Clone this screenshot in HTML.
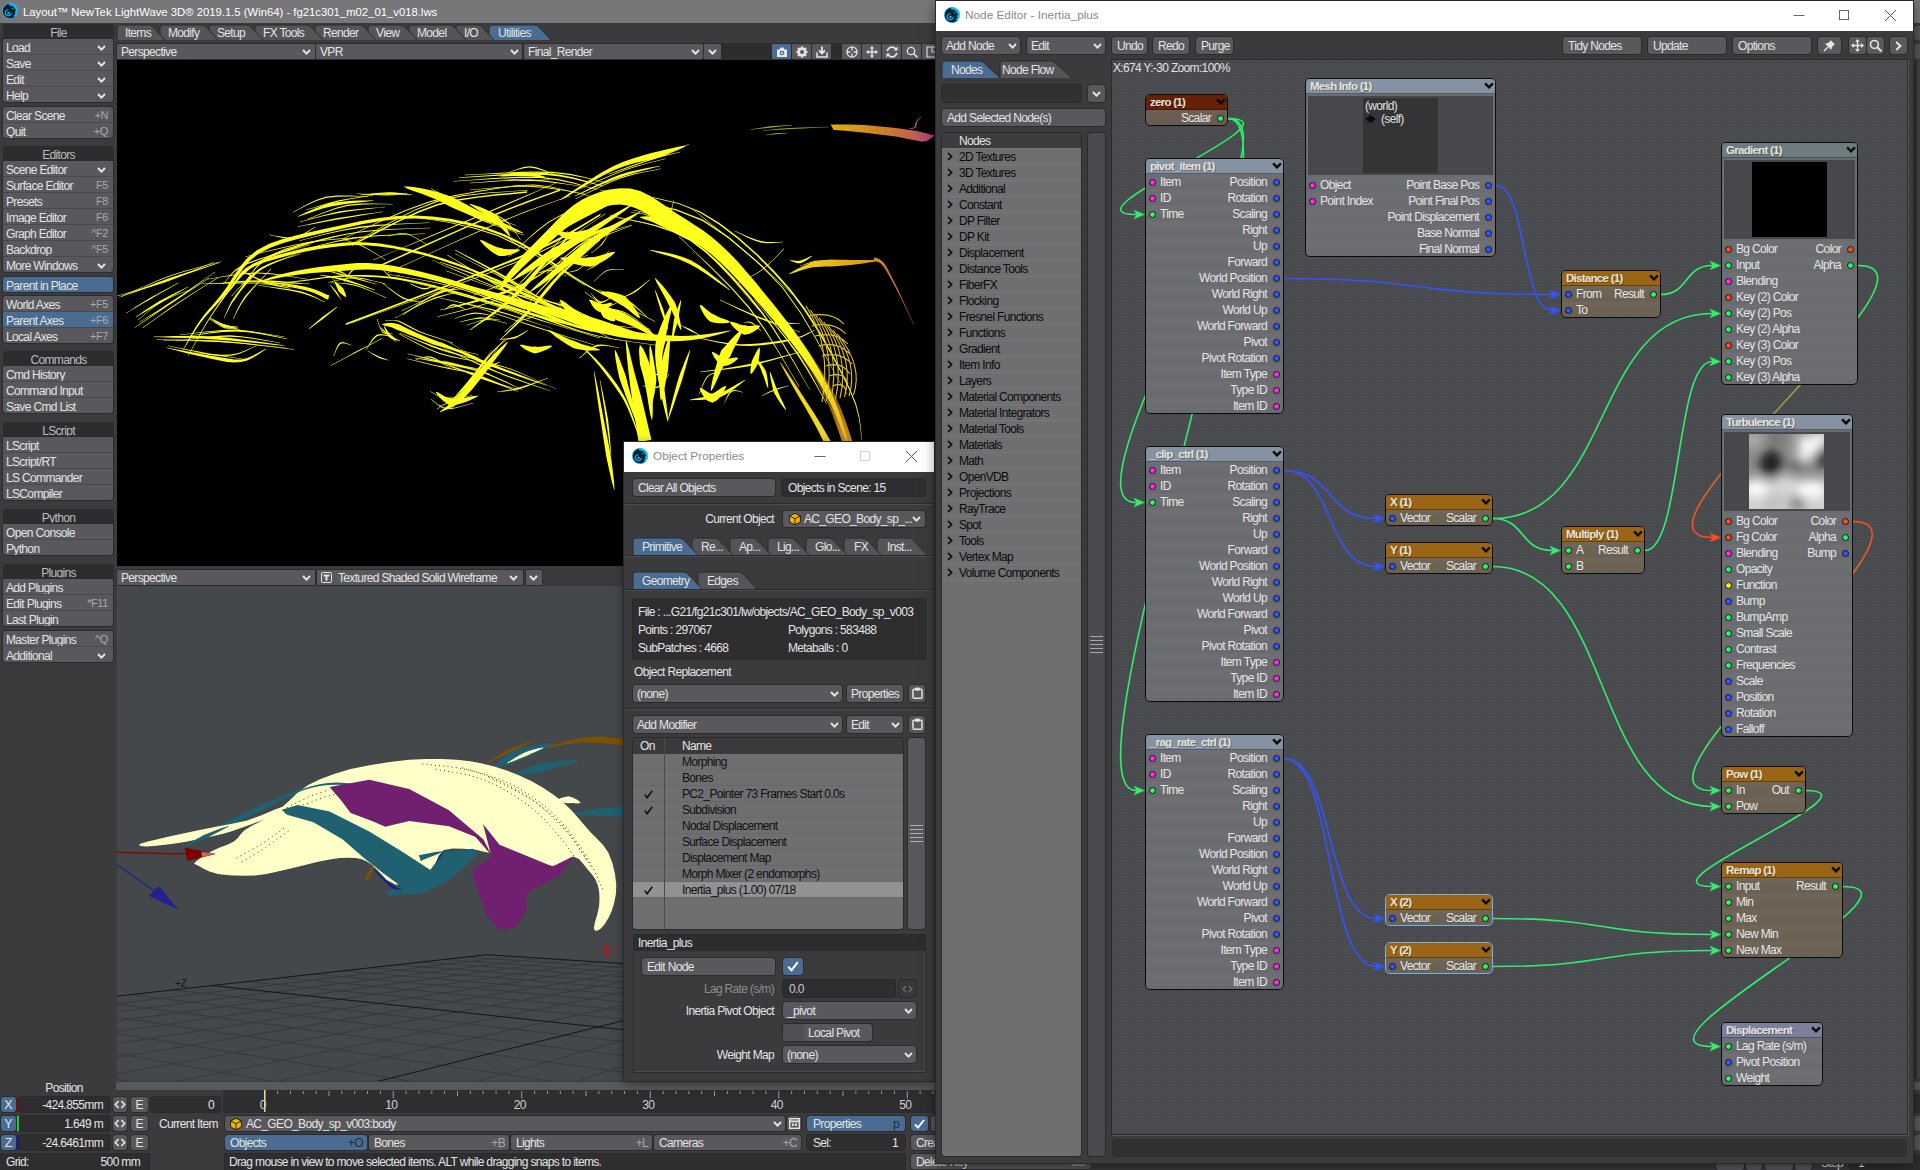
<!DOCTYPE html><html><head><meta charset="utf-8"><title>LightWave</title><style>

*{box-sizing:border-box}
html,body{margin:0;padding:0}
body{width:1920px;height:1170px;position:relative;overflow:hidden;background:#3b3b3d;font-family:"Liberation Sans",sans-serif;font-size:12px;letter-spacing:-0.66px;color:#e4e4e4;line-height:16px;white-space:nowrap;-webkit-font-smoothing:antialiased}
.a{position:absolute}
.b{position:absolute;background:#59595d;border-radius:3px;box-shadow:0 0 0 1px #2c2c2e;padding-left:4px;overflow:hidden}
.bl{background:#4a6c92}
.fl{border-radius:1px}
.hd{position:absolute;background:#2d2d2f;border-radius:3px 3px 0 0;text-align:center;color:#bcbcbc}
.row{position:absolute;left:0;right:0;height:16px;border-top:1px solid #4a4a4e;padding-left:3px;line-height:19px}
.sc{position:absolute;right:5px;top:-1px;color:#a8a8ac;font-size:11px;letter-spacing:-0.4px}
.fld{position:absolute;background:#2e2e30;border-radius:3px;box-shadow:0 0 0 1px #2a2a2c;overflow:hidden}
.chev{position:absolute;width:9px;height:6px}


.nd{position:absolute;border:1px solid #0c0c0c;border-radius:5px;overflow:hidden;color:#e6e6e6}
.nh{position:absolute;left:0;top:0;right:0;height:15px;border-bottom:1px solid rgba(0,0,0,.35);padding-left:4px;font-weight:bold;font-size:11.5px;letter-spacing:-0.72px;line-height:15px;color:#e8e4dc;text-shadow:1px 1px 0 rgba(0,0,0,.28)}
.nr{position:absolute;left:0;right:0;height:16px;background:linear-gradient(rgba(255,255,255,.022),rgba(0,0,0,.012));border-top:1px solid rgba(255,255,255,.04)}
.pt{position:absolute;width:7px;height:7px;border-radius:50%;border:1px solid #141414}
.lr{position:absolute;left:0;right:0;height:16px;border-top:1px solid #78787a;color:#0a0a0a}

</style></head><body>
<svg class="a" style="left:117px;top:60px" width="820" height="506" viewBox="117 60 820 506"><rect x="117" y="60" width="820" height="506" fill="#000"/><defs><linearGradient id="gm" gradientUnits="userSpaceOnUse" x1="830" y1="0" x2="935" y2="0"><stop offset="0" stop-color="#e0b010"/><stop offset="0.45" stop-color="#d08420"/><stop offset="0.8" stop-color="#c06050"/><stop offset="1" stop-color="#a83c90"/></linearGradient><linearGradient id="gn" gradientUnits="userSpaceOnUse" x1="790" y1="260" x2="915" y2="325"><stop offset="0" stop-color="#f0e018"/><stop offset="0.55" stop-color="#d89018"/><stop offset="0.8" stop-color="#c85838"/><stop offset="1" stop-color="#c03070"/></linearGradient><linearGradient id="gk" gradientUnits="userSpaceOnUse" x1="700" y1="240" x2="850" y2="440"><stop offset="0" stop-color="#ffff1e" stop-opacity="0"/><stop offset="0.55" stop-color="#f0c020" stop-opacity="0"/><stop offset="1" stop-color="#e0a020" stop-opacity=".9"/></linearGradient></defs><g fill="#ffff1e"><path d="M118.8 297.8L125.8 295.3L135.8 291.9L147.4 287.8L159.3 283.6L170.3 279.9L181.0 276.1L192.3 272.2L203.2 268.4L212.5 265.2L219.1 262.9L218.9 262.5L212.3 264.6L202.9 267.5L191.9 270.9L180.5 274.6L169.7 278.1L158.8 282.1L147.0 286.5L135.5 290.9L125.6 294.7L118.6 297.4Z"/><path d="M136.1 317.2L139.4 315.3L144.0 312.6L149.3 309.4L155.0 306.0L160.5 302.9L166.3 299.5L172.8 295.8L179.2 292.2L184.7 289.1L188.6 286.9L188.4 286.5L184.4 288.5L178.7 291.2L172.1 294.5L165.4 297.9L159.5 301.1L154.0 304.5L148.5 308.1L143.3 311.6L139.0 314.7L135.9 316.8Z"/><path d="M140.1 322.2L144.8 319.3L151.4 315.4L159.2 310.7L167.4 305.6L175.4 300.6L183.6 294.8L192.8 288.3L201.8 281.8L209.6 276.1L215.1 272.2L214.9 271.8L209.3 275.7L201.4 281.2L192.3 287.5L183.0 293.9L174.6 299.4L166.8 304.6L158.7 309.9L151.1 314.8L144.5 318.9L139.9 321.8Z"/><path d="M153.6 337.0L161.8 337.3L173.4 337.7L186.9 338.0L201.2 338.6L214.9 339.5L229.4 340.5L245.4 341.9L261.2 343.5L274.8 344.9L284.4 345.7L284.4 345.3L274.9 343.9L261.3 342.0L245.6 339.9L229.6 338.0L215.1 336.5L201.3 336.1L186.9 336.0L173.4 336.1L161.8 336.4L153.6 336.6Z"/><path d="M166.6 347.9L171.9 349.3L179.2 351.3L187.8 353.4L196.7 355.5L204.7 357.3L212.2 358.9L219.7 360.6L227.1 361.9L234.3 362.5L241.0 362.1L247.3 360.4L253.3 357.5L258.6 354.3L263.0 351.2L266.1 349.2L265.9 348.8L262.5 350.5L257.9 353.1L252.4 355.9L246.6 358.2L240.6 359.5L234.4 359.5L227.6 358.6L220.3 357.3L212.8 356.0L205.3 354.7L197.1 353.3L188.2 351.6L179.5 349.9L172.0 348.5L166.8 347.5Z"/><path d="M176.0 341.2L183.4 340.4L193.9 339.1L206.1 337.8L218.6 336.9L230.0 336.7L241.0 337.3L252.6 338.7L263.7 340.5L273.2 342.1L280.0 343.2L280.0 342.8L273.3 341.6L263.9 339.8L252.8 337.8L241.1 336.2L230.0 335.3L218.6 335.7L206.0 336.9L193.9 338.4L183.4 339.9L176.0 340.8Z"/><path d="M209.9 318.2L211.8 319.6L214.7 321.6L218.0 323.7L221.4 325.8L224.6 327.3L227.8 327.8L230.9 327.9L233.8 327.7L236.3 327.4L238.0 327.2L238.0 326.8L236.3 326.5L233.8 326.3L231.0 326.0L228.1 325.5L225.4 324.7L222.4 323.7L218.9 322.1L215.4 320.3L212.3 318.8L210.1 317.8Z"/><path d="M182.2 352.1L184.6 348.0L188.1 342.2L192.1 335.5L196.4 328.7L200.7 322.5L204.9 317.3L209.1 312.5L213.6 307.7L218.6 302.3L224.2 295.9L230.0 287.9L235.8 278.8L242.3 269.4L249.8 260.7L259.0 253.4L270.3 247.8L283.3 243.0L297.6 238.9L312.8 235.3L328.4 231.7L344.7 228.0L361.9 224.3L379.6 221.2L397.4 219.0L415.0 218.5L432.3 219.4L449.6 221.4L466.9 224.7L484.2 229.3L501.6 235.4L519.3 243.8L537.5 254.4L555.6 266.1L573.0 277.4L589.2 287.3L604.8 295.8L620.2 304.0L634.4 311.2L646.3 317.3L654.9 321.7L655.1 321.3L646.6 316.8L634.7 310.6L620.6 303.1L605.3 294.8L589.8 286.1L573.8 276.2L556.5 264.6L538.5 252.8L520.3 242.0L502.4 233.4L484.9 227.1L467.4 222.3L450.0 218.8L432.5 216.6L415.0 215.5L397.2 216.0L379.2 218.0L361.3 221.1L343.9 224.7L327.6 228.3L311.9 231.7L296.6 235.2L282.1 239.2L268.7 244.1L257.0 250.2L247.3 258.0L239.5 267.3L233.1 277.0L227.4 286.2L221.8 294.1L216.5 300.5L211.8 306.0L207.4 311.0L203.3 316.0L199.3 321.5L195.1 327.9L191.0 334.9L187.3 341.8L184.1 347.7L181.8 351.9Z"/><path d="M188.2 356.1L191.8 349.8L196.7 340.8L202.6 330.5L209.0 319.9L215.4 310.3L221.7 301.3L228.2 292.3L235.1 283.6L242.4 275.6L250.5 268.6L259.3 262.9L268.8 258.2L278.9 254.1L289.4 250.4L300.2 246.8L311.4 243.2L323.0 240.0L334.9 237.1L347.3 234.6L360.1 232.5L374.5 230.9L390.7 229.8L406.6 229.1L420.3 228.6L430.0 228.2L430.0 227.8L420.3 228.1L406.6 228.6L390.6 229.1L374.4 230.1L359.9 231.5L347.1 233.5L334.7 235.9L322.6 238.7L311.0 241.8L299.8 245.2L288.8 248.7L278.2 252.4L268.1 256.5L258.4 261.4L249.5 267.4L241.4 274.5L234.0 282.7L227.2 291.6L220.8 300.7L214.6 309.7L208.3 319.5L202.0 330.1L196.2 340.6L191.3 349.6L187.8 355.9Z"/><path d="M219.2 304.1L220.9 301.9L223.2 298.9L226.0 295.3L229.2 291.5L232.7 287.5L235.9 283.4L238.9 278.9L242.5 274.5L247.4 270.2L254.5 266.2L264.7 262.3L277.5 258.4L291.6 254.7L305.9 251.6L319.3 249.1L331.4 247.2L343.0 245.9L354.6 245.1L366.7 245.3L379.8 246.4L394.2 248.5L409.5 251.7L425.4 255.6L441.8 260.4L458.3 265.9L475.6 272.5L493.7 280.2L511.9 288.5L529.5 296.8L545.7 304.6L561.2 312.3L576.5 320.4L590.6 328.0L602.4 334.5L610.9 339.2L611.1 338.8L602.6 334.1L590.9 327.4L576.9 319.6L561.7 311.3L546.3 303.4L530.1 295.5L512.6 287.0L494.4 278.5L476.3 270.7L459.1 263.9L442.5 258.3L426.1 253.3L410.1 249.2L394.7 245.9L380.2 243.6L366.8 242.4L354.5 242.1L342.7 242.7L331.0 244.0L318.7 245.7L305.2 248.1L290.8 251.5L276.6 255.3L263.7 259.5L253.3 263.6L245.9 268.1L240.7 272.8L237.2 277.7L234.3 282.3L231.3 286.5L228.1 290.5L225.1 294.6L222.5 298.4L220.4 301.6L218.8 303.9Z"/><path d="M258.1 282.2L262.4 281.4L268.5 280.1L275.5 278.6L283.0 277.0L290.3 275.8L297.3 274.8L304.4 273.9L311.8 273.1L319.7 272.5L328.3 271.9L337.5 271.3L347.2 270.5L357.4 269.7L368.1 269.5L379.7 270.1L392.2 271.7L405.7 274.0L419.9 277.0L434.5 280.5L449.3 284.4L464.7 288.9L480.9 294.2L497.2 299.7L513.1 305.2L527.9 310.3L541.1 315.0L553.4 319.6L565.1 323.9L576.9 327.8L589.2 331.1L603.2 333.7L618.4 335.7L633.2 337.3L646.0 338.4L655.0 339.2L655.0 338.8L646.1 337.6L633.4 336.0L618.6 334.1L603.5 331.8L589.8 328.9L577.7 325.3L566.1 321.2L554.5 316.5L542.4 311.7L529.1 306.7L514.5 301.4L498.7 295.7L482.4 289.9L466.2 284.4L450.7 279.6L435.8 275.4L421.2 271.7L406.9 268.4L393.2 265.8L380.3 263.9L368.3 263.1L357.1 263.1L346.6 263.9L336.9 265.0L327.7 266.1L319.1 267.1L311.2 268.2L303.8 269.4L296.7 270.7L289.7 272.2L282.4 274.0L274.9 276.1L268.0 278.3L262.1 280.3L257.9 281.8Z"/><path d="M262.0 285.2L267.1 284.7L274.2 284.0L282.5 283.2L291.4 282.3L300.1 281.4L308.5 280.4L317.1 279.2L326.0 278.1L335.3 277.2L345.0 276.7L355.1 276.6L365.5 276.8L376.4 277.3L387.8 278.3L399.9 279.9L412.9 282.3L426.7 285.3L441.1 288.8L455.6 292.7L469.8 296.7L484.0 301.1L498.3 306.0L512.5 311.0L526.5 315.9L539.9 320.4L553.5 324.6L567.5 328.8L580.7 332.6L591.9 335.9L599.9 338.2L600.1 337.8L592.1 335.4L580.9 332.1L567.7 328.2L553.7 323.9L540.1 319.6L526.8 315.0L512.9 310.0L498.7 304.8L484.4 299.8L470.2 295.3L456.0 291.2L441.5 287.2L427.1 283.6L413.2 280.5L400.1 278.1L388.0 276.5L376.5 275.6L365.6 275.1L355.1 275.1L345.0 275.3L335.2 275.8L325.9 276.9L316.9 278.1L308.3 279.4L299.9 280.6L291.3 281.6L282.4 282.6L274.1 283.5L267.0 284.2L262.0 284.8Z"/><path d="M224.2 318.1L225.6 315.2L227.7 311.3L230.1 306.6L233.1 301.5L236.7 296.5L240.8 291.1L245.6 285.2L250.8 279.2L256.4 273.5L262.4 268.7L269.7 264.7L278.3 261.3L287.1 258.3L294.7 255.9L300.1 254.2L299.9 253.8L294.6 255.4L286.8 257.5L278.0 260.2L269.2 263.4L261.6 267.3L255.2 272.1L249.3 277.8L244.0 283.9L239.4 290.0L235.3 295.5L231.9 300.8L229.1 306.0L226.9 310.9L225.2 315.0L223.8 317.9Z"/><path d="M298.1 216.7L302.5 215.3L308.6 213.2L315.8 210.7L323.5 208.3L331.1 206.5L339.4 204.9L349.1 203.6L358.7 202.5L367.1 201.5L373.0 200.7L373.0 200.3L367.1 200.4L358.6 200.6L348.8 201.1L339.0 201.9L330.3 203.1L322.6 205.4L314.9 208.4L307.9 211.5L302.1 214.3L297.9 216.3Z"/><path d="M300.1 222.2L305.4 220.8L313.0 218.8L321.8 216.6L331.2 214.4L340.1 212.7L349.5 211.2L359.9 209.9L370.0 208.8L378.8 207.8L385.0 207.2L385.0 206.8L378.8 207.4L370.0 208.0L359.7 208.9L349.3 210.0L339.9 211.3L330.9 213.3L321.6 215.7L312.8 218.1L305.3 220.3L299.9 221.8Z"/><path d="M360.0 195.2L364.3 194.9L370.3 194.5L377.3 194.1L384.2 193.8L390.0 193.7L394.9 193.8L399.6 194.1L403.9 194.5L407.4 194.9L410.0 195.2L410.0 194.8L407.5 194.4L404.0 193.8L399.7 193.1L395.0 192.6L390.0 192.3L384.1 192.6L377.2 193.1L370.3 193.8L364.2 194.4L360.0 194.8Z"/><path d="M403.9 186.8L408.1 188.9L414.1 191.2L421.1 193.6L428.7 196.4L436.1 199.6L443.7 203.3L451.9 207.4L460.7 211.2L469.7 215.0L478.7 218.5L488.2 222.0L498.4 225.6L508.2 229.0L516.7 231.7L522.9 233.2L523.1 232.8L517.5 229.7L509.5 225.7L500.1 221.3L490.3 216.8L481.3 212.5L472.9 208.1L464.4 203.6L455.8 199.0L447.2 195.3L438.9 192.4L430.7 190.2L422.5 188.5L415.0 187.2L408.7 186.5L404.1 186.4Z"/><path d="M469.9 204.2L473.1 206.8L477.9 210.0L483.4 213.5L488.7 217.2L492.9 220.6L496.8 223.6L500.6 227.3L504.1 231.0L507.2 234.1L509.8 236.1L510.2 235.9L509.0 232.8L507.0 228.9L504.3 224.3L501.0 219.6L497.1 215.4L491.8 212.3L485.7 209.4L479.5 206.8L474.1 204.9L470.1 203.8Z"/><path d="M458.7 177.9L471.1 177.3L488.8 176.3L509.1 175.3L529.1 174.7L545.9 175.1L560.0 176.5L573.4 179.0L585.4 181.9L595.3 184.5L602.5 186.2L602.7 185.8L595.5 183.8L585.7 180.8L573.7 177.5L560.3 174.7L546.1 172.9L529.1 172.9L509.1 173.8L488.8 175.2L471.0 176.6L458.7 177.5Z"/><path d="M470.0 183.2L478.3 182.7L489.9 181.9L503.5 181.1L517.4 180.6L530.0 180.7L542.1 181.4L554.9 182.9L567.1 184.6L577.6 186.1L585.0 187.2L585.0 186.8L577.6 185.6L567.3 183.9L555.1 181.9L542.3 180.3L530.0 179.3L517.3 179.4L503.5 180.2L489.9 181.2L478.2 182.2L470.0 182.8Z"/><path d="M500.0 176.2L503.1 176.4L507.3 176.3L512.2 176.1L517.3 176.1L521.9 176.3L526.7 176.3L532.0 176.6L537.2 177.0L541.7 177.2L545.0 177.2L545.0 176.8L542.0 175.8L537.6 174.6L532.5 173.4L527.1 172.4L522.1 171.7L517.1 172.2L511.9 172.9L507.0 173.9L502.9 174.9L500.0 175.8Z"/><path d="M352.3 245.7L363.9 239.8L380.2 231.2L399.2 221.5L419.1 212.4L437.7 205.5L456.7 201.0L477.4 197.8L497.5 195.6L514.8 194.0L527.1 192.7L526.9 191.3L514.7 192.6L497.4 194.1L477.2 196.4L456.4 199.6L437.3 204.1L418.5 211.0L398.6 220.2L379.5 229.8L363.2 238.4L351.7 244.3Z"/><path d="M378.0 267.5L394.5 260.1L418.1 249.4L445.1 237.3L471.5 225.6L493.3 216.2L510.8 209.0L526.8 202.9L540.6 197.8L551.9 193.8L560.3 190.7L559.7 189.3L551.4 192.4L540.1 196.4L526.2 201.5L510.3 207.7L492.7 214.8L470.9 224.2L444.5 235.9L417.5 248.1L393.8 258.7L377.4 266.1Z"/><path d="M345.9 325.1L372.3 315.0L410.6 300.5L453.8 284.0L495.0 267.9L527.3 254.7L550.0 244.2L567.9 234.9L581.6 226.9L592.2 220.4L600.4 215.6L599.6 214.4L591.4 219.2L580.9 225.6L567.2 233.6L549.4 242.9L526.7 253.3L494.5 266.5L453.3 282.6L410.0 299.1L371.7 313.6L345.3 323.7Z"/><path d="M309.2 328.9L323.6 318.6L337.2 307.2L336.8 306.8L322.4 317.1L308.8 328.5Z"/><path d="M210.0 284.2L216.8 283.8L226.4 283.2L237.6 282.5L249.2 282.0L260.0 281.8L270.8 282.0L282.4 282.5L293.6 283.2L303.2 283.8L310.0 284.2L310.0 283.8L303.2 283.2L293.6 282.3L282.4 281.3L270.8 280.6L260.0 280.2L249.2 280.6L237.6 281.3L226.4 282.3L216.8 283.2L210.0 283.8Z"/><path d="M262.0 281.2L268.1 282.3L276.9 283.8L287.0 285.5L296.8 287.4L304.7 289.3L310.8 291.4L316.3 293.7L320.9 296.1L324.7 298.2L327.5 299.8L329.5 295.6L326.5 294.4L322.6 292.7L317.6 290.6L311.8 288.5L305.3 286.7L297.2 285.2L287.3 283.8L277.1 282.5L268.2 281.5L262.0 280.8Z"/><path d="M334.8 282.2L335.1 283.6L335.9 285.5L336.9 287.6L337.9 289.7L338.8 291.6L340.3 292.9L341.8 294.3L343.2 295.6L344.6 296.6L345.8 297.1L346.2 296.9L346.1 295.6L345.6 293.9L344.8 292.1L344.0 290.2L343.2 288.4L341.6 287.0L339.9 285.4L338.2 283.8L336.5 282.6L335.2 281.8Z"/><path d="M320.0 275.2L323.3 275.9L327.9 277.0L333.3 278.1L339.1 279.5L344.7 281.0L350.9 282.7L357.8 284.8L364.7 287.0L370.7 288.9L374.9 290.2L375.1 289.8L371.0 288.2L365.1 285.9L358.3 283.4L351.4 281.0L345.3 279.0L339.5 277.7L333.6 276.7L328.1 275.8L323.4 275.3L320.0 274.8Z"/><path d="M382.0 324.6L383.6 325.3L385.8 325.9L388.4 326.5L391.3 327.3L394.3 328.4L397.4 329.9L401.1 331.3L405.2 333.1L409.9 335.0L415.2 337.1L421.3 339.3L428.2 341.8L435.4 344.4L442.7 347.0L449.5 349.3L456.3 351.6L463.4 353.8L470.1 355.9L475.8 357.6L479.9 358.8L480.1 358.4L476.1 356.8L470.6 354.6L464.0 352.0L457.1 349.3L450.5 346.7L443.8 344.0L436.7 341.1L429.5 338.2L422.8 335.4L416.8 332.9L411.8 330.6L407.3 328.4L403.3 326.4L399.5 324.6L395.7 323.6L392.1 323.1L388.8 323.0L385.9 323.3L383.7 323.7L382.0 324.2Z"/><path d="M383.8 326.1L384.3 327.7L385.1 329.9L386.1 332.4L387.4 334.9L389.0 337.1L391.2 338.5L393.7 339.5L396.2 340.3L398.4 340.8L399.9 341.2L400.1 340.8L398.8 340.0L396.8 338.9L394.6 337.7L392.6 336.3L391.0 334.9L389.5 333.4L387.9 331.4L386.5 329.2L385.2 327.2L384.2 325.9Z"/><path d="M399.9 333.2L405.3 335.5L412.7 338.8L421.5 342.6L430.8 346.4L439.7 349.8L449.2 352.7L459.6 355.6L469.9 358.3L478.7 360.5L484.9 362.2L485.1 361.8L478.9 360.0L470.1 357.5L460.0 354.5L449.6 351.3L440.3 348.2L431.3 345.1L421.9 341.5L413.0 338.0L405.5 335.0L400.1 332.8Z"/><path d="M415.0 358.2L419.6 359.1L426.2 360.3L433.9 361.7L442.0 363.2L449.8 364.9L458.1 366.7L467.4 368.8L476.5 371.0L484.4 372.9L489.9 374.2L490.1 373.8L484.6 372.3L476.8 370.0L467.7 367.6L458.5 365.1L450.2 363.1L442.3 361.7L434.1 360.4L426.3 359.3L419.7 358.4L415.0 357.8Z"/><path d="M395.1 318.2L400.0 315.6L407.0 311.9L415.0 307.8L423.1 303.8L430.3 300.6L436.7 298.2L443.2 296.2L449.2 294.5L454.4 293.2L458.1 292.2L457.9 291.8L454.2 292.7L449.1 293.8L442.9 295.2L436.3 297.1L429.7 299.4L422.6 302.7L414.6 306.9L406.6 311.3L399.8 315.2L394.9 317.8Z"/><path d="M460.1 322.2L462.8 321.6L466.6 320.7L471.1 319.8L475.8 319.1L480.0 318.7L484.3 318.6L488.9 318.9L493.4 319.4L497.2 319.9L500.0 320.2L500.0 319.8L497.3 319.4L493.5 318.7L489.0 318.0L484.3 317.5L480.0 317.3L475.6 317.9L470.9 318.9L466.5 320.1L462.7 321.1L459.9 321.8Z"/><path d="M500.2 290.1L502.2 288.5L504.4 286.2L507.0 283.2L510.4 279.5L515.0 274.9L521.2 268.8L528.8 261.5L537.2 253.6L545.7 245.8L553.6 238.8L560.9 232.4L567.8 226.2L574.5 220.6L581.2 215.9L588.1 212.2L595.9 209.2L604.1 206.7L612.3 205.1L620.3 204.6L627.6 205.4L634.5 207.7L642.1 211.1L650.3 215.9L658.9 221.3L667.8 226.7L676.8 231.8L685.6 236.9L694.3 242.2L703.0 248.0L711.6 254.6L720.2 262.3L728.9 270.8L737.7 280.0L746.5 289.7L755.4 299.6L764.5 309.9L773.8 320.8L782.9 331.9L791.7 342.9L799.6 353.4L806.6 363.4L813.1 373.1L819.0 382.6L824.5 392.0L829.7 401.6L834.5 412.0L839.2 423.3L843.3 434.2L846.9 443.5L849.8 450.1L850.2 449.9L848.5 443.0L845.9 433.3L842.5 422.1L838.6 410.4L834.3 399.4L829.7 389.3L824.7 379.4L819.2 369.3L813.1 359.1L806.4 348.6L798.8 337.6L790.4 326.1L781.6 314.5L772.6 303.2L763.8 292.4L755.3 282.1L746.7 271.9L738.1 262.1L729.3 252.9L720.4 244.4L711.4 236.8L702.4 230.1L693.5 224.2L684.7 218.6L676.2 213.3L667.8 207.6L659.3 201.7L650.3 196.0L640.8 191.2L630.4 188.6L620.0 188.2L609.8 189.5L599.9 192.1L590.6 195.6L581.9 199.8L573.8 204.9L566.4 210.9L559.7 217.5L553.1 224.3L546.4 231.2L538.9 238.8L530.9 247.3L523.0 255.8L515.9 263.8L510.2 270.5L506.1 276.0L503.3 280.6L501.5 284.4L500.4 287.4L499.8 289.9Z"/><path d="M560.1 200.2L567.8 195.9L578.6 189.6L591.0 182.3L603.6 175.3L614.8 169.8L625.0 166.0L635.1 163.1L644.9 160.7L653.9 158.7L661.7 156.2L668.4 153.7L674.2 151.5L679.0 149.5L682.8 147.8L685.6 146.2L685.4 145.8L682.3 146.1L678.1 146.8L673.0 147.9L667.1 149.3L660.3 151.0L652.4 152.8L643.5 155.3L633.7 158.2L623.4 161.7L613.2 166.2L602.0 172.3L589.6 179.9L577.5 187.8L567.1 194.8L559.9 199.8Z"/><path d="M575.1 196.2L581.4 193.5L590.3 189.6L600.6 185.1L611.0 180.7L620.4 177.3L629.3 174.3L638.5 171.7L647.3 169.5L654.7 167.6L660.1 166.2L659.9 165.8L654.5 166.8L647.0 168.1L638.1 169.9L628.6 172.1L619.6 174.7L610.2 178.6L599.8 183.4L589.7 188.3L581.0 192.7L574.9 195.8Z"/><path d="M600.0 190.2L613.7 192.3L633.2 194.8L655.8 198.5L678.9 204.1L699.7 212.5L718.7 224.2L737.7 238.7L756.1 255.1L773.4 272.7L789.3 290.6L804.0 309.9L817.8 331.2L830.3 352.9L841.0 373.1L849.5 390.2L855.2 404.2L858.4 416.1L860.1 426.0L860.9 434.0L861.8 440.0L862.2 440.0L861.4 434.0L860.7 426.0L859.2 415.9L856.1 403.8L850.5 389.8L842.1 372.5L831.5 352.2L819.2 330.4L805.4 308.9L790.7 289.4L774.7 271.5L757.2 253.9L738.6 237.5L719.5 223.1L700.3 211.5L679.2 203.2L656.0 197.7L633.3 194.2L613.8 191.8L600.0 189.8Z"/><path d="M609.9 215.2L621.0 217.9L636.6 221.4L654.7 226.0L673.1 232.3L689.6 240.6L704.4 251.6L719.1 264.9L733.3 279.7L746.8 295.2L759.4 310.4L771.6 327.0L783.4 345.4L794.2 363.5L803.3 379.1L809.8 390.1L810.2 389.9L803.7 378.8L794.9 363.1L784.3 344.9L772.6 326.3L760.6 309.6L748.1 294.1L734.6 278.5L720.3 263.6L705.5 250.3L690.4 239.4L673.6 231.2L655.0 225.1L636.8 220.7L621.1 217.4L610.1 214.8Z"/><path d="M520.2 262.2L526.0 258.0L533.8 251.7L542.9 244.3L552.5 237.0L561.8 230.8L571.5 224.7L582.7 218.7L593.8 213.0L603.5 208.1L610.1 204.2L609.9 203.8L602.6 206.1L592.4 209.8L580.7 214.4L568.8 219.6L558.2 225.2L548.9 232.4L539.8 240.7L531.4 249.1L524.5 256.4L519.8 261.8Z"/><path d="M540.2 270.2L545.8 266.2L553.5 260.4L562.6 253.7L572.0 247.1L581.0 241.8L590.1 236.9L600.3 232.4L610.4 228.3L619.0 224.9L625.1 222.2L624.9 221.8L618.6 223.6L609.6 226.3L599.3 229.8L588.7 233.8L579.0 238.2L570.1 244.3L560.9 251.5L552.2 258.8L544.9 265.2L539.8 269.8Z"/><path d="M555.9 232.2L557.7 233.9L560.5 235.8L563.9 237.7L567.9 239.2L572.2 240.0L576.6 238.7L580.9 236.7L584.8 234.4L588.0 232.2L590.1 230.2L589.9 229.8L587.0 229.8L583.2 230.5L579.0 231.4L574.9 232.0L571.8 232.0L568.9 232.3L565.4 232.2L561.8 231.8L558.6 231.5L556.1 231.8Z"/><path d="M640.0 217.2L642.4 218.6L645.8 219.8L649.8 221.1L654.1 222.8L658.6 225.1L664.4 227.6L671.5 231.1L678.7 235.0L685.2 238.3L689.9 240.2L690.1 239.8L686.3 236.4L680.6 232.0L673.9 227.1L667.3 222.5L661.4 218.9L655.9 217.3L650.9 216.5L646.4 216.3L642.7 216.4L640.0 216.8Z"/><path d="M439.9 278.7L448.0 281.6L459.6 285.4L473.0 289.7L486.8 294.0L499.4 298.1L510.9 301.8L522.5 305.6L533.8 309.3L544.7 312.9L554.9 316.4L564.3 319.8L573.1 323.3L581.6 326.6L590.1 329.7L598.7 332.5L607.5 334.6L616.2 336.4L624.8 338.0L633.6 339.2L642.6 340.1L652.0 340.8L661.7 341.1L671.4 341.2L681.0 340.9L690.2 340.2L699.4 338.9L708.9 336.9L717.8 334.7L725.2 332.6L730.6 331.0L730.4 330.6L724.9 331.2L717.3 332.4L708.3 333.9L698.9 335.1L689.8 335.8L680.9 335.9L671.5 335.6L662.0 335.1L652.5 334.2L643.4 333.1L634.7 331.7L626.3 330.0L618.0 328.1L609.7 325.9L601.3 323.5L592.8 321.2L584.5 318.5L575.9 315.7L566.8 312.6L557.1 309.6L546.6 306.6L535.5 303.5L524.1 300.3L512.4 297.1L500.6 293.9L487.8 290.5L473.8 286.7L460.2 283.2L448.4 280.2L440.1 278.3Z"/><path d="M439.9 290.2L448.1 292.3L459.6 295.3L472.9 298.8L486.8 302.5L499.7 306.0L511.7 309.4L523.6 313.1L535.6 316.6L547.7 319.9L559.8 323.0L572.8 325.9L586.7 328.8L600.2 331.5L611.8 333.6L619.9 335.2L620.1 334.8L611.9 333.0L600.4 330.4L587.0 327.4L573.2 324.2L560.2 321.0L548.3 317.7L536.4 314.2L524.4 310.6L512.3 307.2L500.3 304.0L487.3 300.8L473.3 297.4L459.8 294.3L448.2 291.7L440.1 289.8Z"/><path d="M439.9 262.2L448.0 265.2L459.5 269.5L472.9 274.5L486.7 279.8L499.6 284.9L511.9 290.1L524.5 295.6L536.9 301.0L548.8 306.2L559.6 310.9L569.5 315.5L579.0 320.0L587.6 324.2L594.7 327.7L599.9 330.2L600.1 329.8L595.0 327.1L588.1 323.3L579.7 318.8L570.3 313.9L560.4 309.1L549.8 304.1L538.0 298.7L525.5 293.2L512.8 288.0L500.4 283.1L487.3 278.2L473.4 273.2L459.9 268.5L448.3 264.6L440.1 261.8Z"/><path d="M454.9 250.2L462.2 254.3L472.5 260.0L484.6 266.6L497.3 273.8L509.5 280.9L522.2 288.5L536.1 297.1L549.8 305.6L561.6 313.0L569.9 318.2L570.1 317.8L561.9 312.4L550.4 304.7L536.9 295.8L523.1 286.9L510.5 279.1L498.3 272.2L485.4 265.3L473.1 259.0L462.6 253.6L455.1 249.8Z"/><path d="M440.1 310.2L445.5 309.0L453.2 307.4L462.3 305.5L471.6 303.3L480.3 301.0L488.3 298.7L496.4 296.4L504.4 293.7L512.4 290.6L520.4 286.9L529.1 282.2L538.3 276.6L547.2 270.8L554.7 265.7L560.1 262.2L559.9 261.8L554.4 265.1L546.6 269.9L537.6 275.4L528.2 280.7L519.6 285.1L511.6 288.4L503.6 291.3L495.6 293.9L487.7 296.5L479.7 299.0L471.1 301.6L461.9 304.1L453.0 306.4L445.4 308.4L439.9 309.8Z"/><path d="M470.1 330.2L475.8 326.5L483.8 321.2L493.1 314.9L502.5 308.0L511.0 301.1L518.6 294.0L526.0 286.4L533.1 278.4L539.7 270.5L546.1 263.0L552.8 255.6L559.6 248.0L566.0 240.8L571.4 234.6L575.2 230.2L574.8 229.8L570.6 233.9L564.8 239.7L558.0 246.5L550.8 253.8L543.9 261.0L537.1 268.2L530.1 275.9L523.2 283.8L516.2 291.6L509.0 298.9L500.9 306.0L491.8 313.2L482.9 319.9L475.2 325.6L469.9 329.8Z"/><path d="M500.2 340.2L504.4 336.3L510.3 330.9L517.2 324.4L524.3 317.5L530.9 310.8L536.9 304.2L542.7 297.3L548.5 290.2L554.4 283.0L560.9 275.9L568.7 268.2L577.8 260.0L586.8 252.0L594.7 245.1L600.2 240.2L599.8 239.8L594.1 244.5L586.0 251.0L576.6 258.7L567.3 266.7L559.1 274.1L552.3 281.2L546.1 288.3L540.3 295.4L534.8 302.4L529.1 309.2L522.8 316.1L516.0 323.2L509.4 329.9L503.8 335.7L499.8 339.8Z"/><path d="M559.8 300.2L560.9 303.2L563.1 307.0L565.9 311.2L569.0 315.3L572.2 318.8L576.3 320.6L580.4 321.7L584.2 322.4L587.4 322.6L589.9 322.2L590.1 321.8L588.5 319.7L586.0 317.8L583.1 315.7L580.2 313.5L577.8 311.2L574.5 309.3L570.6 306.5L566.7 303.6L563.2 301.1L560.2 299.8Z"/><path d="M589.8 300.2L590.4 302.2L591.7 304.8L593.5 307.5L596.0 310.1L599.5 312.0L603.3 311.1L606.4 309.3L609.0 307.1L611.0 305.0L612.1 303.2L611.9 302.8L609.7 302.7L606.9 303.4L604.1 304.1L601.6 304.4L600.5 304.0L599.4 304.1L597.2 303.2L594.7 301.7L592.3 300.4L590.2 299.8Z"/><path d="M439.9 342.2L444.0 344.4L449.8 347.5L456.6 351.1L463.7 354.6L470.3 357.8L476.2 360.5L481.9 363.0L487.7 365.3L494.0 367.6L501.2 370.1L510.1 373.3L520.5 376.9L531.0 380.4L540.2 383.5L546.6 385.6L546.8 385.2L540.5 382.7L531.4 379.2L521.1 375.3L510.8 371.3L502.0 367.9L495.0 365.0L488.8 362.5L483.0 360.2L477.3 358.0L471.3 355.6L464.6 352.7L457.4 349.5L450.4 346.4L444.4 343.7L440.1 341.8Z"/><path d="M439.9 363.0L445.5 365.1L453.5 368.0L462.7 371.3L472.1 374.8L480.6 378.0L488.9 381.0L497.6 384.2L505.8 387.3L512.9 389.9L517.9 391.8L518.1 391.4L513.2 389.3L506.3 386.3L498.1 382.8L489.6 379.3L481.4 376.0L472.7 373.0L463.2 369.9L453.8 366.9L445.8 364.4L440.1 362.6Z"/><path d="M440.1 412.2L443.0 411.1L446.9 409.5L451.6 407.2L456.8 403.9L462.3 399.5L468.4 393.4L475.1 385.7L481.8 377.3L487.9 369.2L492.9 362.4L497.1 357.0L500.8 352.3L503.9 348.2L506.3 344.8L507.9 342.2L507.5 341.8L505.0 343.7L501.9 346.4L498.1 349.9L493.9 354.2L489.1 359.2L483.4 365.6L476.8 373.3L470.1 381.7L464.0 389.6L458.7 395.9L454.1 400.5L449.6 404.3L445.6 407.2L442.2 409.7L439.9 411.8Z"/><path d="M435.8 392.2L437.3 394.4L439.6 397.4L442.8 400.6L446.8 403.5L451.7 405.4L457.4 404.6L463.5 402.8L469.5 400.4L474.6 398.1L478.1 396.2L477.9 395.8L474.0 396.0L468.5 397.0L462.4 398.2L456.6 398.9L452.3 398.6L449.0 398.2L445.4 396.7L441.9 394.7L438.7 392.8L436.2 391.8Z"/><path d="M588.9 300.2L591.2 302.7L594.8 305.7L599.2 309.0L603.9 312.3L608.3 315.3L612.6 317.9L616.8 320.3L621.2 322.1L625.7 323.6L630.2 325.3L635.3 327.5L640.9 330.2L646.4 332.9L651.2 335.1L654.9 336.2L655.1 335.8L652.5 333.0L648.5 329.6L643.6 325.8L638.5 322.0L633.8 318.7L629.3 315.9L625.0 313.5L620.5 311.6L616.1 310.2L611.7 308.7L606.9 306.7L601.8 304.5L596.8 302.3L592.5 300.6L589.1 299.8Z"/><path d="M599.9 292.2L602.6 294.4L606.7 296.5L611.4 298.8L615.8 301.3L619.4 304.0L623.5 306.3L628.0 309.6L632.4 313.3L636.5 316.4L639.8 318.2L640.2 317.8L638.8 314.4L636.1 309.9L632.7 305.0L628.8 300.2L624.6 296.0L619.2 293.9L613.5 292.6L608.1 291.8L603.5 291.5L600.1 291.8Z"/><path d="M448.2 405.2L451.2 401.9L455.6 397.4L460.6 392.0L465.9 386.2L470.7 380.6L475.4 374.3L480.4 367.3L485.2 360.4L489.3 354.3L492.2 350.1L491.8 349.9L488.8 354.0L484.4 359.8L479.3 366.5L474.1 373.4L469.3 379.4L464.6 385.2L459.6 391.1L454.8 396.7L450.8 401.5L447.8 404.8Z"/><path d="M460.2 392.2L463.0 389.4L467.1 385.4L471.7 380.9L476.5 376.5L480.8 373.1L484.9 370.2L489.4 367.7L493.7 365.5L497.5 363.6L500.1 362.2L499.9 361.8L497.1 362.8L493.2 364.1L488.5 365.9L483.7 368.2L479.2 370.9L474.9 374.8L470.4 379.6L466.0 384.5L462.4 388.8L459.8 391.8Z"/><path d="M497.0 392.2L500.1 391.8L504.4 391.4L509.4 390.8L514.9 389.9L520.2 388.8L525.9 386.9L532.4 384.5L538.7 382.0L544.2 379.7L548.1 378.2L547.9 377.8L544.0 379.2L538.4 381.2L532.0 383.4L525.5 385.6L519.8 387.2L514.6 388.6L509.2 389.7L504.2 390.6L500.0 391.3L497.0 391.8Z"/><path d="M625.8 340.0L625.9 344.2L626.3 350.1L626.9 356.9L627.6 363.9L628.3 370.5L629.0 376.4L629.7 382.2L630.5 388.0L631.4 394.2L632.3 400.9L633.5 409.1L635.0 418.6L636.5 428.1L637.7 436.4L638.5 442.3L651.5 439.7L650.0 434.1L648.1 425.9L645.9 416.5L643.7 407.2L641.7 399.1L640.0 392.4L638.3 386.4L636.7 380.8L635.2 375.2L633.7 369.5L632.1 363.1L630.5 356.3L628.9 349.6L627.4 344.0L626.2 340.0Z"/><path d="M669.3 336.6L667.4 341.0L665.5 347.3L663.5 354.8L661.6 362.4L660.0 369.5L659.7 376.4L659.7 383.6L659.7 390.4L660.1 396.3L660.8 400.5L661.2 400.5L662.7 396.5L664.0 390.8L665.3 384.1L666.6 377.2L668.0 370.5L668.5 363.5L669.1 355.7L669.7 348.1L670.0 341.4L669.7 336.6Z"/><path d="M649.8 345.0L649.4 350.0L649.5 356.9L649.7 364.9L649.9 372.9L649.6 380.0L649.9 386.6L649.7 393.5L649.5 400.2L649.4 405.9L649.8 410.0L650.2 410.0L651.6 406.1L653.0 400.6L654.4 394.1L655.6 387.0L656.4 380.0L655.6 372.6L654.4 364.5L653.0 356.5L651.6 349.7L650.2 345.0Z"/><path d="M593.8 371.0L594.8 379.1L596.3 390.5L598.2 403.7L600.3 417.5L602.2 430.3L604.2 443.2L606.4 457.2L609.3 470.6L611.9 482.0L614.2 490.0L614.6 490.0L614.0 481.6L612.7 470.0L610.9 456.4L608.3 442.5L605.8 429.7L603.3 416.9L600.7 403.3L598.2 390.1L595.9 378.9L594.2 371.0Z"/><path d="M599.8 380.0L600.7 385.6L601.9 393.5L603.3 402.6L604.8 411.8L605.9 420.2L607.1 428.0L608.3 436.1L609.3 443.8L610.2 450.4L610.8 455.0L611.2 455.0L610.9 450.3L610.4 443.7L609.8 436.0L609.0 427.8L608.1 419.8L606.6 411.5L604.8 402.3L603.0 393.3L601.3 385.5L600.2 380.0Z"/><path d="M680.8 299.9L679.7 302.6L678.3 306.3L676.8 310.7L675.3 315.3L674.0 319.6L673.4 324.0L672.7 328.7L672.2 333.2L671.9 337.2L671.8 340.0L672.2 340.0L673.2 337.4L674.3 333.6L675.5 329.2L676.8 324.7L678.0 320.4L678.7 316.1L679.5 311.4L680.3 306.8L680.9 302.9L681.2 300.1Z"/><path d="M654.8 290.1L655.6 292.9L656.7 296.8L658.0 301.4L659.5 306.1L660.7 310.4L662.3 314.7L663.9 319.2L665.4 323.6L666.8 327.4L667.8 330.1L668.2 329.9L667.6 327.2L666.8 323.2L665.7 318.7L664.5 314.0L663.3 309.6L661.6 305.3L659.8 300.7L658.0 296.3L656.4 292.6L655.2 289.9Z"/><path d="M579.8 345.2L582.4 347.8L585.9 351.3L590.1 355.6L594.6 360.4L599.1 365.8L603.8 371.8L608.9 378.6L614.2 385.8L619.4 393.2L623.9 400.6L627.9 408.7L631.6 417.9L635.0 426.8L637.7 434.6L639.8 440.1L640.2 439.9L638.5 434.4L636.2 426.4L633.2 417.3L629.8 407.9L626.1 399.4L621.7 391.7L616.7 384.0L611.3 376.7L605.9 370.1L600.9 364.2L596.1 359.0L591.3 354.4L586.8 350.4L582.9 347.2L580.2 344.8Z"/><path d="M689.8 349.9L688.1 353.7L685.8 359.0L683.3 365.4L680.6 372.3L678.1 379.4L675.9 387.5L673.4 396.8L671.0 406.1L669.0 414.2L667.8 419.9L668.2 420.1L670.3 414.6L673.1 406.7L676.1 397.6L679.2 388.5L681.9 380.6L683.9 373.4L686.0 366.3L687.8 359.7L689.3 354.1L690.2 350.1Z"/><path d="M729.9 322.2L731.2 324.6L733.6 327.3L736.7 330.2L740.2 332.8L744.4 334.7L748.8 333.9L752.7 332.2L756.0 330.2L758.5 328.2L760.1 326.2L759.9 325.8L757.4 325.3L754.2 325.6L750.8 325.9L747.7 325.9L745.6 325.3L743.3 325.3L739.9 324.4L736.3 323.1L732.9 322.0L730.1 321.8Z"/><path d="M711.8 352.2L712.7 354.5L714.3 357.5L716.6 360.7L719.4 363.7L723.1 365.9L727.3 365.5L731.0 363.9L734.1 362.0L736.6 360.0L738.1 358.2L737.9 357.8L735.6 357.6L732.5 358.0L729.3 358.5L726.5 358.6L724.9 358.1L723.1 357.8L720.4 356.4L717.4 354.5L714.5 352.7L712.2 351.8Z"/><path d="M699.8 388.2L700.5 390.7L702.0 394.0L704.3 397.6L707.4 400.8L712.4 402.7L717.0 400.3L720.3 396.7L723.1 392.7L725.2 389.0L726.2 386.2L725.8 385.8L722.9 386.9L719.5 389.3L715.9 391.8L712.8 393.4L711.6 393.3L711.2 393.7L708.7 392.7L705.7 390.7L702.7 388.7L700.2 387.8Z"/><path d="M689.9 336.2L696.7 337.7L706.3 340.0L717.5 342.5L729.1 344.6L740.0 345.8L750.4 345.9L761.3 345.3L771.9 344.1L781.8 342.5L790.2 340.8L797.2 338.8L803.2 336.4L808.2 333.9L812.1 331.7L815.1 330.2L814.9 329.8L811.9 331.2L807.8 333.1L802.8 335.4L796.8 337.5L789.8 339.2L781.4 340.6L771.7 342.0L761.1 343.2L750.4 344.1L740.0 344.2L729.3 343.3L717.7 341.4L706.5 339.2L696.9 337.2L690.1 335.8Z"/><path d="M700.0 372.2L706.8 371.4L716.5 370.5L727.7 369.2L739.3 367.7L750.2 365.9L761.0 363.4L772.6 360.2L783.7 357.0L793.3 354.2L800.1 352.2L799.9 351.8L793.1 353.6L783.5 356.1L772.2 359.0L760.6 361.8L749.8 364.1L739.1 366.1L727.5 367.9L716.3 369.5L706.8 370.8L700.0 371.8Z"/><path d="M769.8 372.1L770.1 374.9L770.7 378.9L771.7 383.6L772.8 388.4L774.1 392.8L776.4 396.8L779.0 400.9L781.6 404.7L784.0 407.9L785.8 410.1L786.2 409.9L785.1 407.2L783.4 403.6L781.4 399.5L779.4 395.2L777.9 391.2L776.1 387.3L774.4 382.8L772.8 378.4L771.4 374.6L770.2 371.9Z"/><path d="M755.8 358.1L756.6 360.2L757.9 363.1L759.5 366.3L761.0 369.6L762.1 372.8L763.5 375.8L764.7 379.4L765.8 382.9L766.9 385.9L767.8 388.1L768.2 387.9L768.2 385.7L767.9 382.4L767.5 378.7L766.8 374.8L765.9 371.2L764.1 368.1L761.9 364.9L759.7 361.9L757.7 359.5L756.2 357.9Z"/><path d="M719.9 300.2L725.3 302.8L732.9 306.5L741.8 310.7L751.1 315.0L759.7 318.8L768.4 321.9L777.7 325.1L786.7 328.0L794.5 330.4L799.9 332.2L800.1 331.8L794.6 329.9L787.0 327.2L778.1 324.0L768.9 320.6L760.3 317.2L751.6 313.7L742.3 309.7L733.3 305.7L725.6 302.3L720.1 299.8Z"/><path d="M789.9 260.2L791.2 260.8L793.0 261.7L795.2 262.6L797.6 263.2L800.2 263.3L802.9 262.3L805.7 260.7L808.3 259.0L810.6 257.3L812.1 256.2L811.9 255.8L810.1 256.6L807.6 257.7L804.8 259.1L802.0 260.1L799.8 260.7L797.8 260.9L795.6 260.8L793.4 260.4L791.5 260.0L790.1 259.8Z"/><path d="M515.1 278.2L519.8 276.2L526.1 272.8L533.2 268.8L540.4 264.7L546.9 261.2L552.1 258.8L556.6 257.0L561.1 254.7L566.6 251.1L573.9 246.2L584.7 238.8L598.3 229.5L612.4 219.6L624.8 210.7L633.1 204.2L632.9 203.8L623.5 208.7L610.3 216.3L595.5 225.1L581.3 233.4L570.1 239.8L562.4 243.8L556.7 246.3L552.2 248.6L548.0 251.4L543.1 254.8L537.0 259.3L530.3 264.4L523.9 269.6L518.4 274.2L514.9 277.8Z"/><path d="M530.2 292.2L534.5 289.6L540.4 285.8L547.2 281.0L554.5 275.7L561.9 270.4L569.6 264.7L577.7 258.4L585.9 251.6L593.9 244.8L601.7 238.5L610.0 232.5L619.0 226.5L627.7 220.9L635.0 216.0L640.1 212.2L639.9 211.8L634.1 214.3L626.1 218.1L616.8 222.8L607.2 228.1L598.3 233.5L589.7 239.3L581.1 245.6L572.8 252.4L565.2 259.3L558.1 265.6L551.3 271.7L544.5 277.7L538.4 283.3L533.3 288.1L529.8 291.8Z"/><path d="M597.8 304.2L598.0 306.5L599.0 309.1L600.5 312.0L602.0 314.9L603.5 317.5L605.9 318.8L608.4 320.0L610.7 320.8L612.9 321.3L614.8 321.2L615.2 320.8L615.0 318.9L614.1 316.9L612.9 314.7L611.7 312.6L610.5 310.5L608.2 309.2L605.6 307.4L603.0 305.7L600.4 304.4L598.2 303.8Z"/><path d="M539.9 300.2L543.1 302.3L547.7 305.0L553.2 308.1L559.2 311.1L565.3 313.9L571.5 316.3L578.0 318.5L584.9 320.4L592.1 322.1L599.4 324.0L607.8 326.1L617.1 328.6L626.3 331.0L634.3 333.0L639.9 334.2L640.1 333.8L634.7 331.7L626.9 328.9L617.9 325.9L608.8 322.8L600.6 320.0L593.3 317.7L586.3 315.5L579.4 313.6L572.9 311.9L566.7 310.1L560.6 307.9L554.4 305.5L548.6 303.1L543.7 301.1L540.1 299.8Z"/><path d="M671.8 303.9L669.3 307.8L666.3 313.5L663.2 320.3L660.3 327.4L658.0 334.0L656.1 339.7L655.4 345.1L655.1 350.8L655.2 357.3L655.9 365.2L657.5 375.9L660.0 388.9L662.8 402.3L665.6 414.0L667.8 422.0L668.2 422.0L667.6 413.6L666.1 401.7L664.3 388.2L662.8 375.2L662.1 364.8L662.3 357.3L662.9 351.4L664.0 346.5L665.4 341.6L666.0 336.0L667.1 329.4L668.7 322.1L670.4 314.9L671.8 308.7L672.2 304.1Z"/><path d="M654.8 278.1L656.5 282.2L659.5 287.5L663.0 293.7L666.4 299.9L669.0 305.5L671.8 310.7L674.4 316.4L676.7 322.0L678.9 326.8L680.8 330.1L681.2 329.9L681.0 326.1L680.1 321.0L678.8 314.9L677.1 308.6L675.0 302.5L671.3 296.9L666.9 291.0L662.4 285.5L658.3 280.9L655.2 277.9Z"/><path d="M741.8 329.9L738.7 331.9L735.1 335.3L731.1 339.5L727.3 343.7L724.0 347.4L721.4 350.3L720.1 353.4L719.0 356.4L717.9 359.7L716.7 363.7L715.2 368.9L713.7 375.0L712.2 381.3L711.1 386.9L710.8 390.9L711.2 391.1L713.3 387.7L715.8 382.5L718.4 376.7L721.0 371.0L723.3 366.3L725.3 363.1L727.0 360.5L728.7 358.3L730.6 356.0L732.0 352.6L734.0 348.3L736.6 343.3L739.2 338.3L741.3 333.7L742.2 330.1Z"/><path d="M759.3 347.6L757.8 349.4L756.3 352.0L754.7 355.1L753.2 358.2L751.8 360.9L751.3 363.8L750.9 366.8L750.5 369.6L750.3 372.0L750.6 373.9L751.0 374.1L752.4 372.8L753.8 370.8L755.3 368.3L756.8 365.7L758.2 363.1L758.7 359.9L759.2 356.5L759.7 353.0L759.9 350.0L759.7 347.8Z"/><path d="M639.8 345.1L639.0 350.2L639.4 357.1L640.1 365.0L642.4 373.0L644.3 380.6L645.9 388.7L647.5 397.8L648.9 406.8L650.3 414.6L651.8 420.0L652.2 420.0L652.7 414.4L652.8 406.5L652.7 397.3L652.3 387.9L651.7 379.4L650.7 371.3L649.3 362.9L646.3 355.4L643.3 349.1L640.2 344.9Z"/><path d="M614.8 350.1L615.0 354.9L616.0 361.6L617.5 369.4L619.3 377.8L622.2 385.9L625.5 394.9L629.4 405.1L633.4 415.3L637.0 424.0L639.8 430.1L640.2 429.9L638.8 423.4L636.3 414.3L633.3 403.8L630.3 393.3L627.8 384.1L625.8 375.8L622.8 367.8L620.0 360.4L617.5 354.3L615.2 349.9Z"/><path d="M699.8 305.2L700.5 307.7L702.0 311.0L704.1 314.7L706.7 318.4L710.0 321.5L714.4 322.7L719.1 323.2L723.5 323.2L727.3 322.9L730.0 322.2L730.0 321.8L727.6 320.3L724.1 319.0L720.2 317.7L716.6 316.1L714.0 314.5L711.3 313.2L708.3 310.9L705.3 308.4L702.6 306.1L700.2 304.8Z"/><path d="M774.9 318.2L776.6 320.3L779.3 322.9L782.5 325.9L785.6 329.0L788.0 331.8L790.6 334.4L793.3 337.5L795.7 340.7L798.0 343.4L799.8 345.1L800.2 344.9L799.5 342.5L798.2 339.2L796.4 335.5L794.3 331.7L792.0 328.2L788.6 325.5L784.8 322.9L781.0 320.6L777.6 318.9L775.1 317.8Z"/><path d="M560.0 258.2L563.9 260.3L569.6 262.4L576.4 264.5L583.6 266.1L590.5 266.7L596.9 264.6L602.8 261.6L608.1 258.2L612.4 255.0L615.1 252.2L614.9 251.8L611.0 252.2L605.9 253.7L600.3 255.5L594.6 256.9L589.5 257.3L584.1 258.0L577.4 257.9L570.5 257.5L564.5 257.3L560.0 257.8Z"/><path d="M479.9 240.2L482.0 242.9L485.3 246.4L489.5 250.0L494.2 253.4L499.0 255.9L504.3 255.9L509.3 254.9L513.8 253.4L517.5 251.8L520.0 250.2L520.0 249.8L517.0 249.2L513.0 249.2L508.6 249.3L504.4 249.0L501.0 248.1L497.2 247.2L492.5 245.2L487.8 242.9L483.5 240.8L480.1 239.8Z"/><path d="M547.9 330.2L551.1 333.1L556.0 336.9L561.9 341.1L568.0 345.0L573.8 348.2L579.8 349.5L585.9 350.3L591.6 350.6L596.5 350.6L600.0 350.2L600.0 349.8L596.8 348.4L592.2 347.1L586.8 345.6L581.3 343.9L576.2 341.8L570.6 339.8L564.2 336.9L557.9 333.9L552.3 331.3L548.1 329.8Z"/><path d="M519.9 345.2L521.6 346.8L524.1 348.7L527.3 350.6L531.0 352.3L534.9 353.4L539.0 352.6L543.1 351.1L546.8 349.4L550.0 347.7L552.1 346.2L551.9 345.8L549.3 345.6L545.8 346.0L541.9 346.6L538.1 346.9L535.1 346.6L532.3 346.7L528.9 346.2L525.5 345.4L522.4 344.8L520.1 344.8Z"/><path d="M690.0 400.2L694.2 400.1L700.2 399.9L707.1 399.4L714.2 398.4L720.7 396.9L726.5 393.9L732.3 390.2L737.6 386.3L742.0 382.7L745.1 380.2L744.9 379.8L741.3 381.7L736.4 384.5L730.8 387.8L724.9 390.9L719.3 393.1L713.5 395.0L706.7 396.6L700.0 397.8L694.1 398.8L690.0 399.8Z"/><path d="M649.9 250.2L655.3 252.0L662.9 254.2L671.7 256.8L680.8 260.0L689.1 263.8L697.7 268.5L707.1 274.5L716.2 280.9L724.2 286.5L729.9 290.2L730.1 289.8L725.0 285.4L717.5 279.2L708.7 272.2L699.6 265.6L690.9 260.2L682.0 256.8L672.5 254.1L663.4 252.1L655.6 250.7L650.1 249.8Z"/><path d="M121.1 296.8L130.4 292.7L143.7 287.0L158.6 280.8L172.4 275.6L185.9 271.3L200.1 267.3L212.6 264.1L221.3 261.9L221.2 261.4L212.5 263.6L199.9 266.8L185.7 270.5L172.1 274.7L158.3 280.1L143.4 286.4L130.2 292.3L120.9 296.3Z"/><path d="M113.4 297.4L122.7 294.7L136.0 291.0L150.9 286.8L164.8 282.4L178.4 277.2L192.5 271.4L205.0 266.1L213.7 262.5L213.5 262.0L204.8 265.6L192.2 270.7L178.0 276.3L164.4 281.2L150.6 285.8L135.8 290.3L122.5 294.2L113.3 296.9Z"/><path d="M126.2 313.4L130.4 310.8L136.5 307.2L143.5 303.1L150.4 299.2L157.8 294.8L166.0 290.2L173.5 285.9L178.7 283.1L178.5 282.6L173.2 285.5L165.6 289.4L157.3 293.9L149.8 298.0L142.9 302.2L136.1 306.5L130.2 310.4L126.0 313.0Z"/><path d="M138.2 320.1L142.4 316.6L148.5 311.6L155.4 306.3L162.3 301.8L169.7 298.1L177.9 294.6L185.4 291.8L190.6 289.8L190.5 289.4L185.2 291.3L177.7 294.1L169.4 297.4L161.8 301.0L155.0 305.7L148.1 311.2L142.1 316.2L137.9 319.7Z"/><path d="M134.5 328.1L140.7 323.9L149.6 317.9L159.7 311.2L169.7 304.6L180.2 297.5L191.8 289.8L202.2 282.9L209.5 278.1L209.3 277.7L201.9 282.4L191.4 289.3L179.7 296.8L169.1 303.7L159.2 310.5L149.2 317.4L140.4 323.5L134.3 327.7Z"/><path d="M143.1 327.9L149.3 323.5L158.1 317.3L168.3 310.3L178.2 303.6L188.8 296.6L200.3 289.1L210.8 282.5L218.1 277.9L217.8 277.5L210.5 282.1L200.0 288.6L188.3 295.9L177.7 302.7L167.8 309.6L157.8 316.8L149.0 323.1L142.8 327.5Z"/><path d="M156.9 339.8L167.7 339.9L183.2 340.3L200.9 340.9L218.2 341.9L236.6 343.3L256.8 345.2L275.0 347.1L287.6 348.5L287.7 348.0L275.0 346.6L256.8 344.4L236.7 342.2L218.3 340.6L200.9 339.9L183.2 339.5L167.7 339.4L156.9 339.3Z"/><path d="M163.2 341.1L174.1 341.1L189.6 341.1L207.3 341.4L224.6 342.3L243.0 343.8L263.1 346.0L281.3 348.2L294.0 349.8L294.1 349.3L281.4 347.7L263.2 345.4L243.1 343.0L224.7 341.2L207.3 340.6L189.6 340.5L174.1 340.6L163.2 340.6Z"/><path d="M195.3 352.9L201.9 353.6L211.6 354.9L222.0 355.9L231.2 355.8L238.9 353.9L246.1 350.9L252.1 347.9L256.4 345.9L256.2 345.4L251.9 347.4L245.8 350.2L238.6 352.9L231.0 354.6L222.1 354.8L211.7 354.1L202.0 353.1L195.3 352.4Z"/><path d="M168.2 346.0L175.1 347.4L185.1 349.7L196.1 352.1L206.4 354.2L216.4 355.7L226.8 357.1L235.9 358.2L242.3 359.1L242.4 358.6L236.0 357.7L226.9 356.3L216.6 354.7L206.6 353.0L196.3 351.1L185.2 349.0L175.2 346.9L168.3 345.5Z"/><path d="M183.3 337.2L193.1 335.8L207.2 333.8L222.8 332.0L237.2 331.5L251.1 332.6L265.5 334.9L278.3 337.4L287.2 339.2L287.3 338.7L278.4 336.8L265.7 333.9L251.3 331.3L237.3 329.9L222.7 330.7L207.1 332.8L193.0 335.2L183.2 336.7Z"/><path d="M180.0 335.1L189.8 334.0L203.9 332.6L219.6 331.3L234.0 331.0L247.9 331.9L262.3 333.7L275.1 335.7L284.0 337.1L284.0 336.6L275.2 335.2L262.4 332.9L248.0 330.8L234.0 329.6L219.5 330.2L203.8 331.8L189.8 333.5L180.0 334.6Z"/><path d="M209.4 319.2L212.1 321.0L216.0 323.6L220.3 326.3L224.3 328.2L228.2 328.8L232.0 328.7L235.2 328.4L237.5 328.3L237.5 327.8L235.2 327.9L231.9 328.0L228.3 327.8L224.7 327.1L220.8 325.4L216.4 323.0L212.4 320.5L209.7 318.8Z"/><path d="M214.6 322.3L217.4 323.1L221.3 324.4L225.6 325.9L229.5 327.2L233.2 328.3L237.0 329.5L240.3 330.5L242.6 331.3L242.8 330.8L240.5 330.0L237.3 328.7L233.6 327.2L229.9 325.9L225.9 324.8L221.5 323.6L217.5 322.6L214.8 321.8Z"/><path d="M233.6 301.2L239.1 292.6L246.9 280.3L256.8 267.4L268.8 257.2L285.3 249.8L305.7 243.9L325.1 239.4L338.5 236.3L338.4 235.8L325.0 238.9L305.5 243.1L284.9 248.8L268.1 256.0L256.0 266.7L246.2 279.9L238.7 292.4L233.2 300.9Z"/><path d="M410.7 216.0L426.3 218.9L448.7 222.8L473.8 228.4L497.5 236.0L521.4 247.4L546.7 262.0L569.4 276.0L585.1 285.7L585.4 285.3L569.6 275.6L547.1 261.4L521.8 246.6L497.9 234.9L474.0 227.5L448.8 222.1L426.4 218.4L410.8 215.5Z"/><path d="M295.1 252.1L305.7 249.3L320.8 245.4L338.1 241.4L355.2 238.4L373.5 236.5L393.8 235.3L412.3 234.6L425.1 234.1L425.1 233.6L412.3 234.1L393.8 234.6L373.5 235.6L355.0 237.3L337.9 240.5L320.6 244.8L305.6 248.8L295.0 251.6Z"/><path d="M299.5 240.9L310.1 238.3L325.2 234.6L342.5 230.8L359.6 227.9L378.0 225.9L398.3 224.5L416.7 223.5L429.5 222.9L429.5 222.4L416.7 223.0L398.2 223.7L377.9 224.8L359.4 226.5L342.3 229.7L325.0 233.8L310.0 237.8L299.4 240.4Z"/><path d="M223.4 284.4L226.3 280.8L230.3 275.8L236.4 270.2L245.3 264.9L260.0 259.4L279.1 253.6L297.5 248.4L310.2 244.9L310.1 244.4L297.4 247.9L278.9 252.8L259.6 258.4L244.8 263.7L235.7 269.3L229.7 275.2L225.9 280.5L223.0 284.1Z"/><path d="M245.6 257.0L257.4 254.1L274.3 249.9L293.2 245.7L310.7 242.4L327.6 240.2L345.2 238.7L360.7 237.8L371.6 237.1L371.6 236.6L360.7 237.3L345.1 238.1L327.5 239.4L310.5 241.4L293.0 244.9L274.2 249.3L257.2 253.6L245.4 256.5Z"/><path d="M286.6 275.2L293.1 274.0L302.3 272.3L313.2 270.7L324.6 269.5L336.2 268.6L348.5 267.8L361.9 267.7L376.4 268.7L392.4 270.7L409.7 273.8L427.9 277.8L446.4 282.5L467.3 289.0L490.0 296.9L510.6 304.4L524.9 309.7L525.1 309.2L510.8 304.0L490.2 296.3L467.5 288.2L446.6 281.6L428.1 276.7L410.0 272.6L392.7 269.4L376.6 267.2L361.9 266.3L348.5 266.6L336.1 267.5L324.5 268.6L313.1 269.9L302.2 271.8L293.0 273.5L286.5 274.7Z"/><path d="M386.6 274.2L399.0 276.3L416.7 279.3L436.9 283.3L456.6 288.1L476.0 294.3L496.3 301.7L516.4 309.3L534.9 316.1L551.3 321.9L566.3 327.2L580.9 332.0L596.1 336.1L613.7 339.5L632.7 342.3L649.8 344.6L661.7 346.2L661.7 345.7L649.8 344.1L632.8 341.8L613.8 338.8L596.3 335.2L581.2 331.0L566.7 326.1L551.8 320.6L535.4 314.7L516.8 308.1L496.7 300.6L476.3 293.3L456.8 287.3L437.0 282.6L416.8 278.8L399.1 275.8L386.7 273.7Z"/><path d="M391.6 277.3L404.1 280.4L422.2 284.9L442.4 290.1L461.5 295.4L480.6 301.3L500.9 307.9L519.0 314.0L531.5 318.3L531.7 317.9L519.1 313.6L501.1 307.3L480.9 300.5L461.8 294.4L442.6 289.2L422.3 284.2L404.3 279.9L391.7 276.8Z"/><path d="M464.2 303.3L477.0 307.6L495.4 313.9L515.7 320.8L534.1 327.0L551.2 332.3L568.5 337.5L583.6 342.1L594.2 345.3L594.3 344.8L583.8 341.6L568.7 337.0L551.5 331.6L534.4 326.1L515.9 320.1L495.6 313.3L477.1 307.1L464.3 302.8Z"/><path d="M233.5 318.9L235.3 315.2L238.0 309.9L241.5 303.8L245.9 297.5L251.8 290.2L259.3 281.9L266.5 274.2L271.4 269.0L271.1 268.6L266.1 273.8L258.7 281.3L250.9 289.4L244.7 296.6L240.5 303.2L237.2 309.5L234.8 314.9L233.0 318.7Z"/><path d="M231.7 296.4L236.1 291.6L242.4 284.9L249.9 277.7L257.8 271.5L267.3 266.2L278.3 261.4L288.5 257.2L295.6 254.4L295.4 254.0L288.3 256.8L278.0 260.7L266.9 265.4L257.2 270.5L249.3 276.9L241.9 284.4L235.7 291.3L231.3 296.0Z"/><path d="M306.3 210.1L312.0 208.4L320.1 206.2L329.5 203.7L339.1 201.5L350.0 199.3L362.2 197.2L373.5 195.3L381.3 194.1L381.2 193.6L373.4 194.8L362.1 196.4L349.8 198.4L338.8 200.3L329.2 202.7L319.9 205.4L311.9 207.9L306.2 209.6Z"/><path d="M293.2 212.5L298.9 209.5L307.0 205.3L316.4 201.1L326.0 198.1L336.7 196.7L349.0 196.4L360.3 196.5L368.1 196.5L368.1 196.0L360.3 195.9L349.0 195.5L336.7 195.5L325.7 196.7L316.0 200.0L306.6 204.5L298.6 209.0L293.0 212.1Z"/><path d="M307.7 219.4L314.8 216.6L324.9 212.7L336.5 208.8L347.7 206.0L359.6 204.7L372.6 204.3L384.4 204.3L392.6 204.4L392.6 203.9L384.4 203.8L372.6 203.5L359.5 203.6L347.5 204.7L336.1 207.7L324.6 211.9L314.6 216.1L307.5 218.9Z"/><path d="M297.8 227.0L304.8 225.6L315.0 223.7L326.5 221.5L337.8 219.6L349.8 217.4L362.8 215.3L374.5 213.3L382.7 212.0L382.7 211.5L374.5 212.7L362.6 214.3L349.6 216.2L337.6 218.1L326.3 220.3L314.8 222.8L304.7 225.0L297.7 226.5Z"/><path d="M357.2 193.9L362.8 194.2L370.9 194.7L379.7 195.2L387.2 195.5L393.4 195.2L399.1 194.7L403.9 194.2L407.2 193.9L407.2 193.4L403.8 193.7L399.0 193.9L393.3 194.2L387.2 194.3L379.7 194.2L371.0 193.9L362.8 193.7L357.2 193.4Z"/><path d="M362.3 194.7L367.9 194.6L376.0 194.4L384.8 194.3L392.3 194.3L398.4 194.3L404.1 194.4L408.9 194.6L412.3 194.7L412.3 194.2L408.9 194.0L404.2 193.5L398.5 193.1L392.3 192.8L384.8 193.1L376.0 193.5L367.9 194.0L362.3 194.2Z"/><path d="M438.7 198.5L446.4 202.5L457.3 208.4L469.5 214.8L481.2 220.4L493.0 224.9L505.4 229.2L516.5 232.9L524.3 235.5L524.4 235.0L516.7 232.4L505.6 228.7L493.2 224.2L481.5 219.5L469.9 214.1L457.6 207.9L446.6 202.1L439.0 198.0Z"/><path d="M430.6 188.7L438.2 192.7L449.1 198.6L461.3 204.9L472.9 210.4L484.7 215.0L497.2 219.4L508.4 223.1L516.1 225.7L516.3 225.3L508.6 222.5L497.5 218.5L485.1 213.9L473.5 209.1L461.8 203.8L449.5 197.8L438.5 192.2L430.8 188.3Z"/><path d="M480.3 208.0L485.1 210.1L491.9 213.2L499.1 216.9L505.1 220.9L509.9 225.6L514.2 231.1L517.8 236.3L520.2 239.9L520.6 239.6L518.2 236.0L514.7 230.7L510.5 225.1L505.7 220.1L499.5 216.2L492.1 212.7L485.3 209.6L480.5 207.5Z"/><path d="M469.4 204.5L474.1 206.6L480.9 209.8L488.1 213.5L494.0 217.5L498.9 222.2L503.2 227.6L506.8 232.8L509.3 236.4L509.7 236.1L507.3 232.4L504.0 227.1L499.8 221.3L495.0 216.3L488.7 212.4L481.3 208.9L474.4 206.1L469.6 204.0Z"/><path d="M464.7 175.2L481.2 174.4L504.9 173.4L530.3 172.7L552.0 173.1L569.6 175.0L585.7 178.1L599.1 181.2L608.6 183.5L608.7 183.0L599.3 180.7L585.9 177.2L569.8 173.8L552.1 171.7L530.3 171.6L504.8 172.5L481.1 173.9L464.7 174.7Z"/><path d="M453.3 181.5L469.7 180.5L493.5 179.0L518.9 177.9L540.6 178.1L558.2 180.2L574.3 183.7L587.7 187.3L597.2 189.8L597.3 189.3L587.8 186.8L574.5 182.8L558.4 179.0L540.7 176.7L518.9 176.7L493.4 178.1L469.7 179.9L453.3 181.0Z"/><path d="M470.0 190.3L480.9 189.3L496.6 187.9L514.0 186.8L530.0 186.7L545.4 187.9L561.2 190.2L575.2 192.6L585.0 194.3L585.1 193.8L575.3 192.1L561.3 189.6L545.4 187.1L530.0 185.7L513.9 186.0L496.5 187.3L480.9 188.8L470.0 189.8Z"/><path d="M473.9 192.0L484.8 190.4L500.5 188.0L517.9 186.0L533.9 185.5L549.2 187.1L565.1 190.3L579.1 193.7L588.8 196.0L588.9 195.6L579.2 193.2L565.2 189.7L549.3 186.3L533.9 184.5L517.8 185.2L500.4 187.4L484.7 189.9L473.9 191.5Z"/><path d="M504.5 178.9L508.4 179.3L514.0 180.0L520.4 180.7L526.5 181.1L532.7 181.0L539.4 180.6L545.4 180.1L549.5 179.9L549.5 179.4L545.3 179.6L539.4 179.8L532.7 179.9L526.5 179.9L520.5 179.7L514.1 179.2L508.5 178.8L504.5 178.4Z"/><path d="M507.9 173.0L511.9 171.7L517.6 169.8L523.9 168.2L529.9 167.6L536.0 168.4L542.6 170.4L548.6 172.5L552.8 174.0L553.0 173.5L548.8 172.0L542.9 169.6L536.2 167.3L529.9 166.2L523.7 167.0L517.3 169.0L511.7 171.2L507.8 172.5Z"/><path d="M344.5 238.2L359.8 231.2L381.7 221.2L406.4 210.7L430.0 202.2L454.2 196.2L480.0 191.4L503.2 187.8L519.4 185.3L519.3 184.8L503.2 187.3L479.9 190.8L454.0 195.3L429.7 201.2L406.1 209.8L381.4 220.6L359.5 230.8L344.3 237.8Z"/><path d="M353.0 243.4L368.2 235.0L390.2 223.0L414.9 210.6L438.5 201.4L462.6 196.2L488.5 193.2L511.7 191.6L527.9 190.4L527.8 189.9L511.7 191.1L488.4 192.5L462.5 195.2L438.2 200.3L414.5 209.8L389.8 222.3L368.0 234.6L352.7 242.9Z"/><path d="M373.3 260.2L395.2 251.1L426.8 238.2L460.6 224.2L488.8 212.6L510.5 203.2L529.4 195.0L544.7 188.1L555.6 183.4L555.4 183.0L544.5 187.7L529.1 194.2L510.0 202.3L488.3 211.4L460.2 223.3L426.5 237.4L395.0 250.7L373.1 259.8Z"/><path d="M387.9 273.0L409.7 263.0L441.3 248.6L475.1 233.5L503.2 221.3L524.9 212.5L543.9 205.5L559.2 200.0L570.1 196.2L570.0 195.7L559.1 199.6L543.7 204.9L524.6 211.8L502.9 220.4L474.8 232.8L441.1 248.1L409.5 262.6L387.6 272.6Z"/><path d="M351.3 323.3L386.4 310.6L437.4 292.3L490.7 272.7L532.8 256.1L560.4 242.7L580.6 230.7L595.1 220.8L605.7 213.9L605.4 213.4L594.9 220.4L580.2 230.2L560.0 242.0L532.4 255.2L490.4 271.9L437.2 291.7L386.2 310.1L351.1 322.8Z"/><path d="M346.7 323.4L381.8 310.4L432.9 291.7L486.2 271.8L528.3 255.1L555.8 241.9L576.1 230.2L590.6 220.6L601.2 213.9L600.9 213.5L590.3 220.2L575.7 229.5L555.4 241.0L527.8 253.9L485.9 270.9L432.6 291.0L381.7 309.9L346.5 322.9Z"/><path d="M202.4 283.9L211.3 283.7L224.2 283.5L238.7 283.4L252.4 283.4L266.0 283.4L280.5 283.5L293.4 283.7L302.4 283.9L302.4 283.4L293.4 283.2L280.5 282.9L266.0 282.6L252.4 282.4L238.7 282.6L224.2 282.9L211.3 283.2L202.4 283.4Z"/><path d="M207.2 279.4L216.1 278.0L229.0 276.1L243.5 274.3L257.1 273.6L270.7 274.3L285.2 276.1L298.1 278.0L307.1 279.4L307.2 279.0L298.2 277.5L285.3 275.3L270.8 273.3L257.1 272.4L243.4 273.3L228.9 275.3L216.1 277.5L207.1 279.0Z"/><path d="M262.7 282.8L270.9 284.0L282.7 285.9L295.2 288.0L305.6 290.2L313.3 292.5L320.0 295.2L325.3 297.7L329.1 299.5L329.3 299.0L325.6 297.2L320.3 294.5L313.7 291.6L305.9 289.0L295.4 287.0L282.8 285.1L270.9 283.5L262.8 282.3Z"/><path d="M258.2 285.5L266.4 286.8L278.2 288.7L290.7 290.8L301.1 293.1L308.8 295.4L315.5 298.0L320.9 300.4L324.6 302.2L324.9 301.7L321.1 299.9L315.9 297.2L309.3 294.2L301.4 291.6L291.0 289.6L278.3 287.7L266.5 286.2L258.3 285.0Z"/><path d="M331.9 278.2L333.0 279.6L334.5 281.6L336.2 283.8L337.6 286.0L339.1 287.9L340.7 290.0L342.0 291.9L342.9 293.2L343.3 292.9L342.4 291.6L341.2 289.6L339.9 287.4L338.5 285.3L336.9 283.3L335.0 281.2L333.4 279.3L332.3 277.9Z"/><path d="M329.8 284.8L330.9 286.2L332.3 288.2L333.9 290.5L335.4 292.6L336.9 294.5L338.5 296.6L339.9 298.5L340.8 299.8L341.2 299.5L340.3 298.2L339.2 296.1L337.9 293.8L336.6 291.7L334.9 289.7L333.0 287.6L331.3 285.8L330.2 284.5Z"/><path d="M321.7 269.5L326.1 270.7L332.3 272.6L339.4 274.7L346.6 276.8L354.4 278.8L363.2 281.0L371.2 283.1L376.7 284.5L376.8 284.1L371.3 282.5L363.4 280.1L354.8 277.6L347.0 275.3L339.7 273.5L332.5 271.7L326.2 270.2L321.8 269.1Z"/><path d="M331.0 282.9L335.4 283.2L341.6 283.6L348.8 284.4L355.9 285.9L363.7 288.5L372.5 292.0L380.4 295.5L385.9 297.9L386.1 297.4L380.6 295.0L372.7 291.4L364.0 287.7L356.1 284.9L348.9 283.6L341.7 283.0L335.4 282.7L331.0 282.4Z"/><path d="M420.8 338.7L427.0 340.6L435.9 343.4L445.7 346.6L454.6 349.8L463.1 353.0L471.8 356.6L479.4 359.9L484.7 362.3L484.9 361.8L479.6 359.5L472.1 356.0L463.5 352.2L455.0 348.7L446.0 345.7L436.1 342.7L427.1 340.1L420.9 338.2Z"/><path d="M385.2 321.1L387.3 320.9L390.4 320.6L394.0 320.6L398.0 321.5L402.3 323.4L407.0 326.1L412.6 329.0L419.0 331.9L427.4 334.9L437.4 338.2L446.7 341.2L453.1 343.3L453.2 342.8L446.8 340.7L437.6 337.6L427.7 334.2L419.3 331.0L413.1 328.0L407.7 325.0L402.8 322.4L398.3 320.6L394.1 319.9L390.3 320.0L387.3 320.4L385.1 320.6Z"/><path d="M380.2 327.3L381.1 328.3L382.4 329.9L384.0 331.8L385.8 333.8L388.4 335.9L391.4 338.4L394.3 340.7L396.2 342.3L396.5 341.9L394.7 340.2L392.1 337.7L389.3 335.0L386.9 332.7L384.9 330.9L383.1 329.3L381.6 327.9L380.6 326.9Z"/><path d="M376.7 319.0L377.7 321.7L379.0 325.6L380.6 329.6L382.6 332.7L385.3 334.0L388.3 334.2L391.1 334.1L392.9 334.2L392.9 333.7L391.1 333.6L388.3 333.6L385.5 333.1L383.3 331.9L381.4 329.2L379.6 325.4L378.2 321.5L377.2 318.8Z"/><path d="M393.4 325.7L400.4 329.1L410.5 334.3L421.9 339.8L433.2 344.4L445.3 347.7L458.4 350.6L470.2 353.0L478.4 354.7L478.5 354.2L470.3 352.4L458.6 349.7L445.6 346.5L433.7 343.0L422.4 338.6L410.9 333.5L400.7 328.6L393.6 325.2Z"/><path d="M398.7 333.9L405.8 337.7L415.9 343.2L427.4 349.0L438.7 353.8L450.7 357.0L463.8 359.5L475.6 361.5L483.8 362.9L483.9 362.4L475.7 361.0L463.9 358.8L450.9 356.1L439.0 352.7L427.8 348.2L416.2 342.6L406.0 337.2L399.0 333.5Z"/><path d="M407.7 354.0L413.8 355.5L422.6 357.9L432.7 360.5L442.6 362.9L453.2 364.9L464.8 366.9L475.4 368.7L482.7 370.0L482.8 369.5L475.5 368.1L465.0 366.0L453.4 363.6L442.9 361.3L433.0 359.2L422.9 357.0L414.0 354.9L407.8 353.5Z"/><path d="M407.2 358.9L413.4 360.4L422.2 362.7L432.2 365.3L442.1 367.6L452.7 369.7L464.4 371.7L474.9 373.6L482.2 374.9L482.3 374.4L475.0 373.1L464.5 371.1L452.9 368.8L442.4 366.6L432.4 364.4L422.3 362.1L413.5 360.0L407.3 358.4Z"/><path d="M403.4 314.9L409.9 310.5L419.3 304.3L429.5 298.0L438.6 293.4L446.6 290.9L454.5 289.7L461.4 289.2L466.3 288.9L466.3 288.4L461.4 288.7L454.4 288.9L446.3 289.8L438.0 292.1L428.9 297.0L418.8 303.6L409.6 310.1L403.2 314.5Z"/><path d="M402.0 311.0L408.4 307.9L417.7 303.5L427.9 298.8L437.0 294.9L445.1 291.7L453.1 288.9L460.1 286.6L464.9 285.0L464.8 284.5L459.9 286.1L452.9 288.3L444.9 291.0L436.7 294.0L427.6 298.1L417.5 302.9L408.2 307.5L401.7 310.5Z"/><path d="M454.9 318.8L458.5 317.6L463.7 316.0L469.5 314.4L474.9 313.7L480.3 313.9L486.0 314.8L491.2 316.0L494.8 316.8L494.9 316.3L491.3 315.5L486.2 314.1L480.4 312.9L474.8 312.5L469.3 313.5L463.5 315.2L458.4 317.1L454.8 318.3Z"/><path d="M466.9 325.6L470.5 324.3L475.6 322.4L481.4 320.8L486.8 319.9L492.2 320.2L498.0 321.3L503.1 322.7L506.7 323.6L506.9 323.1L503.3 322.2L498.1 320.8L492.3 319.5L486.8 319.0L481.2 320.0L475.5 321.9L470.3 323.8L466.7 325.1Z"/><path d="M754.2 299.6L762.3 309.6L773.9 323.9L786.4 339.8L797.1 354.5L806.2 368.4L814.6 382.7L821.6 395.3L826.5 404.1L827.0 403.8L822.2 395.0L815.4 382.2L807.3 367.7L798.4 353.6L787.4 339.1L774.6 323.3L762.7 309.2L754.6 299.3Z"/><path d="M756.4 291.9L764.5 301.4L776.2 315.0L788.8 330.2L799.5 344.5L808.0 357.7L815.4 370.9L822.3 383.9L828.5 396.5L834.3 409.6L839.5 423.1L843.8 435.0L846.8 443.3L847.2 443.1L844.2 434.8L840.1 422.9L835.1 409.3L829.5 396.0L823.4 383.3L816.7 370.2L809.1 357.0L800.4 343.9L789.5 329.6L776.7 314.5L764.9 301.0L756.8 291.6Z"/><path d="M563.4 198.7L573.3 192.5L587.5 183.6L603.2 174.3L617.5 166.9L630.2 162.0L642.8 158.3L654.4 155.2L664.4 152.5L672.7 149.8L679.6 147.6L685.0 146.0L688.9 144.8L688.7 144.3L684.9 145.5L679.4 147.2L672.5 149.2L664.2 151.7L654.2 154.4L642.5 157.3L629.9 161.1L617.1 166.2L602.9 173.8L587.2 183.2L573.0 192.1L563.2 198.3Z"/><path d="M608.5 174.5L617.5 171.4L630.5 166.9L644.3 162.3L655.6 158.7L663.8 156.3L670.7 154.6L676.1 153.3L679.9 152.5L679.8 152.0L676.0 152.8L670.5 153.7L663.5 155.1L655.2 157.3L643.9 161.2L630.2 166.1L617.3 170.8L608.3 174.0Z"/><path d="M580.7 188.9L588.9 185.3L600.7 180.2L613.7 174.7L625.7 170.1L637.0 166.5L648.4 163.3L658.5 160.7L665.6 158.9L665.5 158.5L658.4 160.2L648.3 162.7L636.7 165.8L625.4 169.3L613.5 174.0L600.4 179.6L588.7 184.9L580.5 188.5Z"/><path d="M575.9 199.0L584.1 195.0L596.0 189.2L609.0 183.1L621.0 178.3L632.2 174.9L643.7 172.3L653.8 170.4L660.9 169.0L660.8 168.5L653.7 169.9L643.6 171.7L632.0 174.1L620.6 177.3L608.7 182.3L595.7 188.6L583.9 194.5L575.7 198.6Z"/><path d="M692.1 209.1L709.0 222.7L733.3 242.1L759.5 264.7L781.9 287.6L800.4 313.3L817.6 342.2L832.0 368.6L842.1 387.1L842.5 386.8L832.4 368.4L818.2 341.8L801.2 312.8L782.7 286.9L760.1 264.0L733.7 241.6L709.3 222.3L692.4 208.7Z"/><path d="M602.8 194.8L621.0 198.4L647.2 203.3L676.0 210.5L702.5 221.1L727.8 237.8L753.8 259.4L776.7 280.3L792.7 294.8L793.0 294.4L777.1 279.9L754.5 258.7L728.6 236.7L703.2 219.7L676.4 209.3L647.4 202.4L621.1 197.8L602.9 194.3Z"/><path d="M679.0 236.9L692.1 249.5L710.8 267.7L731.1 288.3L748.7 308.3L763.9 329.2L778.3 352.0L790.5 372.5L799.0 386.9L799.4 386.6L790.9 372.3L778.9 351.6L764.7 328.6L749.7 307.5L731.9 287.6L711.4 267.1L692.4 249.2L679.4 236.6Z"/><path d="M610.1 216.5L624.7 219.4L645.7 223.3L668.8 229.6L689.8 239.3L709.6 255.5L729.9 276.7L747.6 297.2L759.9 311.4L760.3 311.1L748.0 296.9L730.4 276.2L710.3 254.8L690.4 238.4L669.1 228.7L645.8 222.7L624.8 218.9L610.2 216.0Z"/><path d="M509.3 256.8L516.2 250.3L526.2 241.0L537.8 230.9L549.4 222.3L562.3 215.1L576.7 208.4L590.0 202.8L599.2 198.9L599.0 198.4L589.8 202.3L576.5 207.8L561.9 214.3L548.8 221.4L537.2 230.2L525.8 240.5L515.9 250.0L508.9 256.5Z"/><path d="M519.6 258.1L526.6 251.9L536.6 243.2L548.2 233.6L559.9 225.2L572.7 217.8L587.2 210.6L600.4 204.4L609.6 200.1L609.4 199.7L600.1 203.9L586.8 209.8L572.1 216.7L559.0 224.0L547.4 232.6L536.0 242.4L526.2 251.5L519.3 257.7Z"/><path d="M546.6 273.8L553.7 268.3L563.9 260.4L575.4 252.0L586.7 244.8L598.6 238.9L611.6 233.5L623.4 229.0L631.6 225.8L631.4 225.4L623.2 228.5L611.4 232.8L598.2 238.1L586.2 243.9L574.9 251.3L563.5 259.9L553.4 267.9L546.3 273.4Z"/><path d="M547.2 273.3L554.2 267.0L564.5 257.9L576.1 248.4L587.3 240.8L599.2 235.4L612.1 231.0L623.9 227.6L632.1 225.3L631.9 224.8L623.7 227.1L611.9 230.2L598.7 234.3L586.7 239.6L575.4 247.5L563.9 257.3L553.9 266.6L546.8 272.9Z"/><path d="M561.0 230.7L563.8 232.3L567.8 235.0L572.4 237.4L577.1 238.4L582.1 236.8L587.3 233.9L591.9 230.7L595.2 228.6L594.9 228.2L591.7 230.3L586.9 233.2L581.7 235.9L577.0 237.1L572.7 236.4L568.1 234.3L564.0 231.9L561.2 230.2Z"/><path d="M561.4 237.0L564.2 238.3L568.3 240.2L572.9 242.0L577.5 242.7L582.4 241.5L587.6 239.1L592.3 236.6L595.6 235.0L595.4 234.5L592.1 236.2L587.4 238.6L582.2 240.7L577.5 241.8L573.1 241.3L568.5 239.7L564.4 237.8L561.6 236.5Z"/><path d="M630.5 212.7L633.9 213.0L638.6 213.5L644.3 214.5L650.4 216.7L657.9 220.8L666.6 226.3L674.8 231.8L680.4 235.6L680.7 235.2L675.1 231.4L667.0 225.9L658.3 220.1L650.8 215.9L644.5 213.8L638.7 212.9L633.9 212.5L630.6 212.2Z"/><path d="M632.8 210.4L636.2 211.0L640.9 212.0L646.5 213.6L652.6 215.9L660.1 219.8L668.9 224.9L677.1 229.9L682.7 233.4L683.0 232.9L677.4 229.4L669.3 224.3L660.6 218.9L653.1 214.8L646.8 212.6L641.1 211.3L636.3 210.5L632.9 209.9Z"/><path d="M446.1 271.0L456.9 274.9L472.6 280.6L489.9 286.8L506.0 292.1L520.6 295.9L535.0 299.1L549.0 302.3L562.0 305.9L573.8 310.4L584.7 315.5L595.3 320.3L606.0 324.1L617.9 326.4L630.4 327.7L641.4 328.5L649.1 329.1L649.2 328.6L641.5 328.0L630.4 327.2L618.0 325.7L606.3 323.3L595.7 319.5L585.2 314.5L574.2 309.3L562.3 304.6L549.2 301.1L535.3 298.1L520.8 295.1L506.3 291.3L490.1 286.2L472.7 280.1L457.1 274.5L446.2 270.5Z"/><path d="M563.1 316.8L571.1 319.6L582.4 323.8L595.1 328.3L607.0 332.0L618.9 334.7L631.4 337.1L642.5 339.0L650.2 340.4L650.3 339.9L642.6 338.4L631.5 336.2L619.2 333.6L607.4 330.7L595.4 327.2L582.7 323.0L571.2 319.1L563.3 316.3Z"/><path d="M508.2 302.1L519.0 304.8L534.5 308.7L551.8 313.2L568.2 317.4L584.6 321.4L602.0 325.6L617.4 329.4L628.2 332.1L628.3 331.6L617.6 328.9L602.1 325.0L584.8 320.6L568.4 316.5L552.0 312.4L534.6 308.2L519.1 304.3L508.3 301.6Z"/><path d="M432.6 296.8L443.4 299.1L458.8 302.5L476.1 306.4L492.5 310.5L508.9 315.1L526.3 320.5L541.8 325.3L552.6 328.8L552.7 328.4L542.0 324.9L526.5 319.7L509.2 314.1L492.8 309.3L476.4 305.4L459.0 301.7L443.5 298.6L432.7 296.4Z"/><path d="M443.1 259.3L453.8 263.4L469.3 269.5L486.6 276.3L502.9 282.8L519.4 289.4L536.8 296.4L552.3 302.8L563.1 307.3L563.2 306.8L552.5 302.3L537.0 295.7L519.7 288.4L503.4 281.7L486.9 275.3L469.5 268.7L454.0 262.9L443.2 258.8Z"/><path d="M431.8 260.1L442.6 264.9L458.1 271.7L475.4 279.2L491.8 286.1L507.2 292.0L523.0 297.5L538.1 302.8L551.7 308.3L564.1 314.6L575.5 321.4L585.1 327.6L591.8 331.9L592.1 331.5L585.3 327.2L575.8 320.9L564.5 314.0L552.1 307.5L538.5 301.8L523.4 296.3L507.6 290.9L492.1 285.3L475.7 278.5L458.3 271.1L442.8 264.4L432.0 259.7Z"/><path d="M455.1 254.0L464.9 258.8L478.8 265.7L494.6 273.9L509.9 282.5L526.0 292.5L543.5 304.0L559.2 314.6L570.1 322.0L570.3 321.6L559.4 314.2L543.8 303.4L526.5 291.8L510.5 281.6L495.0 273.2L479.1 265.2L465.1 258.4L455.3 253.6Z"/><path d="M447.2 255.2L457.0 261.2L470.9 269.9L486.7 279.7L502.0 289.1L518.1 298.3L535.6 308.2L551.3 317.0L562.2 323.2L562.5 322.7L551.6 316.5L536.0 307.4L518.7 297.3L502.7 287.8L487.3 278.7L471.3 269.1L457.3 260.7L447.5 254.7Z"/><path d="M437.4 317.0L444.6 315.2L454.9 312.7L466.5 309.8L477.5 306.8L488.4 303.2L499.9 299.2L510.2 295.5L517.4 293.0L517.3 292.5L510.1 295.0L499.7 298.6L488.2 302.5L477.2 305.9L466.3 309.0L454.8 312.1L444.5 314.7L437.3 316.5Z"/><path d="M473.6 295.5L480.8 292.8L491.2 289.0L502.8 284.6L513.8 279.9L524.7 274.2L536.2 267.6L546.5 261.6L553.6 257.5L553.4 257.0L546.2 261.1L535.8 266.9L524.2 273.2L513.2 278.7L502.4 283.6L490.9 288.3L480.6 292.3L473.4 295.0Z"/><path d="M503.0 301.1L509.4 294.6L518.7 285.2L529.0 274.8L538.3 265.1L546.7 255.7L555.3 245.8L562.7 237.1L568.0 231.1L567.6 230.8L562.3 236.8L554.7 245.3L546.0 255.0L537.3 264.3L528.2 274.1L518.2 284.7L509.0 294.2L502.6 300.8Z"/><path d="M504.9 305.0L511.3 298.2L520.7 288.6L530.9 277.9L540.2 268.1L548.7 258.7L557.2 249.2L564.7 240.8L569.9 235.0L569.6 234.7L564.3 240.5L556.7 248.7L547.9 258.1L539.3 267.3L530.2 277.2L520.1 288.1L511.0 297.9L504.6 304.7Z"/><path d="M526.2 306.0L531.4 300.3L538.9 292.4L547.6 283.3L556.6 274.2L566.7 264.2L578.2 253.1L588.8 242.9L596.2 236.0L595.9 235.6L588.4 242.5L577.6 252.4L565.9 263.3L555.5 273.1L546.7 282.4L538.2 291.8L531.0 300.0L525.9 305.6Z"/><path d="M504.9 332.2L510.3 327.4L518.1 320.7L526.9 312.7L535.2 304.5L543.3 294.9L551.9 284.0L559.5 274.0L564.9 267.2L564.5 266.9L559.1 273.7L551.2 283.5L542.5 294.2L534.2 303.6L526.1 311.9L517.5 320.0L509.9 327.0L504.5 331.8Z"/><path d="M559.0 306.6L561.6 309.2L565.4 312.9L569.6 317.0L573.7 320.4L577.9 323.0L582.3 325.4L586.3 327.3L589.0 328.7L589.2 328.2L586.6 326.7L582.8 324.5L578.6 321.9L574.6 319.1L570.5 316.0L566.0 312.2L562.0 308.7L559.3 306.3Z"/><path d="M558.8 302.0L561.5 304.6L565.3 308.5L569.5 312.6L573.6 316.1L577.8 318.7L582.2 320.9L586.1 322.7L588.8 324.0L589.0 323.6L586.3 322.3L582.5 320.3L578.3 317.9L574.3 315.2L570.1 312.0L565.7 308.0L561.8 304.3L559.1 301.6Z"/><path d="M590.6 293.2L592.3 295.3L594.7 298.4L597.6 301.4L600.7 303.2L604.2 302.3L607.7 300.2L610.8 297.8L613.0 296.3L612.7 295.9L610.4 297.3L607.2 299.4L603.7 301.1L600.9 301.6L598.3 300.4L595.4 297.8L592.8 294.9L591.0 292.9Z"/><path d="M595.0 300.0L596.8 301.5L599.2 303.7L602.0 305.8L605.1 307.1L608.5 306.7L612.0 305.4L615.1 304.0L617.3 303.1L617.1 302.6L614.9 303.5L611.7 304.6L608.2 305.5L605.3 305.6L602.6 304.8L599.7 303.0L597.1 301.0L595.4 299.7Z"/><path d="M449.2 342.4L454.8 345.8L462.7 350.8L471.6 356.2L480.0 360.5L487.4 363.2L494.6 365.0L502.1 366.8L510.8 369.5L522.2 374.1L535.3 379.8L547.5 385.3L556.0 389.1L556.2 388.7L547.7 384.9L535.5 379.4L522.4 373.5L511.1 368.8L502.4 366.0L494.8 364.1L487.7 362.4L480.3 359.9L471.9 355.6L463.0 350.4L455.0 345.4L449.5 342.0Z"/><path d="M444.0 348.7L449.5 351.2L457.4 354.9L466.3 359.1L474.7 362.9L482.0 366.3L489.1 369.5L496.8 372.6L505.5 376.0L516.9 380.0L530.1 384.4L542.3 388.5L550.7 391.3L550.9 390.9L542.5 388.0L530.3 383.8L517.2 379.1L505.9 374.9L497.3 371.4L489.7 368.1L482.6 365.1L475.1 361.9L466.7 358.2L457.7 354.3L449.8 350.7L444.2 348.2Z"/><path d="M440.8 361.2L448.3 364.5L459.0 369.3L470.8 374.5L481.7 379.0L492.2 382.4L502.9 385.5L512.3 388.1L518.9 390.0L519.0 389.5L512.5 387.6L503.1 384.8L492.5 381.5L482.1 377.9L471.2 373.6L459.3 368.7L448.5 364.0L441.0 360.7Z"/><path d="M443.8 361.0L451.2 363.1L461.9 366.2L473.8 369.8L484.6 373.6L495.0 377.7L505.7 382.4L515.2 386.7L521.8 389.7L522.0 389.3L515.4 386.2L506.1 381.6L495.5 376.7L485.1 372.3L474.1 368.8L462.2 365.4L451.4 362.6L443.9 360.5Z"/><path d="M437.2 409.2L440.6 407.3L445.5 404.6L451.4 400.8L457.8 395.4L465.1 387.3L473.4 377.1L481.5 366.6L488.3 358.0L493.8 351.6L498.5 346.4L502.3 342.5L504.9 339.6L504.6 339.3L501.9 342.1L498.1 346.1L493.4 351.2L487.8 357.5L480.8 366.1L472.6 376.4L464.5 386.7L457.3 394.9L451.1 400.3L445.3 404.2L440.4 406.8L436.9 408.8Z"/><path d="M438.8 406.5L442.2 405.2L447.2 403.6L453.2 400.7L459.6 395.6L467.0 387.1L475.3 375.9L483.4 364.5L490.2 355.5L495.6 349.4L500.2 345.1L503.9 341.9L506.6 339.7L506.3 339.3L503.6 341.6L499.7 344.5L494.9 348.8L489.3 354.7L482.3 363.7L474.1 375.0L465.9 386.3L458.8 394.8L452.6 399.9L446.9 402.9L442.1 404.7L438.6 406.1Z"/><path d="M430.7 399.3L433.4 401.4L437.1 404.5L441.6 407.6L446.8 409.2L453.3 408.7L461.0 406.8L468.0 404.8L472.9 403.4L472.8 402.9L467.9 404.3L460.8 406.3L453.2 407.9L446.9 408.3L442.0 406.8L437.4 404.1L433.7 401.0L431.0 399.0Z"/><path d="M430.0 391.6L432.6 393.1L436.4 395.2L440.9 397.4L446.1 398.7L452.6 398.5L460.2 397.5L467.2 396.4L472.2 395.7L472.1 395.2L467.2 395.9L460.1 396.9L452.5 397.6L446.2 397.6L441.2 396.6L436.6 394.7L432.9 392.6L430.2 391.2Z"/><path d="M584.5 292.0L588.2 294.9L593.6 299.0L599.6 303.5L605.5 307.1L610.9 309.3L616.4 310.7L621.9 312.0L627.5 314.2L633.7 318.0L640.4 322.9L646.3 327.7L650.5 331.0L650.8 330.6L646.6 327.3L640.7 322.5L634.1 317.5L627.8 313.4L622.2 311.1L616.6 309.6L611.2 308.4L605.8 306.4L600.0 303.0L593.9 298.6L588.5 294.5L584.8 291.6Z"/><path d="M612.4 315.8L616.4 317.5L621.9 320.0L628.2 323.0L634.2 326.1L640.5 329.6L647.2 333.5L653.2 337.1L657.4 339.7L657.7 339.3L653.5 336.7L647.6 332.8L641.1 328.6L634.9 324.9L628.7 322.0L622.3 319.3L616.6 317.0L612.6 315.3Z"/><path d="M607.0 291.5L611.0 293.2L616.8 295.9L623.1 298.9L628.7 302.2L633.9 306.0L639.2 310.4L643.8 314.5L646.9 317.4L647.3 317.1L644.2 314.1L639.8 309.7L634.7 305.0L629.5 300.9L623.6 297.8L617.2 295.0L611.3 292.7L607.2 291.0Z"/><path d="M598.1 290.0L602.1 291.5L607.9 293.6L614.2 296.3L619.9 299.4L625.1 303.3L630.3 308.2L634.8 312.8L638.0 316.0L638.3 315.6L635.2 312.4L630.7 307.7L625.6 302.7L620.4 298.6L614.6 295.6L608.1 293.0L602.3 291.0L598.2 289.6Z"/><path d="M453.9 403.1L457.9 399.2L463.6 393.7L470.0 387.2L476.1 380.3L482.1 372.1L488.4 362.7L494.0 354.0L498.0 348.0L497.6 347.8L493.6 353.7L487.9 362.4L481.5 371.7L475.4 379.7L469.5 386.7L463.2 393.3L457.5 398.8L453.6 402.7Z"/><path d="M450.5 409.5L454.5 405.9L460.2 400.9L466.7 394.8L472.8 388.1L478.7 379.7L485.0 369.9L490.6 360.7L494.6 354.4L494.2 354.2L490.2 360.5L484.5 369.5L478.0 379.2L471.9 387.4L466.0 394.2L459.8 400.4L454.1 405.5L450.2 409.1Z"/><path d="M269.1 235.0L273.7 236.0L280.3 237.5L287.7 238.7L294.4 238.7L300.5 236.5L306.5 233.0L311.7 229.5L315.3 227.2L315.0 226.7L311.3 229.0L306.0 232.2L300.0 235.4L294.1 237.2L287.7 237.5L280.5 236.6L273.8 235.4L269.2 234.5ZM579.3 358.4L582.4 355.9L586.9 352.2L592.0 348.6L597.0 346.4L602.5 345.8L608.9 346.3L614.8 347.2L618.8 347.9L618.9 347.4L614.9 346.7L609.0 345.4L602.5 344.5L596.6 344.8L591.3 347.5L586.3 351.4L582.0 355.4L578.9 358.1ZM587.3 270.4L589.4 269.2L592.5 267.7L595.9 265.7L599.1 263.5L601.9 260.5L604.7 257.0L607.1 253.7L608.9 251.5L608.5 251.2L606.7 253.3L604.0 256.4L601.0 259.7L598.1 262.4L595.2 264.7L592.0 266.9L589.1 268.7L587.1 270.0ZM516.1 321.6L518.6 321.1L522.0 320.4L525.9 319.6L529.6 318.6L533.0 317.0L536.5 315.0L539.7 313.2L541.9 312.0L541.6 311.6L539.4 312.8L536.3 314.6L532.7 316.4L529.3 317.8L525.8 319.0L521.9 319.9L518.5 320.6L516.0 321.1ZM381.3 282.7L385.4 285.8L391.2 290.5L397.6 295.3L403.4 298.9L408.9 300.6L414.3 301.4L419.0 301.7L422.2 302.0L422.3 301.5L419.0 301.2L414.4 300.6L409.2 299.6L404.0 297.7L398.2 294.4L391.7 289.8L385.7 285.4L381.7 282.3ZM342.3 239.4L345.9 240.6L351.1 242.2L357.0 244.3L362.7 246.7L368.7 249.8L375.2 253.7L381.1 257.3L385.2 259.9L385.4 259.4L381.4 256.9L375.5 253.2L369.1 249.2L363.1 246.0L357.3 243.6L351.3 241.7L346.1 240.1L342.4 238.9ZM500.3 339.6L503.0 339.5L506.8 339.4L511.1 339.1L515.1 338.4L518.8 336.6L522.5 334.4L525.6 332.2L527.9 330.7L527.6 330.3L525.3 331.6L521.9 333.5L518.2 335.4L514.6 336.7L510.9 337.7L506.7 338.4L503.0 338.8L500.3 339.1ZM409.4 283.6L412.1 284.9L415.9 286.8L420.1 288.6L424.1 289.6L427.7 289.0L431.1 287.6L433.9 286.1L435.9 285.1L435.7 284.6L433.7 285.5L430.7 286.8L427.4 287.8L424.2 288.1L420.5 287.4L416.3 285.9L412.4 284.3L409.7 283.2ZM503.7 234.4L506.5 236.8L510.6 240.3L515.1 243.9L519.1 246.6L522.8 247.8L526.5 248.1L529.6 248.1L531.7 248.2L531.7 247.7L529.6 247.6L526.5 247.5L523.0 247.0L519.5 245.7L515.5 243.3L511.0 239.8L506.9 236.4L504.0 234.0ZM330.7 365.9L335.3 363.4L341.9 360.0L349.4 356.1L356.4 352.5L363.4 348.7L370.8 344.7L377.3 341.2L382.0 338.7L381.7 338.3L377.1 340.7L370.5 344.2L363.0 348.0L356.0 351.6L349.0 355.4L341.7 359.4L335.1 363.0L330.5 365.4ZM328.4 282.7L333.3 281.6L340.2 280.1L348.0 278.7L355.6 278.3L363.6 279.2L372.5 281.1L380.6 283.1L386.1 284.6L386.3 284.1L380.7 282.6L372.7 280.4L363.8 278.3L355.6 277.2L347.9 277.8L340.0 279.4L333.1 281.1L328.3 282.3ZM238.3 269.2L243.2 271.9L250.1 275.8L257.9 279.9L265.1 283.2L272.1 285.2L279.3 286.7L285.6 287.8L290.0 288.6L290.1 288.1L285.8 287.1L279.5 285.6L272.5 283.8L265.7 281.5L258.5 278.6L250.6 274.8L243.5 271.3L238.6 268.8ZM738.1 283.2L742.5 281.0L748.9 277.9L755.9 274.2L762.4 270.1L768.5 264.8L774.8 258.6L780.3 252.9L784.2 248.9L783.8 248.6L779.9 252.5L774.4 258.3L768.1 264.3L761.9 269.5L755.6 273.7L748.6 277.5L742.3 280.6L737.9 282.7ZM594.1 281.8L596.4 279.5L599.7 276.2L603.5 273.0L607.3 270.8L611.4 269.9L616.2 269.7L620.5 270.0L623.6 270.1L623.6 269.6L620.6 269.5L616.2 269.2L611.4 269.2L607.0 270.1L603.1 272.5L599.3 275.9L596.0 279.2L593.7 281.4ZM378.8 265.5L381.2 268.1L384.6 271.9L388.3 275.7L391.5 278.2L394.3 278.5L396.8 277.5L398.7 276.2L400.1 275.4L399.9 275.0L398.5 275.8L396.5 277.0L394.3 277.7L391.9 277.3L388.8 275.1L385.1 271.5L381.6 267.8L379.2 265.2ZM415.8 360.1L418.5 359.2L422.3 358.1L426.6 357.4L431.0 357.7L435.9 359.7L441.7 363.1L447.0 366.6L450.7 369.0L450.9 368.6L447.3 366.2L442.1 362.5L436.4 358.8L431.3 356.5L426.6 356.3L422.1 357.4L418.3 358.8L415.7 359.6ZM330.9 269.7L332.5 270.1L334.6 270.6L337.0 271.3L339.3 272.2L341.8 273.1L344.6 274.4L347.2 275.5L348.9 276.4L349.2 276.0L347.5 275.0L345.1 273.5L342.4 271.9L339.9 270.7L337.3 270.1L334.8 269.7L332.6 269.5L331.0 269.2ZM660.2 216.1L661.9 216.3L664.3 216.6L667.0 216.5L669.4 215.2L671.0 212.0L672.3 207.6L673.3 203.4L674.0 200.4L673.6 200.3L672.8 203.2L671.6 207.5L670.2 211.7L668.6 214.5L666.8 215.7L664.3 215.9L661.9 215.8L660.2 215.6ZM642.5 386.0L645.4 386.6L649.6 387.7L654.2 388.3L658.4 387.7L661.9 384.8L665.1 380.7L667.7 376.5L669.6 373.8L669.2 373.5L667.2 376.2L664.4 380.2L661.1 384.0L657.9 386.4L654.2 387.1L649.7 386.8L645.5 386.1L642.6 385.5ZM366.4 350.0L368.3 347.0L371.0 342.8L374.2 338.7L377.4 336.1L381.0 335.3L385.5 335.7L389.7 336.5L392.7 337.0L392.8 336.6L389.9 335.9L385.6 334.7L381.0 334.0L376.7 334.7L373.3 337.8L370.2 342.3L367.8 346.7L366.0 349.7ZM743.8 323.2L745.0 322.9L746.8 322.6L748.9 322.6L750.8 323.1L753.3 324.6L756.3 326.9L759.0 329.2L760.9 330.9L761.2 330.5L759.4 328.8L756.8 326.3L754.0 323.7L751.4 322.0L748.9 321.5L746.7 321.8L744.9 322.4L743.6 322.7ZM762.1 396.0L764.4 394.9L767.8 393.3L771.6 391.7L775.3 390.3L778.9 388.9L782.8 387.7L786.3 386.7L788.8 386.0L788.7 385.5L786.2 386.2L782.6 386.9L778.6 387.9L774.8 389.1L771.2 390.7L767.5 392.6L764.2 394.4L761.9 395.6ZM735.0 231.4L739.6 233.6L746.2 236.9L753.6 240.2L760.4 242.5L766.9 243.2L773.3 243.0L779.0 242.5L782.9 242.3L782.9 241.8L779.0 241.9L773.3 242.1L766.9 241.9L760.7 241.0L754.1 239.0L746.6 236.0L739.9 233.0L735.2 230.9ZM561.2 273.1L564.2 272.8L568.5 272.5L573.3 271.8L577.7 270.5L581.6 267.8L585.5 264.2L588.9 260.8L591.2 258.5L590.9 258.1L588.5 260.5L585.1 263.8L581.2 267.2L577.3 269.7L573.1 271.1L568.5 271.9L564.2 272.3L561.2 272.6ZM333.9 356.1L335.0 353.5L336.6 349.6L338.6 345.9L340.6 343.7L342.9 343.2L346.1 343.7L349.1 344.7L351.2 345.4L351.4 344.9L349.3 344.2L346.3 342.9L343.0 342.1L339.9 342.5L337.6 345.3L335.9 349.3L334.5 353.3L333.4 355.9ZM724.5 403.1L725.7 400.7L727.6 397.2L729.8 393.8L732.0 391.7L734.5 391.0L737.6 391.3L740.7 391.9L742.8 392.4L742.9 391.9L740.8 391.4L737.8 390.5L734.4 389.9L731.3 390.5L728.9 393.1L726.9 396.8L725.3 400.4L724.1 402.9ZM619.7 299.2L622.6 298.0L626.7 296.3L631.3 294.2L635.5 291.9L639.5 288.9L643.6 285.4L647.1 282.2L649.7 280.0L649.3 279.6L646.8 281.7L643.0 284.7L638.8 288.0L634.7 290.7L630.7 293.2L626.3 295.5L622.3 297.5L619.5 298.8ZM644.7 369.3L647.1 370.6L650.6 372.6L654.5 374.5L658.0 375.4L661.1 374.6L663.9 372.9L666.3 371.1L668.0 370.0L667.7 369.5L666.0 370.7L663.6 372.4L660.8 373.8L658.0 374.3L654.8 373.6L650.9 372.0L647.4 370.1L644.9 368.8ZM540.1 273.1L542.2 272.5L545.2 271.6L548.5 271.0L551.8 271.1L555.5 272.0L559.7 273.6L563.5 275.3L566.1 276.6L566.3 276.1L563.7 274.9L559.9 273.0L555.8 271.2L552.0 270.0L548.5 270.2L545.0 271.0L542.1 272.0L540.0 272.6ZM531.6 275.6L536.7 273.8L544.0 271.3L552.1 268.5L559.8 265.9L567.5 263.0L575.5 259.9L582.7 257.2L587.8 255.4L587.6 254.9L582.6 256.8L575.3 259.4L567.2 262.2L559.5 264.9L551.8 267.7L543.7 270.7L536.5 273.3L531.5 275.1ZM680.9 325.7L682.6 326.6L685.0 327.9L687.7 329.5L690.3 331.0L693.1 332.3L696.0 333.8L698.7 335.1L700.5 336.1L700.8 335.7L699.0 334.6L696.5 332.9L693.7 331.2L691.1 329.5L688.3 328.3L685.4 327.1L682.8 326.0L681.1 325.2ZM699.3 394.3L700.7 390.9L702.7 385.9L705.1 380.9L707.7 377.1L710.5 374.8L713.9 373.4L717.0 372.4L719.3 371.8L719.1 371.3L716.9 372.0L713.7 372.8L710.1 374.1L706.9 376.5L704.4 380.5L702.1 385.7L700.2 390.7L698.8 394.1ZM769.0 310.3L772.1 312.8L776.6 316.5L781.6 320.3L786.1 323.1L790.3 324.0L794.3 324.0L797.7 323.6L800.1 323.5L800.0 323.0L797.7 323.1L794.3 323.3L790.4 323.0L786.6 321.9L782.2 319.5L777.1 315.9L772.4 312.4L769.3 309.9ZM367.8 351.2L369.7 352.3L372.5 354.2L375.5 356.1L378.3 357.7L381.2 358.7L384.1 359.4L386.6 360.0L388.3 360.4L388.5 359.9L386.7 359.4L384.3 358.6L381.6 357.6L378.9 356.4L376.1 355.1L372.9 353.4L370.0 351.9L368.1 350.7ZM344.1 282.5L345.7 280.0L348.0 276.6L350.7 273.0L353.3 270.4L356.1 268.5L359.2 267.1L362.2 266.1L364.3 265.4L364.1 264.9L362.0 265.6L359.0 266.3L355.6 267.5L352.4 269.3L349.8 272.3L347.3 276.1L345.2 279.7L343.7 282.2ZM591.5 253.2L593.5 251.6L596.4 249.4L599.7 246.8L602.7 243.9L605.3 240.0L607.8 235.5L610.1 231.4L611.7 228.5L611.3 228.3L609.7 231.1L607.3 235.2L604.6 239.6L601.9 243.2L599.2 246.2L596.1 249.0L593.2 251.2L591.2 252.8ZM388.0 236.6L391.1 235.8L395.6 234.6L400.7 233.8L405.8 234.1L411.5 236.1L417.9 239.4L423.8 242.9L427.9 245.2L428.1 244.8L424.0 242.4L418.2 239.0L411.8 235.5L406.0 233.3L400.6 233.1L395.4 234.0L391.0 235.3L387.8 236.1ZM444.6 310.3L446.2 309.1L448.5 307.4L451.2 305.9L453.7 305.4L456.7 305.9L460.3 307.4L463.8 309.0L466.1 310.2L466.3 309.7L464.0 308.5L460.8 306.6L457.1 304.8L453.7 303.9L450.7 304.8L448.0 306.7L445.8 308.6L444.3 309.9Z"/></g><path fill="url(#gm)" d="M830.6 124.5L848 124.6L865 125L896 128L917 131L934.8 135.4L927.5 140.8L922 141.7L896 136.5L865 132.8L845 130.8L833.7 130Z"/><path fill="#a8a810" d="M751.0 129.7L755.9 129.1L762.8 128.4L770.1 127.7L778.0 126.8L786.2 126.0L792.0 125.4L792.0 125.0L786.2 125.3L777.9 125.8L769.9 126.3L762.7 127.4L755.8 128.5L751.0 129.3ZM763.0 130.7L769.6 130.2L779.2 129.7L790.0 129.1L803.3 128.4L817.8 127.6L828.0 127.2L828.0 126.8L817.7 127.1L803.2 127.5L790.0 127.9L779.2 128.8L769.6 129.7L763.0 130.3ZM766.0 135.2L769.3 134.9L773.8 134.5L778.1 134.1L781.6 133.7L784.8 133.4L787.0 133.2L787.0 132.8L784.8 132.9L781.5 132.9L777.9 133.1L773.7 133.6L769.2 134.4L766.0 134.8Z"/><path fill="#b04090" d="M909.0 128.7L910.7 128.8L913.2 128.8L915.4 128.1L916.5 126.3L916.8 124.2L917.1 122.3L918.3 120.4L919.9 118.5L921.2 117.2L920.8 116.8L919.5 118.1L917.6 119.8L915.9 121.7L915.1 123.8L914.9 125.8L914.6 127.1L913.0 127.8L910.7 128.1L909.0 128.3Z"/><path fill="url(#gn)" d="M789.0 274.2L791.5 273.6L795.1 272.4L799.1 271.1L803.1 269.8L806.6 268.8L809.4 268.1L811.7 267.6L813.9 267.3L816.6 267.0L820.3 266.8L825.3 266.6L831.4 266.6L838.1 266.0L844.7 265.5L850.9 264.9L857.0 264.2L863.3 263.4L869.2 262.5L874.2 261.7L877.7 260.8L877.7 260.4L874.0 260.0L869.0 259.9L863.0 259.9L856.7 259.9L850.7 259.9L844.5 259.8L837.9 259.7L831.2 259.6L825.0 260.0L819.7 260.6L815.8 261.3L812.8 262.1L810.3 263.0L808.0 264.0L805.4 265.2L801.9 266.8L798.1 268.6L794.3 270.6L791.0 272.4L788.8 273.8Z"/><path fill="url(#gn)" d="M873.4 260.7L874.4 261.0L875.8 261.3L877.3 261.8L878.8 262.3L880.1 263.1L881.2 264.0L882.2 264.9L883.2 266.0L884.4 267.8L886.1 270.5L888.3 274.3L890.9 279.0L893.7 284.2L896.6 289.8L899.5 295.3L902.4 301.3L905.7 308.0L908.9 314.7L911.5 320.4L913.4 324.5L913.8 324.3L912.0 320.2L909.4 314.4L906.4 307.7L903.3 300.9L900.5 294.7L897.9 289.1L895.1 283.5L892.4 278.2L890.0 273.4L887.9 269.5L886.3 266.6L885.1 264.7L884.1 263.2L883.1 262.0L881.9 260.9L880.3 259.7L878.5 258.8L876.9 258.2L875.5 257.7L874.6 257.3Z"/><path fill="url(#gn)" d="M800.1 266.2L802.7 265.4L806.4 264.2L810.7 263.0L815.1 262.2L820.2 261.6L826.0 261.1L831.3 260.9L835.0 260.7L835.0 260.3L831.3 260.3L825.9 260.3L820.1 260.4L814.9 260.8L810.4 261.9L806.1 263.4L802.5 264.9L799.9 265.8Z"/><path fill="url(#gk)" d="M712.4 253.0L718.3 259.2L726.7 267.8L736.4 278.0L746.5 288.8L755.8 299.3L764.7 309.7L773.8 320.8L782.7 332.1L791.2 343.2L798.9 353.9L805.7 364.0L811.9 373.8L817.5 383.4L822.7 393.0L827.5 402.6L831.9 413.0L836.1 424.4L839.9 435.3L843.0 444.8L845.3 451.6L854.7 448.4L852.5 441.7L849.4 432.2L845.6 421.0L841.2 409.3L836.5 398.4L831.6 388.4L826.2 378.5L820.4 368.6L814.1 358.5L807.1 348.1L799.3 337.2L790.6 325.9L781.6 314.5L772.4 303.3L763.4 292.7L753.9 282.0L743.7 271.1L733.9 260.9L725.5 252.2L719.6 246.0Z"/><path fill="#f0d820" d="M779.8 362.1L781.3 364.9L783.2 368.8L785.7 373.4L788.6 378.6L791.8 384.4L795.5 390.9L799.9 398.4L804.5 406.3L809.0 414.0L812.8 420.8L816.2 427.0L819.3 433.1L822.0 438.6L824.3 443.3L825.9 446.7L832.1 443.3L830.1 440.1L827.5 435.7L824.4 430.3L820.9 424.3L817.2 418.2L813.0 411.6L808.1 404.1L803.2 396.4L798.4 389.1L794.2 382.8L790.7 377.4L787.4 372.4L784.4 368.0L782.0 364.5L780.2 361.9Z"/><path d="M806.0 306Q832.0 345 822.0 402M810.5 310Q836.5 348 826.5 401M815.0 314Q841.0 351 831.0 400M819.5 318Q845.5 354 835.5 399M824.0 322Q850.0 357 840.0 398M828.5 326Q854.5 360 844.5 397M833.0 330Q859.0 363 849.0 396M837.5 334Q863.5 366 853.5 395M808.0 316Q832 311 844 324M811.5 326Q834 321 846 334M815.0 336Q836 331 848 344M818.5 346Q838 341 850 354M822.0 356Q840 351 852 364M825.5 366Q842 361 850 374M829.0 376Q844 371 848 384M832.5 386Q846 381 846 394" fill="none" stroke="#e0c028" stroke-width="1.1"/></svg>
<svg class="a" style="left:117px;top:586px" width="820" height="495" viewBox="117 586 820 495"><rect x="117" y="586" width="820" height="495" fill="#45484b"/><path d="M1771.3 1789.3L-385.6 1052.6M1771.3 1789.3L1310.9 1008.4M1651.4 1585.9L-296.0 1042.6M1332.8 1639.5L1247.8 1004.3M1575.0 1456.3L-215.9 1033.6M1016.1 1531.3L1188.1 1000.4M1522.0 1366.5L-143.8 1025.5M776.8 1449.6L1131.6 996.7M1483.2 1300.6L-78.5 1018.1M589.4 1385.6L1078.0 993.2M1453.5 1250.2L-19.1 1011.5M438.8 1334.2L1027.1 989.9M1430.0 1210.4L35.1 1005.4M315.2 1291.9L978.7 986.8M1411.0 1178.1L84.8 999.8M211.8 1256.6L932.6 983.8M1395.2 1151.5L130.5 994.7M124.0 1226.7L888.7 980.9M1382.0 1129.1L172.7 989.9M48.7 1200.9L846.8 978.2M1361.1 1093.5L248.1 981.5M-74.2 1159.0L768.4 973.0M1352.6 1079.2L281.9 977.7M-124.9 1141.6L731.8 970.7M1345.2 1066.6L313.5 974.1M-170.0 1126.2L696.6 968.4M1338.6 1055.5L343.0 970.8M-210.4 1112.4L662.9 966.2M1332.8 1045.5L370.7 967.7M-246.8 1100.0L630.6 964.1M1327.5 1036.6L396.7 964.8M-279.8 1088.7L599.6 962.0M1322.7 1028.5L421.2 962.0M-309.8 1078.5L569.7 960.1M1318.4 1021.2L444.2 959.4M-337.3 1069.1L541.0 958.2M1314.5 1014.5L466.0 957.0M-362.4 1060.5L513.3 956.4" stroke="#36393c" stroke-width="1" fill="none"/><path d="M1370.8 1110.0L211.8 985.5M-16.8 1178.6L806.7 975.5M1310.9 1008.4L486.7 954.7M-385.6 1052.6L486.7 954.7" stroke="#141414" stroke-width="1" fill="none"/><text x="175" y="986.5" font-family="Liberation Sans, sans-serif" font-size="10" fill="#151515" letter-spacing="0">+Z</text><path fill="#7a5200" d="M486.3 764.0L490.8 761.9L497.1 758.6L504.2 755.0L510.8 752.0L517.1 748.9L523.9 746.0L529.9 743.4L534.1 741.5L533.9 741.0L529.5 742.3L523.2 744.1L516.1 746.5L509.4 749.1L502.9 752.7L496.2 756.9L490.2 760.8L486.1 763.6Z"/><path fill="#7a5200" d="M539.4 750.0L544.8 748.8L552.5 747.1L561.0 745.3L568.8 743.9L575.5 743.1L581.9 742.6L588.3 742.4L595.1 742.5L603.2 743.2L612.4 744.3L620.7 745.4L626.6 746.3L627.4 738.3L621.5 738.0L613.0 737.4L603.6 736.8L595.1 736.8L588.0 737.2L581.4 738.1L574.9 739.2L568.2 740.7L560.4 742.7L552.0 745.3L544.5 747.8L539.2 749.5Z"/><path fill="#7a5200" d="M367.5 880.6L368.4 878.7L369.8 876.1L371.2 873.5L372.7 870.8L374.3 868.2L375.4 866.3L372.8 864.8L371.7 866.6L370.1 869.3L368.5 872.0L367.1 874.7L365.7 877.4L364.8 879.2Z"/><path fill="#1f6171" d="M494.3 767.5L500.0 767.0L507.3 764.8L515.4 762.2L522.8 759.2L530.5 755.4L539.3 751.4L547.3 747.7L552.7 744.1L552.5 743.7L546.1 743.6L537.3 744.8L527.6 746.7L518.6 748.8L510.8 752.6L503.6 757.7L497.7 762.7L494.0 767.1Z"/><path fill="#ffffc8" d="M507.5 763.3L511.1 762.0L516.2 760.0L521.7 757.8L526.8 755.8L531.4 753.6L536.2 751.4L540.5 749.4L543.4 747.9L543.2 747.4L540.0 748.0L535.4 749.1L530.3 750.5L525.2 752.2L520.3 754.8L515.1 757.8L510.5 760.7L507.3 762.8Z"/><path fill="#1f6171" d="M515.5 774.7L521.7 775.0L530.3 774.1L539.7 772.5L548.1 769.9L556.3 767.5L565.0 765.0L572.6 762.8L577.9 760.6L577.8 760.1L572.1 760.0L564.1 760.5L555.1 761.4L546.5 762.6L537.6 764.1L528.5 767.3L520.6 770.8L515.3 774.2Z"/><path fill="#1f6171" d="M568.5 814.8L573.3 815.2L580.1 815.4L587.7 815.4L595.2 815.6L603.3 815.9L612.1 816.3L620.1 816.7L625.7 817.1L625.5 806.1L620.0 806.8L611.9 807.5L603.0 808.3L594.9 809.3L587.4 810.4L579.7 811.7L573.1 813.1L568.5 814.3Z"/><path fill="#1f6171" d="M183.5 847.2L190.9 844.2L201.3 839.5L213.0 834.1L224.3 828.9L234.9 823.9L245.6 818.6L256.2 813.1L266.8 807.8L277.6 802.6L288.6 797.5L299.2 792.8L308.7 789.2L317.4 786.8L325.6 785.3L332.6 784.3L337.5 783.5L337.4 783.0L332.5 783.1L325.4 783.4L316.9 784.3L307.8 786.3L297.9 789.5L287.0 793.7L275.7 798.4L264.7 803.3L253.9 808.2L243.0 813.4L232.4 819.0L222.2 824.7L211.3 830.6L200.0 836.9L190.1 842.6L183.3 846.7Z"/><path fill="#ffffc8" d="M195.4 862.1L199.5 858.8L205.8 854.6L212.6 850.7L219.8 847.6L227.4 844.7L233.9 841.6L237.8 838.0L240.6 834.2L244.5 830.2L251.0 826.2L258.7 822.2L265.7 818.3L271.1 815.1L275.8 812.0L281.7 807.6L289.2 800.8L297.8 792.5L308.2 785.1L320.6 779.0L334.8 773.7L350.7 769.1L369.4 765.2L389.9 762.0L409.2 759.8L426.3 758.9L442.2 759.0L457.0 759.8L470.2 761.3L482.2 763.4L494.2 766.5L506.7 770.5L519.3 775.4L531.3 781.1L542.6 787.4L553.2 794.4L563.2 802.3L572.8 811.8L581.7 822.1L589.8 831.6L597.0 838.8L603.3 845.2L608.4 852.8L612.3 862.8L615.0 874.1L616.3 884.7L615.9 894.3L614.1 903.3L611.6 911.2L608.3 918.3L604.4 924.4L600.9 928.5L597.8 930.6L595.1 930.8L593.8 928.5L594.9 922.6L597.3 914.2L599.1 905.9L599.5 898.5L599.1 891.3L597.7 884.7L595.0 878.8L591.2 873.6L587.1 868.7L583.2 863.7L579.0 859.0L573.8 856.8L568.9 859.1L563.1 863.9L552.6 866.1L532.7 863.0L508.1 857.3L488.8 852.8L480.5 850.9L477.4 850.0L472.9 849.6L463.6 848.8L452.7 848.4L443.7 850.1L438.9 855.5L435.8 863.1L430.4 870.1L420.1 876.6L407.4 882.6L395.9 884.7L386.8 880.1L379.0 871.7L372.0 864.8L366.5 861.3L361.8 859.2L356.0 858.1L348.5 857.7L339.7 858.1L329.5 859.4L317.0 862.0L303.0 865.5L289.6 868.7L277.8 871.4L266.6 873.9L255.1 875.4L242.3 875.8L229.1 875.3L217.9 874.1L209.4 871.6L202.7 868.3L198.0 865.6L195.1 864.3L194.1 863.7Z"/><path fill="#ffffc8" d="M140.9 843.5L147.9 841.4L158.7 838.9L170.1 836.3L180.9 833.9L192.4 831.5L204.6 828.9L218.5 826.3L233.3 823.6L247.1 820.4L260.3 815.7L272.6 810.5L281.7 807.1L286.6 806.8L288.3 808.2L287.0 810.3L281.9 812.8L273.8 815.8L265.7 818.8L258.7 821.5L251.6 824.2L244.5 826.8L238.1 829.1L231.7 831.3L223.2 833.7L211.2 836.6L197.2 839.6L183.4 842.2L169.6 844.2L156.2 845.7L146.2 846.4L140.8 846.1L138.9 845.1Z"/><path fill="#ffffc8" d="M552.6 802.6L557.2 803.0L563.3 802.8L568.5 803.2L572.6 803.0L577.0 803.4L580.4 803.1L580.6 802.6L578.0 800.3L573.9 797.9L568.6 796.2L562.5 797.6L556.5 799.8L552.5 802.1Z"/><path fill="#1f6171" d="M265.9 807.9L272.6 804.3L282.4 799.4L293.2 794.2L303.2 790.2L311.7 787.7L319.8 785.9L328.2 784.9L337.4 784.8L347.9 785.3L359.2 786.6L370.9 788.9L382.4 792.3L394.7 798.2L407.8 805.8L419.5 813.3L427.6 818.5L427.9 818.1L419.8 812.8L408.2 805.1L395.2 797.2L382.9 791.1L371.3 787.3L359.5 784.8L348.1 783.3L337.5 782.6L328.1 782.9L319.5 784.2L311.3 786.2L302.7 789.0L292.7 793.2L282.0 798.6L272.4 803.9L265.6 807.4Z"/><path fill="#1f6171" d="M183.5 847.7L189.2 845.6L197.3 842.1L205.5 838.7L213.9 834.3L222.6 829.8L228.7 826.5L228.5 826.0L221.9 828.1L212.7 831.6L203.8 835.1L195.9 839.5L188.4 843.9L183.3 847.3Z"/><path fill="#1f6171" d="M281.7 809.8L297.6 805.0L329.5 811.6L369.3 831.6L403.9 852.8L430.4 870.1L443.7 852.0L472.9 848.8L478.8 852.8L462.3 868.7L446.3 882.0L422.4 893.2L387.9 895.8L386.6 891.3L401.7 886.8L382.6 872.7L364.0 858.1L342.8 839.5L313.5 822.3L287.0 814.8Z"/><path fill="#1f6171" d="M420.7 861.0L424.1 859.5L429.0 857.6L433.5 855.8L437.4 854.3L440.8 852.8L443.2 851.7L443.1 851.2L440.5 851.4L436.7 851.8L432.6 852.5L427.8 853.4L422.6 854.6L418.9 855.2Z"/><path fill="#102090" d="M373.1 868.9L376.1 872.4L380.4 877.2L384.5 881.5L387.7 884.7L390.9 887.2L394.1 888.9L397.2 889.5L399.9 889.4L401.7 889.2L401.7 888.7L400.0 888.4L397.5 887.9L395.0 886.8L392.5 885.0L389.5 882.6L386.0 879.9L381.6 876.0L376.9 871.6L373.5 868.6Z"/><path fill="#102090" d="M435.9 863.6L437.1 861.8L438.8 859.4L440.4 857.2L441.5 855.3L442.6 853.6L443.4 852.4L443.0 852.1L442.0 853.1L440.5 854.6L439.0 856.3L437.8 858.8L436.5 861.4L435.5 863.3Z"/><path fill="#70206e" d="M329.5 786.9L369.3 779.8L409.2 789.1L449.0 810.3L483.5 839.5L492.0 856.0L475.6 836.9L449.0 826.2L409.2 820.9L385.3 826.8L372.0 820.9L350.7 813.0L340.6 799.7Z"/><path fill="#70206e" d="M483.0 824.1L499.5 844.8L552.6 866.6L573.8 856.0L559.2 875.4L527.4 892.6L526.0 911.2L515.4 927.7L499.5 929.8L487.5 916.5L481.4 900.6L474.2 882.0L472.4 870.1L491.5 856.8Z"/><path d="M422.4 763.8L428.2 764.5L436.2 765.3L445.7 766.2L455.9 767.6L466.1 769.4L475.6 771.8L484.6 774.9L493.8 778.5L503.0 782.6L512.0 787.1L520.6 791.9L528.7 797.0L536.3 802.6L543.5 808.6L550.4 815.0L556.9 821.6L563.0 828.0L568.5 834.2L573.7 840.5L578.6 847.2L583.0 853.8L586.8 859.9L590.0 865.0L592.4 868.7M435.7 769.1L440.9 770.1L448.1 771.3L456.6 772.7L465.8 774.5L475.0 776.9L483.5 779.8L491.7 783.3L500.0 787.4L508.3 792.0L516.4 797.0L524.1 802.3L531.3 807.6L538.1 813.4L544.4 819.7L550.4 826.2L556.0 832.7L561.2 839.0L565.9 844.8L570.1 850.5L573.9 856.2L577.3 861.8L580.2 866.8L582.6 871.0L584.5 874.1M462.3 767.8L467.5 769.4L474.9 771.4L483.5 774.0L492.8 776.9L501.9 780.1L510.1 783.7L517.6 787.7L525.0 792.1L532.3 796.9L539.4 801.9L546.2 807.3L552.6 813.0L558.7 819.0L564.5 825.6L570.0 832.4L575.2 839.3L580.0 846.2L584.5 852.8L588.5 859.6L592.3 866.8L595.8 873.9L598.7 880.4L601.2 886.0L603.1 890.0M488.8 777.1L493.6 779.5L500.3 782.8L508.1 786.7L516.4 791.0L524.4 795.4L531.3 799.7L537.4 803.8L543.0 807.9L548.4 812.2L553.6 816.7L558.5 821.3L563.2 826.2L567.9 831.9L572.7 838.4L577.2 845.2L581.2 851.5L584.6 856.9L587.1 860.8" fill="none" stroke="#3c3820" stroke-width="1" stroke-dasharray="1 3.2"/><path d="M236.5 858.1L260.4 844.8L287.0 826.2M241.8 862.1L265.7 847.5L289.6 830.2M287.0 807.6L308.2 797.0L329.5 789.6M302.9 805.0L324.2 797.0L345.4 791.7" fill="none" stroke="#3c3820" stroke-width="1" stroke-dasharray="1 3.6"/><path d="M117.0 852.3L188.7 854.1" stroke="#860000" stroke-width="1.3"/><path fill="#7e0000" d="M184.7 847.5L215.8 854.1L187.4 861.0Z"/><path fill="#c86a58" d="M201.5 851.7L215.8 854.1L202.0 857.1Z"/><path d="M117.0 864.8L156.8 892.6" stroke="#20208c" stroke-width="1.2"/><path fill="#22228e" d="M158.7 886.0L179.2 910.4L148.9 895.8Z"/><path d="M606.5 942V958M598.5 950H614.5" stroke="#e80000" stroke-width="1.2"/></svg>
<div class="a" style="left:0;top:0;width:1920px;height:23px;background:#777779"></div><svg class="a" style="left:2px;top:3px" width="16" height="16" viewBox="0 0 16 16"><circle cx="8" cy="8" r="8" fill="#0cbcf4"/><path d="M6.6 0.6 L7.4 2.6 C9.6 2.2 11.6 3.2 12.6 5 L14 7.6 L12.6 9.2 L13.6 10.4 L11.6 12.4 L13 13 C12 14.6 10 15.4 8 15.3 C4 15.1 0.8 12 0.8 8 C0.8 5 2.6 2.4 5 1.4 Z" fill="#08202e"/><path d="M9.3 9.8 A3 3 0 1 1 6.4 6.8" fill="none" stroke="#0cbcf4" stroke-width="1.15"/><circle cx="6.5" cy="10" r="1.25" fill="#0cbcf4"/><path d="M9.6 5.4 L12 6.1" stroke="#0cbcf4" stroke-width="0.8"/></svg><div class="a" style="left:23px;top:4px;font-size:11.3px;letter-spacing:0;color:#fff;line-height:17px">Layout™ NewTek LightWave 3D® 2019.1.5 (Win64) - fg21c301_m02_01_v018.lws</div>
<div class="hd" style="left:3px;top:24px;width:111px;height:17px;line-height:19px">File</div><div class="a" style="left:3px;top:39px;width:110px;height:63px;background:#59595d;border-radius:0 0 3px 3px;box-shadow:0 0 0 1px #2c2c2e;overflow:hidden"><div class="row" style="top:-1px;border-top-color:transparent;">Load<svg class="a" style="left:94px;top:6px" width="9" height="6" viewBox="0 0 9 6"><path d="M1 1 L4.5 4.6 L8 1" fill="none" stroke="#e4e4e4" stroke-width="2"/></svg></div><div class="row" style="top:15px;">Save<svg class="a" style="left:94px;top:6px" width="9" height="6" viewBox="0 0 9 6"><path d="M1 1 L4.5 4.6 L8 1" fill="none" stroke="#e4e4e4" stroke-width="2"/></svg></div><div class="row" style="top:31px;">Edit<svg class="a" style="left:94px;top:6px" width="9" height="6" viewBox="0 0 9 6"><path d="M1 1 L4.5 4.6 L8 1" fill="none" stroke="#e4e4e4" stroke-width="2"/></svg></div><div class="row" style="top:47px;">Help<svg class="a" style="left:94px;top:6px" width="9" height="6" viewBox="0 0 9 6"><path d="M1 1 L4.5 4.6 L8 1" fill="none" stroke="#e4e4e4" stroke-width="2"/></svg></div></div>
<div class="a" style="left:3px;top:107px;width:110px;height:31px;background:#59595d;border-radius:3px;box-shadow:0 0 0 1px #2c2c2e;overflow:hidden"><div class="row" style="top:-1px;border-top-color:transparent;">Clear Scene<span class="sc">+N</span></div><div class="row" style="top:15px;">Quit<span class="sc">+Q</span></div></div>
<div class="hd" style="left:3px;top:146px;width:111px;height:17px;line-height:19px">Editors</div><div class="a" style="left:3px;top:161px;width:110px;height:111px;background:#59595d;border-radius:0 0 3px 3px;box-shadow:0 0 0 1px #2c2c2e;overflow:hidden"><div class="row" style="top:-1px;border-top-color:transparent;">Scene Editor<svg class="a" style="left:94px;top:6px" width="9" height="6" viewBox="0 0 9 6"><path d="M1 1 L4.5 4.6 L8 1" fill="none" stroke="#e4e4e4" stroke-width="2"/></svg></div><div class="row" style="top:15px;">Surface Editor<span class="sc">F5</span></div><div class="row" style="top:31px;">Presets<span class="sc">F8</span></div><div class="row" style="top:47px;">Image Editor<span class="sc">F6</span></div><div class="row" style="top:63px;">Graph Editor<span class="sc">^F2</span></div><div class="row" style="top:79px;">Backdrop<span class="sc">^F5</span></div><div class="row" style="top:95px;">More Windows<svg class="a" style="left:94px;top:6px" width="9" height="6" viewBox="0 0 9 6"><path d="M1 1 L4.5 4.6 L8 1" fill="none" stroke="#e4e4e4" stroke-width="2"/></svg></div></div>
<div class="a" style="left:3px;top:277px;width:110px;height:15px;background:#59595d;border-radius:3px;box-shadow:0 0 0 1px #2c2c2e;overflow:hidden"><div class="row" style="top:-1px;background:#4a6c92;border-top-color:transparent;">Parent in Place</div></div>
<div class="a" style="left:3px;top:296px;width:110px;height:47px;background:#59595d;border-radius:3px;box-shadow:0 0 0 1px #2c2c2e;overflow:hidden"><div class="row" style="top:-1px;border-top-color:transparent;">World Axes<span class="sc">+F5</span></div><div class="row" style="top:15px;background:#4a6c92;">Parent Axes<span class="sc">+F6</span></div><div class="row" style="top:31px;">Local Axes<span class="sc">+F7</span></div></div>
<div class="hd" style="left:3px;top:351px;width:111px;height:17px;line-height:19px">Commands</div><div class="a" style="left:3px;top:366px;width:110px;height:47px;background:#59595d;border-radius:0 0 3px 3px;box-shadow:0 0 0 1px #2c2c2e;overflow:hidden"><div class="row" style="top:-1px;border-top-color:transparent;">Cmd History</div><div class="row" style="top:15px;">Command Input</div><div class="row" style="top:31px;">Save Cmd List</div></div>
<div class="hd" style="left:3px;top:422px;width:111px;height:17px;line-height:19px">LScript</div><div class="a" style="left:3px;top:437px;width:110px;height:63px;background:#59595d;border-radius:0 0 3px 3px;box-shadow:0 0 0 1px #2c2c2e;overflow:hidden"><div class="row" style="top:-1px;border-top-color:transparent;">LScript</div><div class="row" style="top:15px;">LScript/RT</div><div class="row" style="top:31px;">LS Commander</div><div class="row" style="top:47px;">LSCompiler</div></div>
<div class="hd" style="left:3px;top:509px;width:111px;height:17px;line-height:19px">Python</div><div class="a" style="left:3px;top:524px;width:110px;height:31px;background:#59595d;border-radius:0 0 3px 3px;box-shadow:0 0 0 1px #2c2c2e;overflow:hidden"><div class="row" style="top:-1px;border-top-color:transparent;">Open Console</div><div class="row" style="top:15px;">Python</div></div>
<div class="hd" style="left:3px;top:564px;width:111px;height:17px;line-height:19px">Plugins</div><div class="a" style="left:3px;top:579px;width:110px;height:47px;background:#59595d;border-radius:0 0 3px 3px;box-shadow:0 0 0 1px #2c2c2e;overflow:hidden"><div class="row" style="top:-1px;border-top-color:transparent;">Add Plugins</div><div class="row" style="top:15px;">Edit Plugins<span class="sc">*F11</span></div><div class="row" style="top:31px;">Last Plugin</div></div>
<div class="a" style="left:3px;top:631px;width:110px;height:31px;background:#59595d;border-radius:3px;box-shadow:0 0 0 1px #2c2c2e;overflow:hidden"><div class="row" style="top:-1px;border-top-color:transparent;">Master Plugins<span class="sc">^Q</span></div><div class="row" style="top:15px;">Additional<svg class="a" style="left:94px;top:6px" width="9" height="6" viewBox="0 0 9 6"><path d="M1 1 L4.5 4.6 L8 1" fill="none" stroke="#e4e4e4" stroke-width="2"/></svg></div></div>
<div class="a" style="left:489px;top:25px;width:62px;height:15px"><svg class="a" style="left:-1px;top:-1px" width="64" height="16" viewBox="-1 -1 64 16"><path d="M0 15 L0 3 Q0 0 3 0 L45 0 Q48 0 50 2 L62 15 Z" fill="#4a6c92"/><path d="M0 15 L0 3 Q0 0 3 0 L45 0 Q48 0 50 2 L62 15" fill="none" stroke="#2c2c2e" stroke-width="1"/></svg><span class="a" style="left:9px;top:1px;line-height:15px">Utilities</span></div>
<div class="a" style="left:456px;top:25px;width:38px;height:15px"><svg class="a" style="left:-1px;top:-1px" width="40" height="16" viewBox="-1 -1 40 16"><path d="M0 15 L0 3 Q0 0 3 0 L21 0 Q24 0 26 2 L38 15 Z" fill="#555559"/><path d="M0 15 L0 3 Q0 0 3 0 L21 0 Q24 0 26 2 L38 15" fill="none" stroke="#2c2c2e" stroke-width="1"/></svg><span class="a" style="left:8px;top:1px;line-height:15px">I/O</span></div>
<div class="a" style="left:409px;top:25px;width:57px;height:15px"><svg class="a" style="left:-1px;top:-1px" width="59" height="16" viewBox="-1 -1 59 16"><path d="M0 15 L0 3 Q0 0 3 0 L40 0 Q43 0 45 2 L57 15 Z" fill="#555559"/><path d="M0 15 L0 3 Q0 0 3 0 L40 0 Q43 0 45 2 L57 15" fill="none" stroke="#2c2c2e" stroke-width="1"/></svg><span class="a" style="left:8px;top:1px;line-height:15px">Model</span></div>
<div class="a" style="left:368px;top:25px;width:49px;height:15px"><svg class="a" style="left:-1px;top:-1px" width="51" height="16" viewBox="-1 -1 51 16"><path d="M0 15 L0 3 Q0 0 3 0 L32 0 Q35 0 37 2 L49 15 Z" fill="#555559"/><path d="M0 15 L0 3 Q0 0 3 0 L32 0 Q35 0 37 2 L49 15" fill="none" stroke="#2c2c2e" stroke-width="1"/></svg><span class="a" style="left:8px;top:1px;line-height:15px">View</span></div>
<div class="a" style="left:315px;top:25px;width:61px;height:15px"><svg class="a" style="left:-1px;top:-1px" width="63" height="16" viewBox="-1 -1 63 16"><path d="M0 15 L0 3 Q0 0 3 0 L44 0 Q47 0 49 2 L61 15 Z" fill="#555559"/><path d="M0 15 L0 3 Q0 0 3 0 L44 0 Q47 0 49 2 L61 15" fill="none" stroke="#2c2c2e" stroke-width="1"/></svg><span class="a" style="left:8px;top:1px;line-height:15px">Render</span></div>
<div class="a" style="left:255px;top:25px;width:68px;height:15px"><svg class="a" style="left:-1px;top:-1px" width="70" height="16" viewBox="-1 -1 70 16"><path d="M0 15 L0 3 Q0 0 3 0 L51 0 Q54 0 56 2 L68 15 Z" fill="#555559"/><path d="M0 15 L0 3 Q0 0 3 0 L51 0 Q54 0 56 2 L68 15" fill="none" stroke="#2c2c2e" stroke-width="1"/></svg><span class="a" style="left:8px;top:1px;line-height:15px">FX Tools</span></div>
<div class="a" style="left:209px;top:25px;width:54px;height:15px"><svg class="a" style="left:-1px;top:-1px" width="56" height="16" viewBox="-1 -1 56 16"><path d="M0 15 L0 3 Q0 0 3 0 L37 0 Q40 0 42 2 L54 15 Z" fill="#555559"/><path d="M0 15 L0 3 Q0 0 3 0 L37 0 Q40 0 42 2 L54 15" fill="none" stroke="#2c2c2e" stroke-width="1"/></svg><span class="a" style="left:8px;top:1px;line-height:15px">Setup</span></div>
<div class="a" style="left:160px;top:25px;width:58px;height:15px"><svg class="a" style="left:-1px;top:-1px" width="60" height="16" viewBox="-1 -1 60 16"><path d="M0 15 L0 3 Q0 0 3 0 L41 0 Q44 0 46 2 L58 15 Z" fill="#555559"/><path d="M0 15 L0 3 Q0 0 3 0 L41 0 Q44 0 46 2 L58 15" fill="none" stroke="#2c2c2e" stroke-width="1"/></svg><span class="a" style="left:8px;top:1px;line-height:15px">Modify</span></div>
<div class="a" style="left:117px;top:25px;width:48px;height:15px"><svg class="a" style="left:-1px;top:-1px" width="50" height="16" viewBox="-1 -1 50 16"><path d="M0 15 L0 3 Q0 0 3 0 L31 0 Q34 0 36 2 L48 15 Z" fill="#555559"/><path d="M0 15 L0 3 Q0 0 3 0 L31 0 Q34 0 36 2 L48 15" fill="none" stroke="#2c2c2e" stroke-width="1"/></svg><span class="a" style="left:8px;top:1px;line-height:15px">Items</span></div>
<div class="a" style="left:116px;top:43px;width:821px;height:17px;background:#2d2d2f"></div>
<div class="b fl" style="left:117px;top:44px;width:198px;height:15px;line-height:16px">Perspective<svg class="a" style="left:185px;top:5px" width="9" height="6" viewBox="0 0 9 6"><path d="M1 1 L4.5 4.6 L8 1" fill="none" stroke="#e4e4e4" stroke-width="2"/></svg></div>
<div class="b fl" style="left:316px;top:44px;width:206px;height:15px;line-height:16px">VPR<svg class="a" style="left:194px;top:5px" width="9" height="6" viewBox="0 0 9 6"><path d="M1 1 L4.5 4.6 L8 1" fill="none" stroke="#e4e4e4" stroke-width="2"/></svg></div>
<div class="b fl" style="left:524px;top:44px;width:179px;height:15px;line-height:16px">Final_Render<svg class="a" style="left:167px;top:5px" width="9" height="6" viewBox="0 0 9 6"><path d="M1 1 L4.5 4.6 L8 1" fill="none" stroke="#e4e4e4" stroke-width="2"/></svg></div>
<div class="b fl" style="left:704px;top:44px;width:17px;height:15px;line-height:16px"><svg class="a" style="left:4px;top:5px" width="9" height="6" viewBox="0 0 9 6"><path d="M1 1 L4.5 4.6 L8 1" fill="none" stroke="#e4e4e4" stroke-width="2"/></svg></div>
<div class="b bl" style="left:772px;top:44px;width:19px;height:15px;padding:0;border-radius:1px"><svg class="a" style="left:3.5px;top:1.5px" width="12" height="12" viewBox="0 0 12 12"><path d="M1 3.5 H3.5 L4.5 1.5 H7.5 L8.5 3.5 H11 V11 H1 Z" fill="#e4e4e4"/><circle cx="6" cy="7" r="2.3" fill="#4a6c92"/><circle cx="6" cy="7" r="1.1" fill="#e4e4e4"/></svg></div>
<div class="b fl" style="left:792px;top:44px;width:19px;height:15px;padding:0;border-radius:1px"><svg class="a" style="left:3.5px;top:1.5px" width="12" height="12" viewBox="0 0 12 12"><g stroke="#e4e4e4" stroke-width="2.7"><path d="M6 0.5V11.5M0.5 6H11.5M2.1 2.1L9.9 9.9M9.9 2.1L2.1 9.9"/></g><circle cx="6" cy="6" r="4.2" fill="#e4e4e4"/><circle cx="6" cy="6" r="2" fill="#59595d"/></svg></div>
<div class="b fl" style="left:812px;top:44px;width:19px;height:15px;padding:0;border-radius:1px"><svg class="a" style="left:3.5px;top:1.5px" width="12" height="12" viewBox="0 0 12 12"><path d="M6 0.5V7M3 4.5L6 7.5L9 4.5" fill="none" stroke="#e4e4e4" stroke-width="1.8"/><path d="M1 6.5V11H11V6.5" fill="none" stroke="#e4e4e4" stroke-width="1.6"/></svg></div>
<div class="b fl" style="left:842px;top:44px;width:19px;height:15px;padding:0;border-radius:1px"><svg class="a" style="left:3.5px;top:1.5px" width="12" height="12" viewBox="0 0 12 12"><circle cx="6" cy="6" r="5.1" fill="none" stroke="#e4e4e4" stroke-width="1.3"/><path d="M6 1V4.4M6 7.6V11M1 6H4.4M7.6 6H11" stroke="#e4e4e4" stroke-width="1.3"/></svg></div>
<div class="b fl" style="left:862px;top:44px;width:19px;height:15px;padding:0;border-radius:1px"><svg class="a" style="left:3.5px;top:1.5px" width="12" height="12" viewBox="0 0 12 12"><path d="M6 1V11M1 6H11" stroke="#e4e4e4" stroke-width="1.4"/><path d="M6 0L8.2 2.6H3.8ZM6 12L8.2 9.4H3.8ZM0 6L2.6 3.8V8.2ZM12 6L9.4 3.8V8.2Z" fill="#e4e4e4"/></svg></div>
<div class="b fl" style="left:882px;top:44px;width:19px;height:15px;padding:0;border-radius:1px"><svg class="a" style="left:3.5px;top:1.5px" width="12" height="12" viewBox="0 0 12 12"><path d="M1.3 5.2A4.8 4.8 0 0 1 10 3.2M10.7 6.8A4.8 4.8 0 0 1 2 8.8" fill="none" stroke="#e4e4e4" stroke-width="1.6"/><path d="M11.6 0.6V4.6H7.6ZM0.4 11.4V7.4H4.4Z" fill="#e4e4e4"/></svg></div>
<div class="b fl" style="left:902px;top:44px;width:19px;height:15px;padding:0;border-radius:1px"><svg class="a" style="left:3.5px;top:1.5px" width="12" height="12" viewBox="0 0 12 12"><circle cx="5" cy="5" r="3.7" fill="none" stroke="#e4e4e4" stroke-width="1.3"/><path d="M7.8 7.8L11.4 11.4" stroke="#e4e4e4" stroke-width="1.5"/></svg></div>
<div class="b fl" style="left:922px;top:44px;width:19px;height:15px;padding:0;border-radius:1px"><svg class="a" style="left:3.5px;top:1.5px" width="12" height="12" viewBox="0 0 12 12"><path d="M1 1H11V11H1Z M6 1V6H11" fill="none" stroke="#e4e4e4" stroke-width="1.2"/></svg></div>
<div class="b fl" style="left:117px;top:570px;width:198px;height:15px;line-height:16px">Perspective<svg class="a" style="left:185px;top:5px" width="9" height="6" viewBox="0 0 9 6"><path d="M1 1 L4.5 4.6 L8 1" fill="none" stroke="#e4e4e4" stroke-width="2"/></svg></div>
<div class="b fl" style="left:317px;top:570px;width:206px;height:15px;line-height:16px;padding-left:21px"><svg class="a" style="left:4px;top:2px" width="11" height="11" viewBox="0 0 11 11"><rect x="0.5" y="0.5" width="10" height="10" rx="1.5" fill="none" stroke="#e4e4e4"/><path d="M2.5 2.5H8.5V4.5H6.5V8.8H4.5V4.5H2.5Z" fill="#e4e4e4"/></svg>Textured Shaded Solid Wireframe<svg class="a" style="left:192px;top:5px" width="9" height="6" viewBox="0 0 9 6"><path d="M1 1 L4.5 4.6 L8 1" fill="none" stroke="#e4e4e4" stroke-width="2"/></svg></div>
<div class="b fl" style="left:526px;top:570px;width:16px;height:15px;line-height:16px"><svg class="a" style="left:3px;top:5px" width="9" height="6" viewBox="0 0 9 6"><path d="M1 1 L4.5 4.6 L8 1" fill="none" stroke="#e4e4e4" stroke-width="2"/></svg></div>
<div class="a" style="left:116px;top:1082px;width:820px;height:8px;background:#59595d"></div>
<div class="a" style="left:44px;top:1080px;width:40px;text-align:center">Position</div>
<div class="b bl" style="left:1px;top:1097px;width:15px;height:15px;padding:0;text-align:center;font-size:12.5px;letter-spacing:0">X</div>
<div class="a" style="left:17px;top:1097px;width:2px;height:15px;background:#7a0a0a"></div>
<div class="fld" style="left:20px;top:1097px;width:90px;height:15px;text-align:right;padding-right:7px">-424.855mm</div>
<div class="b" style="left:113px;top:1097px;width:14px;height:15px;padding:0"><svg class="a" style="left:1px;top:3px" width="12" height="9" viewBox="0 0 12 9"><path d="M4.6 1L1.4 4.5L4.6 8M7.4 1L10.6 4.5L7.4 8" fill="none" stroke="#e4e4e4" stroke-width="1.7"/></svg></div>
<div class="b" style="left:131px;top:1097px;width:17px;height:15px;padding:0;text-align:center;letter-spacing:0">E</div>
<div class="b bl" style="left:1px;top:1116px;width:15px;height:15px;padding:0;text-align:center;font-size:12.5px;letter-spacing:0">Y</div>
<div class="a" style="left:17px;top:1116px;width:2px;height:15px;background:#1fd01f"></div>
<div class="fld" style="left:20px;top:1116px;width:90px;height:15px;text-align:right;padding-right:7px">1.649 m</div>
<div class="b" style="left:113px;top:1116px;width:14px;height:15px;padding:0"><svg class="a" style="left:1px;top:3px" width="12" height="9" viewBox="0 0 12 9"><path d="M4.6 1L1.4 4.5L4.6 8M7.4 1L10.6 4.5L7.4 8" fill="none" stroke="#e4e4e4" stroke-width="1.7"/></svg></div>
<div class="b" style="left:131px;top:1116px;width:17px;height:15px;padding:0;text-align:center;letter-spacing:0">E</div>
<div class="b bl" style="left:1px;top:1135px;width:15px;height:15px;padding:0;text-align:center;font-size:12.5px;letter-spacing:0">Z</div>
<div class="a" style="left:17px;top:1135px;width:2px;height:15px;background:#1a1a8c"></div>
<div class="fld" style="left:20px;top:1135px;width:90px;height:15px;text-align:right;padding-right:7px">-24.6461mm</div>
<div class="b" style="left:113px;top:1135px;width:14px;height:15px;padding:0"><svg class="a" style="left:1px;top:3px" width="12" height="9" viewBox="0 0 12 9"><path d="M4.6 1L1.4 4.5L4.6 8M7.4 1L10.6 4.5L7.4 8" fill="none" stroke="#e4e4e4" stroke-width="1.7"/></svg></div>
<div class="b" style="left:131px;top:1135px;width:17px;height:15px;padding:0;text-align:center;letter-spacing:0">E</div>
<div class="fld" style="left:0px;top:1154px;width:149px;height:16px;border-radius:0"><span class="a" style="left:6px;top:0">Grid:</span><span class="a" style="right:9px;top:0">500 mm</span></div>
<div class="fld" style="left:151px;top:1097px;width:69px;height:15px;text-align:right;padding-right:6px">0</div>
<div class="a" style="left:159px;top:1116px">Current Item</div>
<div class="a" style="left:223px;top:1090px;width:713px;height:23px;background:#2e2e30;overflow:hidden"><svg class="a" style="left:0;top:0" width="713" height="23"><rect x="41.25" y="1" width="1" height="7.5" fill="#9a9a9e"/><rect x="54.10" y="1" width="1" height="3" fill="#9a9a9e"/><rect x="66.95" y="1" width="1" height="3" fill="#9a9a9e"/><rect x="79.80" y="1" width="1" height="3" fill="#9a9a9e"/><rect x="92.65" y="1" width="1" height="3" fill="#9a9a9e"/><rect x="105.50" y="1" width="1" height="5" fill="#9a9a9e"/><rect x="118.35" y="1" width="1" height="3" fill="#9a9a9e"/><rect x="131.20" y="1" width="1" height="3" fill="#9a9a9e"/><rect x="144.05" y="1" width="1" height="3" fill="#9a9a9e"/><rect x="156.90" y="1" width="1" height="3" fill="#9a9a9e"/><rect x="169.75" y="1" width="1" height="7.5" fill="#9a9a9e"/><rect x="182.60" y="1" width="1" height="3" fill="#9a9a9e"/><rect x="195.45" y="1" width="1" height="3" fill="#9a9a9e"/><rect x="208.30" y="1" width="1" height="3" fill="#9a9a9e"/><rect x="221.15" y="1" width="1" height="3" fill="#9a9a9e"/><rect x="234.00" y="1" width="1" height="5" fill="#9a9a9e"/><rect x="246.85" y="1" width="1" height="3" fill="#9a9a9e"/><rect x="259.70" y="1" width="1" height="3" fill="#9a9a9e"/><rect x="272.55" y="1" width="1" height="3" fill="#9a9a9e"/><rect x="285.40" y="1" width="1" height="3" fill="#9a9a9e"/><rect x="298.25" y="1" width="1" height="7.5" fill="#9a9a9e"/><rect x="311.10" y="1" width="1" height="3" fill="#9a9a9e"/><rect x="323.95" y="1" width="1" height="3" fill="#9a9a9e"/><rect x="336.80" y="1" width="1" height="3" fill="#9a9a9e"/><rect x="349.65" y="1" width="1" height="3" fill="#9a9a9e"/><rect x="362.50" y="1" width="1" height="5" fill="#9a9a9e"/><rect x="375.35" y="1" width="1" height="3" fill="#9a9a9e"/><rect x="388.20" y="1" width="1" height="3" fill="#9a9a9e"/><rect x="401.05" y="1" width="1" height="3" fill="#9a9a9e"/><rect x="413.90" y="1" width="1" height="3" fill="#9a9a9e"/><rect x="426.75" y="1" width="1" height="7.5" fill="#9a9a9e"/><rect x="439.60" y="1" width="1" height="3" fill="#9a9a9e"/><rect x="452.45" y="1" width="1" height="3" fill="#9a9a9e"/><rect x="465.30" y="1" width="1" height="3" fill="#9a9a9e"/><rect x="478.15" y="1" width="1" height="3" fill="#9a9a9e"/><rect x="491.00" y="1" width="1" height="5" fill="#9a9a9e"/><rect x="503.85" y="1" width="1" height="3" fill="#9a9a9e"/><rect x="516.70" y="1" width="1" height="3" fill="#9a9a9e"/><rect x="529.55" y="1" width="1" height="3" fill="#9a9a9e"/><rect x="542.40" y="1" width="1" height="3" fill="#9a9a9e"/><rect x="555.25" y="1" width="1" height="7.5" fill="#9a9a9e"/><rect x="568.10" y="1" width="1" height="3" fill="#9a9a9e"/><rect x="580.95" y="1" width="1" height="3" fill="#9a9a9e"/><rect x="593.80" y="1" width="1" height="3" fill="#9a9a9e"/><rect x="606.65" y="1" width="1" height="3" fill="#9a9a9e"/><rect x="619.50" y="1" width="1" height="5" fill="#9a9a9e"/><rect x="632.35" y="1" width="1" height="3" fill="#9a9a9e"/><rect x="645.20" y="1" width="1" height="3" fill="#9a9a9e"/><rect x="658.05" y="1" width="1" height="3" fill="#9a9a9e"/><rect x="670.90" y="1" width="1" height="3" fill="#9a9a9e"/><rect x="683.75" y="1" width="1" height="7.5" fill="#9a9a9e"/><rect x="696.60" y="1" width="1" height="3" fill="#9a9a9e"/><rect x="709.45" y="1" width="1" height="3" fill="#9a9a9e"/><rect x="41.00" y="0" width="1.5" height="22" fill="#e8d890"/></svg><span class="a" style="left:19.8px;top:7px;width:40px;text-align:center;color:#d0d0d0">0</span><span class="a" style="left:148.2px;top:7px;width:40px;text-align:center;color:#d0d0d0">10</span><span class="a" style="left:276.8px;top:7px;width:40px;text-align:center;color:#d0d0d0">20</span><span class="a" style="left:405.2px;top:7px;width:40px;text-align:center;color:#d0d0d0">30</span><span class="a" style="left:533.8px;top:7px;width:40px;text-align:center;color:#d0d0d0">40</span><span class="a" style="left:662.2px;top:7px;width:40px;text-align:center;color:#d0d0d0">50</span></div>
<div class="b" style="left:225px;top:1116px;width:560px;height:15px;padding-left:21px"><svg class="a" style="left:5px;top:2px" width="12" height="12" viewBox="0 0 12 12"><path d="M6 0.3L11.4 3V9L6 11.7L0.6 9V3Z" fill="#f0b400" stroke="#1a1a1a" stroke-width="0.9"/><path d="M0.6 3L6 5.7L11.4 3M6 5.7V11.7" fill="none" stroke="#1a1a1a" stroke-width="0.9"/></svg>AC_GEO_Body_sp_v003:body<svg class="a" style="left:548px;top:5px" width="9" height="6" viewBox="0 0 9 6"><path d="M1 1 L4.5 4.6 L8 1" fill="none" stroke="#e4e4e4" stroke-width="2"/></svg></div>
<div class="b" style="left:787px;top:1116px;width:14px;height:15px;padding:0"><svg class="a" style="left:2px;top:2px" width="11" height="11" viewBox="0 0 11 11"><rect x="0.7" y="0.7" width="9.6" height="9.6" fill="none" stroke="#e4e4e4" stroke-width="1.4"/><path d="M0.7 3.4H10.3" stroke="#e4e4e4" stroke-width="1.6"/><rect x="3" y="5.5" width="2" height="2.4" fill="#e4e4e4"/><rect x="6" y="5.5" width="2" height="2.4" fill="#e4e4e4"/></svg></div>
<div class="b bl" style="left:807px;top:1116px;width:98px;height:15px;padding-left:6px">Properties<span class="a" style="right:6px;top:0;color:#1c2c40">p</span></div>
<div class="b bl" style="left:911px;top:1116px;width:17px;height:15px;padding:0"><svg class="a" style="left:3px;top:3px" width="11" height="10" viewBox="0 0 11 10"><path d="M1 5.5L4 8.5L10 1" fill="none" stroke="#fff" stroke-width="2"/></svg></div>
<div class="b" style="left:931px;top:1116px;width:20px;height:15px">A</div>
<div class="b bl" style="left:225px;top:1135px;width:142px;height:15px;padding-left:5px">Objects<span class="a" style="right:4px;top:0;color:#1c2c40">+O</span></div>
<div class="b" style="left:369px;top:1135px;width:140px;height:15px;padding-left:5px">Bones<span class="a" style="right:4px;top:0;color:#a8a8ac">+B</span></div>
<div class="b" style="left:511px;top:1135px;width:141px;height:15px;padding-left:5px">Lights<span class="a" style="right:4px;top:0;color:#a8a8ac">+L</span></div>
<div class="b" style="left:654px;top:1135px;width:147px;height:15px;padding-left:5px">Cameras<span class="a" style="right:4px;top:0;color:#a8a8ac">+C</span></div>
<div class="fld" style="left:807px;top:1135px;width:98px;height:15px;padding-left:6px">Sel:<span class="a" style="right:7px;top:0">1</span></div>
<div class="b" style="left:911px;top:1135px;width:60px;height:15px;padding-left:5px">Create Key</div>
<div class="fld" style="left:225px;top:1154px;width:680px;height:16px;border-radius:0;padding-left:4px">Drag mouse in view to move selected items. ALT while dragging snaps to items.</div>
<div class="b" style="left:911px;top:1154px;width:180px;height:15px;padding-left:5px">Delete Key<span class="a" style="right:6px;top:0;color:#a8a8ac">del</span></div>
<div class="a" style="left:1913px;top:24px;width:7px;height:1146px;background:#3b3b3d"></div>
<div class="a" style="left:1914px;top:26px;width:8px;height:14px;background:#555559;border-radius:3px"></div>
<div class="a" style="left:1914px;top:44px;width:8px;height:15px;background:#555559;border-radius:3px"></div>
<div class="a" style="left:1914px;top:62px;width:3px;height:1016px;background:#323234"></div>
<div class="a" style="left:1917px;top:62px;width:3px;height:1016px;background:#444447"></div>
<div class="a" style="left:1914px;top:1082px;width:6px;height:8px;background:#59595d"></div>
<div class="a" style="left:1914px;top:1094px;width:6px;height:19px;background:#2e2e30"></div>
<div class="a" style="left:1914px;top:1116px;width:8px;height:15px;background:#59595d;border-radius:3px"></div>
<div class="a" style="left:1914px;top:1135px;width:8px;height:15px;background:#59595d;border-radius:3px"></div>
<div class="b" style="left:1716px;top:1155px;width:28px;height:15px"></div>
<div class="b" style="left:1746px;top:1155px;width:16px;height:15px"></div>
<div class="b" style="left:1765px;top:1155px;width:28px;height:15px"></div>
<div class="b" style="left:1795px;top:1155px;width:17px;height:15px"></div>
<div class="a" style="left:1821px;top:1155px">Step</div>
<div class="fld" style="left:1850px;top:1155px;width:70px;height:15px;padding-left:8px">1</div>
<div class="a" style="left:624px;top:442px;width:310px;height:639px;background:#3b3b3d;box-shadow:0 0 0 1px #2a2a2c, 0 2px 10px rgba(0,0,0,.5)"></div>
<div class="a" style="left:624px;top:442px;width:310px;height:30px;background:#fff"></div>
<svg class="a" style="left:632px;top:448px" width="16" height="16" viewBox="0 0 16 16"><circle cx="8" cy="8" r="8" fill="#0cbcf4"/><path d="M6.6 0.6 L7.4 2.6 C9.6 2.2 11.6 3.2 12.6 5 L14 7.6 L12.6 9.2 L13.6 10.4 L11.6 12.4 L13 13 C12 14.6 10 15.4 8 15.3 C4 15.1 0.8 12 0.8 8 C0.8 5 2.6 2.4 5 1.4 Z" fill="#08202e"/><path d="M9.3 9.8 A3 3 0 1 1 6.4 6.8" fill="none" stroke="#0cbcf4" stroke-width="1.15"/><circle cx="6.5" cy="10" r="1.25" fill="#0cbcf4"/><path d="M9.6 5.4 L12 6.1" stroke="#0cbcf4" stroke-width="0.8"/></svg>
<div class="a" style="left:653px;top:448px;font-size:11.8px;letter-spacing:0;color:#8a8a8a;line-height:17px">Object Properties</div>
<svg class="a" style="left:814px;top:450px" width="12" height="12"><path d="M0.5 6.5H11.5" stroke="#666" stroke-width="1"/></svg><svg class="a" style="left:859px;top:450px" width="12" height="12"><rect x="1.5" y="1.5" width="9" height="9" fill="none" stroke="#cfcfcf" stroke-width="1"/></svg><svg class="a" style="left:905px;top:450px" width="13" height="13"><path d="M1 1L12 12M12 1L1 12" stroke="#555" stroke-width="1"/></svg>
<div class="b" style="left:633px;top:479px;width:142px;height:17px;line-height:19px;padding-left:5px">Clear All Objects</div>
<div class="fld" style="left:782px;top:479px;width:143px;height:17px;line-height:19px;padding-left:6px">Objects in Scene: 15</div>
<div class="a" style="left:625px;top:503px;width:308px;height:1px;background:#2a2a2c"></div><div class="a" style="left:625px;top:504px;width:308px;height:1px;background:#4c4c4e"></div>
<div class="a" style="left:674px;top:511px;width:100px;text-align:right">Current Object</div>
<div class="b" style="left:783px;top:511px;width:142px;height:16px;line-height:17px;padding-left:21px"><svg class="a" style="left:6px;top:2px" width="12" height="12" viewBox="0 0 12 12"><path d="M6 0.3L11.4 3V9L6 11.7L0.6 9V3Z" fill="#f0b400" stroke="#1a1a1a" stroke-width="0.9"/><path d="M0.6 3L6 5.7L11.4 3M6 5.7V11.7" fill="none" stroke="#1a1a1a" stroke-width="0.9"/></svg>AC_GEO_Body_sp_...<svg class="a" style="left:129px;top:5px" width="9" height="6" viewBox="0 0 9 6"><path d="M1 1 L4.5 4.6 L8 1" fill="none" stroke="#e4e4e4" stroke-width="2"/></svg></div>
<div class="a" style="left:877px;top:538px;width:50px;height:17px"><svg class="a" style="left:-1px;top:-1px" width="52" height="18" viewBox="-1 -1 52 18"><path d="M0 17 L0 3 Q0 0 3 0 L31 0 Q34 0 36 2 L50 17 Z" fill="#555559"/><path d="M0 17 L0 3 Q0 0 3 0 L31 0 Q34 0 36 2 L50 17" fill="none" stroke="#2c2c2e" stroke-width="1"/></svg><span class="a" style="left:10px;top:1px;line-height:17px">Inst...</span></div>
<div class="a" style="left:844px;top:538px;width:37px;height:17px"><svg class="a" style="left:-1px;top:-1px" width="39" height="18" viewBox="-1 -1 39 18"><path d="M0 17 L0 3 Q0 0 3 0 L18 0 Q21 0 23 2 L37 17 Z" fill="#555559"/><path d="M0 17 L0 3 Q0 0 3 0 L18 0 Q21 0 23 2 L37 17" fill="none" stroke="#2c2c2e" stroke-width="1"/></svg><span class="a" style="left:10px;top:1px;line-height:17px">FX</span></div>
<div class="a" style="left:806px;top:538px;width:41px;height:17px"><svg class="a" style="left:-1px;top:-1px" width="43" height="18" viewBox="-1 -1 43 18"><path d="M0 17 L0 3 Q0 0 3 0 L22 0 Q25 0 27 2 L41 17 Z" fill="#555559"/><path d="M0 17 L0 3 Q0 0 3 0 L22 0 Q25 0 27 2 L41 17" fill="none" stroke="#2c2c2e" stroke-width="1"/></svg><span class="a" style="left:9px;top:1px;line-height:17px">Glo...</span></div>
<div class="a" style="left:768px;top:538px;width:41px;height:17px"><svg class="a" style="left:-1px;top:-1px" width="43" height="18" viewBox="-1 -1 43 18"><path d="M0 17 L0 3 Q0 0 3 0 L22 0 Q25 0 27 2 L41 17 Z" fill="#555559"/><path d="M0 17 L0 3 Q0 0 3 0 L22 0 Q25 0 27 2 L41 17" fill="none" stroke="#2c2c2e" stroke-width="1"/></svg><span class="a" style="left:9px;top:1px;line-height:17px">Lig...</span></div>
<div class="a" style="left:730px;top:538px;width:41px;height:17px"><svg class="a" style="left:-1px;top:-1px" width="43" height="18" viewBox="-1 -1 43 18"><path d="M0 17 L0 3 Q0 0 3 0 L22 0 Q25 0 27 2 L41 17 Z" fill="#555559"/><path d="M0 17 L0 3 Q0 0 3 0 L22 0 Q25 0 27 2 L41 17" fill="none" stroke="#2c2c2e" stroke-width="1"/></svg><span class="a" style="left:9px;top:1px;line-height:17px">Ap...</span></div>
<div class="a" style="left:692px;top:538px;width:41px;height:17px"><svg class="a" style="left:-1px;top:-1px" width="43" height="18" viewBox="-1 -1 43 18"><path d="M0 17 L0 3 Q0 0 3 0 L22 0 Q25 0 27 2 L41 17 Z" fill="#555559"/><path d="M0 17 L0 3 Q0 0 3 0 L22 0 Q25 0 27 2 L41 17" fill="none" stroke="#2c2c2e" stroke-width="1"/></svg><span class="a" style="left:9px;top:1px;line-height:17px">Re...</span></div>
<div class="a" style="left:633px;top:538px;width:65px;height:17px"><svg class="a" style="left:-1px;top:-1px" width="67" height="18" viewBox="-1 -1 67 18"><path d="M0 17 L0 3 Q0 0 3 0 L46 0 Q49 0 51 2 L65 17 Z" fill="#4a6c92"/><path d="M0 17 L0 3 Q0 0 3 0 L46 0 Q49 0 51 2 L65 17" fill="none" stroke="#2c2c2e" stroke-width="1"/></svg><span class="a" style="left:9px;top:1px;line-height:17px">Primitive</span></div>
<div class="a" style="left:625px;top:555px;width:308px;height:1px;background:#2a2a2c"></div><div class="a" style="left:625px;top:556px;width:308px;height:1px;background:#4c4c4e"></div>
<div class="a" style="left:698px;top:572px;width:59px;height:17px"><svg class="a" style="left:-1px;top:-1px" width="61" height="18" viewBox="-1 -1 61 18"><path d="M0 17 L0 3 Q0 0 3 0 L40 0 Q43 0 45 2 L59 17 Z" fill="#555559"/><path d="M0 17 L0 3 Q0 0 3 0 L40 0 Q43 0 45 2 L59 17" fill="none" stroke="#2c2c2e" stroke-width="1"/></svg><span class="a" style="left:9px;top:1px;line-height:17px">Edges</span></div>
<div class="a" style="left:633px;top:572px;width:69px;height:17px"><svg class="a" style="left:-1px;top:-1px" width="71" height="18" viewBox="-1 -1 71 18"><path d="M0 17 L0 3 Q0 0 3 0 L50 0 Q53 0 55 2 L69 17 Z" fill="#4a6c92"/><path d="M0 17 L0 3 Q0 0 3 0 L50 0 Q53 0 55 2 L69 17" fill="none" stroke="#2c2c2e" stroke-width="1"/></svg><span class="a" style="left:9px;top:1px;line-height:17px">Geometry</span></div>
<div class="a" style="left:625px;top:589px;width:308px;height:1px;background:#2a2a2c"></div><div class="a" style="left:625px;top:590px;width:308px;height:1px;background:#4c4c4e"></div>
<div class="fld" style="left:633px;top:599px;width:292px;height:60px;border-radius:0"></div>
<div class="a" style="left:638px;top:604px">File : ...G21/fg21c301/lw/objects/AC_GEO_Body_sp_v003</div>
<div class="a" style="left:638px;top:622px">Points : 297067</div><div class="a" style="left:788px;top:622px">Polygons : 583488</div>
<div class="a" style="left:638px;top:640px">SubPatches : 4668</div><div class="a" style="left:788px;top:640px">Metaballs : 0</div>
<div class="a" style="left:634px;top:664px">Object Replacement</div>
<div class="b" style="left:633px;top:685px;width:209px;height:17px;line-height:19px">(none)<svg class="a" style="left:197px;top:6px" width="9" height="6" viewBox="0 0 9 6"><path d="M1 1 L4.5 4.6 L8 1" fill="none" stroke="#e4e4e4" stroke-width="2"/></svg></div>
<div class="b" style="left:847px;top:685px;width:56px;height:17px;line-height:19px">Properties</div>
<div class="b" style="left:909px;top:685px;width:16px;height:17px;padding:0"><svg class="a" style="left:3px;top:2px" width="11" height="12" viewBox="0 0 11 12"><rect x="1" y="2.2" width="9" height="9" rx="1" fill="none" stroke="#e4e4e4" stroke-width="1.5"/><rect x="3.2" y="0.6" width="4.6" height="3.2" rx="0.8" fill="#e4e4e4"/></svg></div>
<div class="a" style="left:625px;top:708px;width:308px;height:1px;background:#2a2a2c"></div><div class="a" style="left:625px;top:709px;width:308px;height:1px;background:#4c4c4e"></div>
<div class="b" style="left:633px;top:716px;width:209px;height:17px;line-height:19px">Add Modifier<svg class="a" style="left:197px;top:6px" width="9" height="6" viewBox="0 0 9 6"><path d="M1 1 L4.5 4.6 L8 1" fill="none" stroke="#e4e4e4" stroke-width="2"/></svg></div>
<div class="b" style="left:847px;top:716px;width:56px;height:17px;line-height:19px">Edit<svg class="a" style="left:44px;top:6px" width="9" height="6" viewBox="0 0 9 6"><path d="M1 1 L4.5 4.6 L8 1" fill="none" stroke="#e4e4e4" stroke-width="2"/></svg></div>
<div class="b" style="left:909px;top:716px;width:16px;height:17px;padding:0"><svg class="a" style="left:3px;top:2px" width="11" height="12" viewBox="0 0 11 12"><rect x="1" y="2.2" width="9" height="9" rx="1" fill="none" stroke="#e4e4e4" stroke-width="1.5"/><rect x="3.2" y="0.6" width="4.6" height="3.2" rx="0.8" fill="#e4e4e4"/></svg></div>
<div class="a" style="left:633px;top:738px;width:270px;height:191px;background:#6f6f71;border-radius:3px;box-shadow:0 0 0 1px #2a2a2c;overflow:hidden"><div class="a" style="left:0;top:0;width:270px;height:16px;background:#3a3a3c"></div><span class="a" style="left:7px;top:0">On</span><span class="a" style="left:49px;top:0">Name</span><div class="a" style="left:0;top:16px;width:270px;height:16px;border-bottom:1px solid #68686a;color:#101010"><span class="a" style="left:49px;top:0">Morphing</span></div><div class="a" style="left:0;top:32px;width:270px;height:16px;border-bottom:1px solid #68686a;color:#101010"><span class="a" style="left:49px;top:0">Bones</span></div><div class="a" style="left:0;top:48px;width:270px;height:16px;border-bottom:1px solid #68686a;color:#101010"><span class="a" style="left:49px;top:0">PC2_Pointer 73 Frames Start 0.0s</span><svg class="a" style="left:11px;top:4px" width="9" height="9" viewBox="0 0 9 9"><path d="M0.8 4.8L3.2 7.6L8.2 0.8" fill="none" stroke="#101010" stroke-width="1.6"/></svg></div><div class="a" style="left:0;top:64px;width:270px;height:16px;border-bottom:1px solid #68686a;color:#101010"><span class="a" style="left:49px;top:0">Subdivision</span><svg class="a" style="left:11px;top:4px" width="9" height="9" viewBox="0 0 9 9"><path d="M0.8 4.8L3.2 7.6L8.2 0.8" fill="none" stroke="#101010" stroke-width="1.6"/></svg></div><div class="a" style="left:0;top:80px;width:270px;height:16px;border-bottom:1px solid #68686a;color:#101010"><span class="a" style="left:49px;top:0">Nodal Displacement</span></div><div class="a" style="left:0;top:96px;width:270px;height:16px;border-bottom:1px solid #68686a;color:#101010"><span class="a" style="left:49px;top:0">Surface Displacement</span></div><div class="a" style="left:0;top:112px;width:270px;height:16px;border-bottom:1px solid #68686a;color:#101010"><span class="a" style="left:49px;top:0">Displacement Map</span></div><div class="a" style="left:0;top:128px;width:270px;height:16px;border-bottom:1px solid #68686a;color:#101010"><span class="a" style="left:49px;top:0">Morph Mixer (2 endomorphs)</span></div><div class="a" style="left:0;top:144px;width:270px;height:16px;border-bottom:1px solid #68686a;background:#929294;color:#101010"><span class="a" style="left:49px;top:0">Inertia_plus (1.00) 07/18</span><svg class="a" style="left:11px;top:4px" width="9" height="9" viewBox="0 0 9 9"><path d="M0.8 4.8L3.2 7.6L8.2 0.8" fill="none" stroke="#101010" stroke-width="1.6"/></svg></div><div class="a" style="left:31px;top:0;width:1px;height:191px;background:#4a4a4c"></div></div>
<div class="b" style="left:908px;top:738px;width:17px;height:191px;padding:0"><div class="a" style="left:2px;top:87px;width:13px;height:1px;background:#b0b0b2"></div><div class="a" style="left:2px;top:91px;width:13px;height:1px;background:#b0b0b2"></div><div class="a" style="left:2px;top:95px;width:13px;height:1px;background:#b0b0b2"></div><div class="a" style="left:2px;top:99px;width:13px;height:1px;background:#b0b0b2"></div><div class="a" style="left:2px;top:103px;width:13px;height:1px;background:#b0b0b2"></div></div>
<div class="a" style="left:633px;top:934px;width:293px;height:139px;border:1px solid #2a2a2c;box-shadow:inset -1px -1px 0 #4c4c4e"></div>
<div class="a" style="left:634px;top:935px;width:291px;height:16px;background:#2d2d2f;padding-left:4px">Inertia_plus</div>
<div class="b" style="left:642px;top:958px;width:133px;height:17px;line-height:19px;padding-left:5px">Edit Node</div>
<div class="b bl" style="left:783px;top:958px;width:20px;height:17px;padding:0"><svg class="a" style="left:4px;top:3px" width="12" height="11" viewBox="0 0 12 11"><path d="M1.2 5.8L4.6 9.2L10.8 1.2" fill="none" stroke="#fff" stroke-width="2"/></svg></div>
<div class="a" style="left:654px;top:981px;width:120px;text-align:right;color:#8c8c8e">Lag Rate (s/m)</div>
<div class="fld" style="left:783px;top:980px;width:112px;height:17px;line-height:19px;padding-left:6px;color:#c8c8c8">0.0</div>
<div class="fld" style="left:899px;top:980px;width:17px;height:17px;background:#38383a"><svg class="a" style="left:3px;top:5px" width="11" height="8" viewBox="0 0 11 8"><path d="M4 1L1.2 4L4 7M7 1L9.8 4L7 7" fill="none" stroke="#6a6a6c" stroke-width="1.4"/></svg></div>
<div class="a" style="left:654px;top:1003px;width:120px;text-align:right">Inertia Pivot Object</div>
<div class="b" style="left:783px;top:1002px;width:133px;height:17px;line-height:19px">_pivot<svg class="a" style="left:121px;top:6px" width="9" height="6" viewBox="0 0 9 6"><path d="M1 1 L4.5 4.6 L8 1" fill="none" stroke="#e4e4e4" stroke-width="2"/></svg></div>
<div class="b" style="left:783px;top:1024px;width:89px;height:17px;line-height:19px;padding-left:25px"><div class="a" style="left:0;top:0;width:21px;height:17px;background:#505054"></div>Local Pivot</div>
<div class="a" style="left:654px;top:1047px;width:120px;text-align:right">Weight Map</div>
<div class="b" style="left:783px;top:1046px;width:133px;height:17px;line-height:19px">(none)<svg class="a" style="left:121px;top:6px" width="9" height="6" viewBox="0 0 9 6"><path d="M1 1 L4.5 4.6 L8 1" fill="none" stroke="#e4e4e4" stroke-width="2"/></svg></div>
<div class="a" style="left:936px;top:1px;width:977px;height:1162px;background:#3b3b3d;box-shadow:0 0 0 1px #2a2a2c, 0 3px 12px rgba(0,0,0,.55)"></div>
<div class="a" style="left:936px;top:1px;width:977px;height:30px;background:#fff"></div>
<svg class="a" style="left:944px;top:7px" width="16" height="16" viewBox="0 0 16 16"><circle cx="8" cy="8" r="8" fill="#0cbcf4"/><path d="M6.6 0.6 L7.4 2.6 C9.6 2.2 11.6 3.2 12.6 5 L14 7.6 L12.6 9.2 L13.6 10.4 L11.6 12.4 L13 13 C12 14.6 10 15.4 8 15.3 C4 15.1 0.8 12 0.8 8 C0.8 5 2.6 2.4 5 1.4 Z" fill="#08202e"/><path d="M9.3 9.8 A3 3 0 1 1 6.4 6.8" fill="none" stroke="#0cbcf4" stroke-width="1.15"/><circle cx="6.5" cy="10" r="1.25" fill="#0cbcf4"/><path d="M9.6 5.4 L12 6.1" stroke="#0cbcf4" stroke-width="0.8"/></svg>
<div class="a" style="left:965px;top:7px;font-size:11.8px;letter-spacing:0;color:#8a8a8a;line-height:17px">Node Editor - Inertia_plus</div>
<svg class="a" style="left:1793px;top:9px" width="12" height="12"><path d="M0.5 6.5H11.5" stroke="#666" stroke-width="1"/></svg><svg class="a" style="left:1838px;top:9px" width="12" height="12"><rect x="1.5" y="1.5" width="9" height="9" fill="none" stroke="#666" stroke-width="1"/></svg><svg class="a" style="left:1884px;top:9px" width="13" height="13"><path d="M1 1L12 12M12 1L1 12" stroke="#555" stroke-width="1"/></svg>
<div class="b" style="left:942px;top:37px;width:78px;height:17px;line-height:19px">Add Node<svg class="a" style="left:66px;top:6px" width="9" height="6" viewBox="0 0 9 6"><path d="M1 1 L4.5 4.6 L8 1" fill="none" stroke="#e4e4e4" stroke-width="2"/></svg></div>
<div class="b" style="left:1027px;top:37px;width:78px;height:17px;line-height:19px">Edit<svg class="a" style="left:66px;top:6px" width="9" height="6" viewBox="0 0 9 6"><path d="M1 1 L4.5 4.6 L8 1" fill="none" stroke="#e4e4e4" stroke-width="2"/></svg></div>
<div class="b" style="left:1112px;top:37px;width:35px;height:17px;line-height:19px;padding-left:5px">Undo</div>
<div class="b" style="left:1153px;top:37px;width:36px;height:17px;line-height:19px;padding-left:5px">Redo</div>
<div class="b" style="left:1196px;top:37px;width:37px;height:17px;line-height:19px;padding-left:5px">Purge</div>
<div class="b" style="left:1563px;top:37px;width:78px;height:17px;line-height:19px;padding-left:5px">Tidy Nodes</div>
<div class="b" style="left:1648px;top:37px;width:78px;height:17px;line-height:19px;padding-left:5px">Update</div>
<div class="b" style="left:1733px;top:37px;width:78px;height:17px;line-height:19px;padding-left:5px">Options</div>
<div class="b" style="left:1818px;top:37px;width:23px;height:17px;padding:0"><svg class="a" style="left:5px;top:2px" width="13" height="13" viewBox="0 0 13 13"><path d="M7.5 1L12 5.5L10.6 6L8.8 8.6L8.2 11L2 4.8L4.4 4.2L7 2.4Z" fill="#e4e4e4"/><path d="M4.8 8.2L1 12" stroke="#e4e4e4" stroke-width="1.4"/></svg></div>
<div class="b" style="left:1849px;top:37px;width:17px;height:17px;padding:0"><svg class="a" style="left:2px;top:2px" width="13" height="13" viewBox="0 0 12 12"><path d="M6 1V11M1 6H11" stroke="#e4e4e4" stroke-width="1.3"/><path d="M6 0L8.2 2.6H3.8ZM6 12L8.2 9.4H3.8ZM0 6L2.6 3.8V8.2ZM12 6L9.4 3.8V8.2Z" fill="#e4e4e4"/></svg></div>
<div class="b" style="left:1867px;top:37px;width:17px;height:17px;padding:0"><svg class="a" style="left:2px;top:2px" width="13" height="13" viewBox="0 0 12 12"><circle cx="5" cy="5" r="3.6" fill="none" stroke="#e4e4e4" stroke-width="1.5"/><path d="M7.8 7.8L11.4 11.4" stroke="#e4e4e4" stroke-width="1.8"/></svg></div>
<div class="b" style="left:1890px;top:37px;width:17px;height:17px;padding:0"><svg class="a" style="left:5px;top:4px" width="7" height="10" viewBox="0 0 7 10"><path d="M1.2 1L5.4 5L1.2 9" fill="none" stroke="#e4e4e4" stroke-width="2"/></svg></div>
<div class="a" style="left:1000px;top:61px;width:72px;height:17px"><svg class="a" style="left:-1px;top:-1px" width="74" height="18" viewBox="-1 -1 74 18"><path d="M0 17 L0 3 Q0 0 3 0 L50 0 Q53 0 55 2 L72 17 Z" fill="#555559"/><path d="M0 17 L0 3 Q0 0 3 0 L50 0 Q53 0 55 2 L72 17" fill="none" stroke="#2c2c2e" stroke-width="1"/></svg><span class="a" style="left:2px;top:1px;line-height:17px">Node Flow</span></div>
<div class="a" style="left:942px;top:61px;width:58px;height:17px"><svg class="a" style="left:-1px;top:-1px" width="60" height="18" viewBox="-1 -1 60 18"><path d="M0 17 L0 3 Q0 0 3 0 L37 0 Q40 0 42 2 L58 17 Z" fill="#4a6c92"/><path d="M0 17 L0 3 Q0 0 3 0 L37 0 Q40 0 42 2 L58 17" fill="none" stroke="#2c2c2e" stroke-width="1"/></svg><span class="a" style="left:9px;top:1px;line-height:17px">Nodes</span></div>
<div class="fld" style="left:942px;top:85px;width:139px;height:17px;background:#313133"></div>
<div class="b" style="left:1088px;top:85px;width:17px;height:17px;padding:0"><svg class="a" style="left:4px;top:6px" width="9" height="6" viewBox="0 0 9 6"><path d="M1 1 L4.5 4.6 L8 1" fill="none" stroke="#e4e4e4" stroke-width="2"/></svg></div>
<div class="b" style="left:942px;top:109px;width:163px;height:17px;line-height:19px;padding-left:5px">Add Selected Node(s)</div>
<div class="a" style="left:942px;top:133px;width:139px;height:1023px;background:#6f6f71;border-radius:3px;box-shadow:0 0 0 1px #2a2a2c;overflow:hidden"><div class="a" style="left:0;top:0;width:139px;height:16px;background:#3c3c3e"><span class="a" style="left:17px;top:0">Nodes</span></div><div class="lr" style="top:15px"><svg class="a" style="left:5px;top:3px" width="6" height="9" viewBox="0 0 6 9"><path d="M1 1L4.6 4.5L1 8" fill="none" stroke="#0a0a0a" stroke-width="1.7"/></svg><span class="a" style="left:17px;top:0">2D Textures</span></div><div class="lr" style="top:31px"><svg class="a" style="left:5px;top:3px" width="6" height="9" viewBox="0 0 6 9"><path d="M1 1L4.6 4.5L1 8" fill="none" stroke="#0a0a0a" stroke-width="1.7"/></svg><span class="a" style="left:17px;top:0">3D Textures</span></div><div class="lr" style="top:47px"><svg class="a" style="left:5px;top:3px" width="6" height="9" viewBox="0 0 6 9"><path d="M1 1L4.6 4.5L1 8" fill="none" stroke="#0a0a0a" stroke-width="1.7"/></svg><span class="a" style="left:17px;top:0">Additional</span></div><div class="lr" style="top:63px"><svg class="a" style="left:5px;top:3px" width="6" height="9" viewBox="0 0 6 9"><path d="M1 1L4.6 4.5L1 8" fill="none" stroke="#0a0a0a" stroke-width="1.7"/></svg><span class="a" style="left:17px;top:0">Constant</span></div><div class="lr" style="top:79px"><svg class="a" style="left:5px;top:3px" width="6" height="9" viewBox="0 0 6 9"><path d="M1 1L4.6 4.5L1 8" fill="none" stroke="#0a0a0a" stroke-width="1.7"/></svg><span class="a" style="left:17px;top:0">DP Filter</span></div><div class="lr" style="top:95px"><svg class="a" style="left:5px;top:3px" width="6" height="9" viewBox="0 0 6 9"><path d="M1 1L4.6 4.5L1 8" fill="none" stroke="#0a0a0a" stroke-width="1.7"/></svg><span class="a" style="left:17px;top:0">DP Kit</span></div><div class="lr" style="top:111px"><svg class="a" style="left:5px;top:3px" width="6" height="9" viewBox="0 0 6 9"><path d="M1 1L4.6 4.5L1 8" fill="none" stroke="#0a0a0a" stroke-width="1.7"/></svg><span class="a" style="left:17px;top:0">Displacement</span></div><div class="lr" style="top:127px"><svg class="a" style="left:5px;top:3px" width="6" height="9" viewBox="0 0 6 9"><path d="M1 1L4.6 4.5L1 8" fill="none" stroke="#0a0a0a" stroke-width="1.7"/></svg><span class="a" style="left:17px;top:0">Distance Tools</span></div><div class="lr" style="top:143px"><svg class="a" style="left:5px;top:3px" width="6" height="9" viewBox="0 0 6 9"><path d="M1 1L4.6 4.5L1 8" fill="none" stroke="#0a0a0a" stroke-width="1.7"/></svg><span class="a" style="left:17px;top:0">FiberFX</span></div><div class="lr" style="top:159px"><svg class="a" style="left:5px;top:3px" width="6" height="9" viewBox="0 0 6 9"><path d="M1 1L4.6 4.5L1 8" fill="none" stroke="#0a0a0a" stroke-width="1.7"/></svg><span class="a" style="left:17px;top:0">Flocking</span></div><div class="lr" style="top:175px"><svg class="a" style="left:5px;top:3px" width="6" height="9" viewBox="0 0 6 9"><path d="M1 1L4.6 4.5L1 8" fill="none" stroke="#0a0a0a" stroke-width="1.7"/></svg><span class="a" style="left:17px;top:0">Fresnel Functions</span></div><div class="lr" style="top:191px"><svg class="a" style="left:5px;top:3px" width="6" height="9" viewBox="0 0 6 9"><path d="M1 1L4.6 4.5L1 8" fill="none" stroke="#0a0a0a" stroke-width="1.7"/></svg><span class="a" style="left:17px;top:0">Functions</span></div><div class="lr" style="top:207px"><svg class="a" style="left:5px;top:3px" width="6" height="9" viewBox="0 0 6 9"><path d="M1 1L4.6 4.5L1 8" fill="none" stroke="#0a0a0a" stroke-width="1.7"/></svg><span class="a" style="left:17px;top:0">Gradient</span></div><div class="lr" style="top:223px"><svg class="a" style="left:5px;top:3px" width="6" height="9" viewBox="0 0 6 9"><path d="M1 1L4.6 4.5L1 8" fill="none" stroke="#0a0a0a" stroke-width="1.7"/></svg><span class="a" style="left:17px;top:0">Item Info</span></div><div class="lr" style="top:239px"><svg class="a" style="left:5px;top:3px" width="6" height="9" viewBox="0 0 6 9"><path d="M1 1L4.6 4.5L1 8" fill="none" stroke="#0a0a0a" stroke-width="1.7"/></svg><span class="a" style="left:17px;top:0">Layers</span></div><div class="lr" style="top:255px"><svg class="a" style="left:5px;top:3px" width="6" height="9" viewBox="0 0 6 9"><path d="M1 1L4.6 4.5L1 8" fill="none" stroke="#0a0a0a" stroke-width="1.7"/></svg><span class="a" style="left:17px;top:0">Material Components</span></div><div class="lr" style="top:271px"><svg class="a" style="left:5px;top:3px" width="6" height="9" viewBox="0 0 6 9"><path d="M1 1L4.6 4.5L1 8" fill="none" stroke="#0a0a0a" stroke-width="1.7"/></svg><span class="a" style="left:17px;top:0">Material Integrators</span></div><div class="lr" style="top:287px"><svg class="a" style="left:5px;top:3px" width="6" height="9" viewBox="0 0 6 9"><path d="M1 1L4.6 4.5L1 8" fill="none" stroke="#0a0a0a" stroke-width="1.7"/></svg><span class="a" style="left:17px;top:0">Material Tools</span></div><div class="lr" style="top:303px"><svg class="a" style="left:5px;top:3px" width="6" height="9" viewBox="0 0 6 9"><path d="M1 1L4.6 4.5L1 8" fill="none" stroke="#0a0a0a" stroke-width="1.7"/></svg><span class="a" style="left:17px;top:0">Materials</span></div><div class="lr" style="top:319px"><svg class="a" style="left:5px;top:3px" width="6" height="9" viewBox="0 0 6 9"><path d="M1 1L4.6 4.5L1 8" fill="none" stroke="#0a0a0a" stroke-width="1.7"/></svg><span class="a" style="left:17px;top:0">Math</span></div><div class="lr" style="top:335px"><svg class="a" style="left:5px;top:3px" width="6" height="9" viewBox="0 0 6 9"><path d="M1 1L4.6 4.5L1 8" fill="none" stroke="#0a0a0a" stroke-width="1.7"/></svg><span class="a" style="left:17px;top:0">OpenVDB</span></div><div class="lr" style="top:351px"><svg class="a" style="left:5px;top:3px" width="6" height="9" viewBox="0 0 6 9"><path d="M1 1L4.6 4.5L1 8" fill="none" stroke="#0a0a0a" stroke-width="1.7"/></svg><span class="a" style="left:17px;top:0">Projections</span></div><div class="lr" style="top:367px"><svg class="a" style="left:5px;top:3px" width="6" height="9" viewBox="0 0 6 9"><path d="M1 1L4.6 4.5L1 8" fill="none" stroke="#0a0a0a" stroke-width="1.7"/></svg><span class="a" style="left:17px;top:0">RayTrace</span></div><div class="lr" style="top:383px"><svg class="a" style="left:5px;top:3px" width="6" height="9" viewBox="0 0 6 9"><path d="M1 1L4.6 4.5L1 8" fill="none" stroke="#0a0a0a" stroke-width="1.7"/></svg><span class="a" style="left:17px;top:0">Spot</span></div><div class="lr" style="top:399px"><svg class="a" style="left:5px;top:3px" width="6" height="9" viewBox="0 0 6 9"><path d="M1 1L4.6 4.5L1 8" fill="none" stroke="#0a0a0a" stroke-width="1.7"/></svg><span class="a" style="left:17px;top:0">Tools</span></div><div class="lr" style="top:415px"><svg class="a" style="left:5px;top:3px" width="6" height="9" viewBox="0 0 6 9"><path d="M1 1L4.6 4.5L1 8" fill="none" stroke="#0a0a0a" stroke-width="1.7"/></svg><span class="a" style="left:17px;top:0">Vertex Map</span></div><div class="lr" style="top:431px"><svg class="a" style="left:5px;top:3px" width="6" height="9" viewBox="0 0 6 9"><path d="M1 1L4.6 4.5L1 8" fill="none" stroke="#0a0a0a" stroke-width="1.7"/></svg><span class="a" style="left:17px;top:0">Volume Components</span></div><div class="lr" style="top:447px"></div></div>
<div class="a" style="left:1088px;top:133px;width:17px;height:1023px;background:#4b4b4f;border-radius:3px;box-shadow:0 0 0 1px #2a2a2c"><div class="a" style="left:2px;top:503px;width:13px;height:1px;background:#a8a8aa"></div><div class="a" style="left:2px;top:507px;width:13px;height:1px;background:#a8a8aa"></div><div class="a" style="left:2px;top:511px;width:13px;height:1px;background:#a8a8aa"></div><div class="a" style="left:2px;top:515px;width:13px;height:1px;background:#a8a8aa"></div><div class="a" style="left:2px;top:519px;width:13px;height:1px;background:#a8a8aa"></div></div>
<div class="a" style="left:1112px;top:60px;width:795px;height:1074px;background-color:#4a4c50;background-image:linear-gradient(90deg,#45474b 1px,transparent 1px),linear-gradient(#45474b 1px,transparent 1px);background-size:16px 16px;background-position:1px 2px;box-shadow:0 0 0 1px #2a2a2c, 1px 1px 0 1px #555759;overflow:hidden">
<svg class="a" style="left:0;top:0" width="795" height="1074" viewBox="1112 60 795 1074" fill="none" stroke-width="1.6" stroke-linecap="round"><defs><linearGradient id="wg14" gradientUnits="userSpaceOnUse" x1="1858" y1="265.5" x2="1721" y2="537.5"><stop offset="0" stop-color="#2cf26c"/><stop offset="1" stop-color="#f8501c"/></linearGradient><linearGradient id="wg15" gradientUnits="userSpaceOnUse" x1="1853" y1="521.5" x2="1721" y2="790.5"><stop offset="0" stop-color="#f8501c"/><stop offset="1" stop-color="#2cf26c"/></linearGradient></defs><path d="M1228.0 118.5 C1306.0 118.5 1058.0 214.5 1136.0 214.5" stroke="#2ef06e"/><path d="M1145.0 214.5L1133.5 209.8L1136.5 214.5L1133.5 219.2Z" fill="#2ef06e" stroke="none"/><path d="M1228.0 118.5 C1306.0 118.5 1058.0 502.5 1136.0 502.5" stroke="#2ef06e"/><path d="M1145.0 502.5L1133.5 497.8L1136.5 502.5L1133.5 507.2Z" fill="#2ef06e" stroke="none"/><path d="M1228.0 118.5 C1306.0 118.5 1058.0 790.5 1136.0 790.5" stroke="#2ef06e"/><path d="M1145.0 790.5L1133.5 785.8L1136.5 790.5L1133.5 795.2Z" fill="#2ef06e" stroke="none"/><path d="M1284.0 278.5 C1431.4 278.5 1404.6 294.5 1552.0 294.5" stroke="#3355ff"/><path d="M1561.0 294.5L1549.5 289.8L1552.5 294.5L1549.5 299.2Z" fill="#3355ff" stroke="none"/><path d="M1496.0 185.5 C1526.8 185.5 1521.2 310.5 1552.0 310.5" stroke="#3355ff"/><path d="M1561.0 310.5L1549.5 305.8L1552.5 310.5L1549.5 315.2Z" fill="#3355ff" stroke="none"/><path d="M1284.0 470.5 C1334.6 470.5 1325.4 518.5 1376.0 518.5" stroke="#3355ff"/><path d="M1385.0 518.5L1373.5 513.8L1376.5 518.5L1373.5 523.2Z" fill="#3355ff" stroke="none"/><path d="M1284.0 470.5 C1334.6 470.5 1325.4 566.5 1376.0 566.5" stroke="#3355ff"/><path d="M1385.0 566.5L1373.5 561.8L1376.5 566.5L1373.5 571.2Z" fill="#3355ff" stroke="none"/><path d="M1284.0 758.5 C1334.6 758.5 1325.4 918.5 1376.0 918.5" stroke="#3355ff"/><path d="M1385.0 918.5L1373.5 913.8L1376.5 918.5L1373.5 923.2Z" fill="#3355ff" stroke="none"/><path d="M1284.0 758.5 C1334.6 758.5 1325.4 966.5 1376.0 966.5" stroke="#3355ff"/><path d="M1385.0 966.5L1373.5 961.8L1376.5 966.5L1373.5 971.2Z" fill="#3355ff" stroke="none"/><path d="M1661.0 294.5 C1689.0 294.5 1684.0 265.5 1712.0 265.5" stroke="#2ef06e"/><path d="M1721.0 265.5L1709.5 260.8L1712.5 265.5L1709.5 270.2Z" fill="#2ef06e" stroke="none"/><path d="M1493.0 518.5 C1613.5 518.5 1591.5 313.5 1712.0 313.5" stroke="#2ef06e"/><path d="M1721.0 313.5L1709.5 308.8L1712.5 313.5L1709.5 318.2Z" fill="#2ef06e" stroke="none"/><path d="M1493.0 518.5 C1525.5 518.5 1519.5 550.5 1552.0 550.5" stroke="#2ef06e"/><path d="M1561.0 550.5L1549.5 545.8L1552.5 550.5L1549.5 555.2Z" fill="#2ef06e" stroke="none"/><path d="M1645.0 550.5 C1681.8 550.5 1675.2 361.5 1712.0 361.5" stroke="#2ef06e"/><path d="M1721.0 361.5L1709.5 356.8L1712.5 361.5L1709.5 366.2Z" fill="#2ef06e" stroke="none"/><path d="M1493.0 566.5 C1613.5 566.5 1591.5 806.5 1712.0 806.5" stroke="#2ef06e"/><path d="M1721.0 806.5L1709.5 801.8L1712.5 806.5L1709.5 811.2Z" fill="#2ef06e" stroke="none"/><path d="M1858.0 265.5 C1963.0 265.5 1607.0 537.5 1712.0 537.5" stroke="url(#wg14)"/><path d="M1721.0 537.5L1709.5 532.8L1712.5 537.5L1709.5 542.2Z" fill="#f8501c" stroke="none"/><path d="M1853.0 521.5 C1955.5 521.5 1609.5 790.5 1712.0 790.5" stroke="url(#wg15)"/><path d="M1721.0 790.5L1709.5 785.8L1712.5 790.5L1709.5 795.2Z" fill="#2cf26c" stroke="none"/><path d="M1806.0 790.5 C1885.0 790.5 1633.0 886.5 1712.0 886.5" stroke="#2ef06e"/><path d="M1721.0 886.5L1709.5 881.8L1712.5 886.5L1709.5 891.2Z" fill="#2ef06e" stroke="none"/><path d="M1843.0 886.5 C1940.5 886.5 1614.5 1046.5 1712.0 1046.5" stroke="#2ef06e"/><path d="M1721.0 1046.5L1709.5 1041.8L1712.5 1046.5L1709.5 1051.2Z" fill="#2ef06e" stroke="none"/><path d="M1493.0 918.5 C1613.5 918.5 1591.5 934.5 1712.0 934.5" stroke="#2ef06e"/><path d="M1721.0 934.5L1709.5 929.8L1712.5 934.5L1709.5 939.2Z" fill="#2ef06e" stroke="none"/><path d="M1493.0 966.5 C1613.5 966.5 1591.5 950.5 1712.0 950.5" stroke="#2ef06e"/><path d="M1721.0 950.5L1709.5 945.8L1712.5 950.5L1709.5 955.2Z" fill="#2ef06e" stroke="none"/></svg>
<div class="a" style="left:-1112px;top:-60px;width:0;height:0">
<div class="nd" style="left:1145px;top:94px;width:83px;height:32px;background:#6a5b52;border-color:#0c0c0c"><div class="nh" style="background:#65210a">zero (1)</div><svg class="a" style="left:70px;top:3px" width="10" height="7" viewBox="0 0 9 6"><path d="M1 1 L4.5 4.6 L8 1" fill="none" stroke="#0a0a0a" stroke-width="2.2"/></svg><div class="nr" style="top:15px"></div><i class="pt" style="left:71.0px;top:20.0px;background:#2cf26c"></i><span class="a" style="right:16px;top:15px">Scalar</span></div>
<div class="nd" style="left:1145px;top:158px;width:139px;height:256px;background:#6b6c6f;border-color:#0c0c0c"><div class="nh" style="background:#8691a1">pivot_item (1)</div><svg class="a" style="left:126px;top:3px" width="10" height="7" viewBox="0 0 9 6"><path d="M1 1 L4.5 4.6 L8 1" fill="none" stroke="#0a0a0a" stroke-width="2.2"/></svg><div class="nr" style="top:15px"></div><i class="pt" style="left:3.0px;top:20.0px;background:#fb28f0"></i><span class="a" style="left:14px;top:15px">Item</span><i class="pt" style="left:127.0px;top:20.0px;background:#3254ff"></i><span class="a" style="right:16px;top:15px">Position</span><div class="nr" style="top:31px"></div><i class="pt" style="left:3.0px;top:36.0px;background:#fb28f0"></i><span class="a" style="left:14px;top:31px">ID</span><i class="pt" style="left:127.0px;top:36.0px;background:#3254ff"></i><span class="a" style="right:16px;top:31px">Rotation</span><div class="nr" style="top:47px"></div><i class="pt" style="left:3.0px;top:52.0px;background:#2cf26c"></i><span class="a" style="left:14px;top:47px">Time</span><i class="pt" style="left:127.0px;top:52.0px;background:#3254ff"></i><span class="a" style="right:16px;top:47px">Scaling</span><div class="nr" style="top:63px"></div><i class="pt" style="left:127.0px;top:68.0px;background:#3254ff"></i><span class="a" style="right:16px;top:63px">Right</span><div class="nr" style="top:79px"></div><i class="pt" style="left:127.0px;top:84.0px;background:#3254ff"></i><span class="a" style="right:16px;top:79px">Up</span><div class="nr" style="top:95px"></div><i class="pt" style="left:127.0px;top:100.0px;background:#3254ff"></i><span class="a" style="right:16px;top:95px">Forward</span><div class="nr" style="top:111px"></div><i class="pt" style="left:127.0px;top:116.0px;background:#3254ff"></i><span class="a" style="right:16px;top:111px">World Position</span><div class="nr" style="top:127px"></div><i class="pt" style="left:127.0px;top:132.0px;background:#3254ff"></i><span class="a" style="right:16px;top:127px">World Right</span><div class="nr" style="top:143px"></div><i class="pt" style="left:127.0px;top:148.0px;background:#3254ff"></i><span class="a" style="right:16px;top:143px">World Up</span><div class="nr" style="top:159px"></div><i class="pt" style="left:127.0px;top:164.0px;background:#3254ff"></i><span class="a" style="right:16px;top:159px">World Forward</span><div class="nr" style="top:175px"></div><i class="pt" style="left:127.0px;top:180.0px;background:#3254ff"></i><span class="a" style="right:16px;top:175px">Pivot</span><div class="nr" style="top:191px"></div><i class="pt" style="left:127.0px;top:196.0px;background:#3254ff"></i><span class="a" style="right:16px;top:191px">Pivot Rotation</span><div class="nr" style="top:207px"></div><i class="pt" style="left:127.0px;top:212.0px;background:#fb28f0"></i><span class="a" style="right:16px;top:207px">Item Type</span><div class="nr" style="top:223px"></div><i class="pt" style="left:127.0px;top:228.0px;background:#fb28f0"></i><span class="a" style="right:16px;top:223px">Type ID</span><div class="nr" style="top:239px"></div><i class="pt" style="left:127.0px;top:244.0px;background:#fb28f0"></i><span class="a" style="right:16px;top:239px">Item ID</span></div>
<div class="nd" style="left:1145px;top:446px;width:139px;height:256px;background:#6b6c6f;border-color:#0c0c0c"><div class="nh" style="background:#8691a1">_clip_ctrl (1)</div><svg class="a" style="left:126px;top:3px" width="10" height="7" viewBox="0 0 9 6"><path d="M1 1 L4.5 4.6 L8 1" fill="none" stroke="#0a0a0a" stroke-width="2.2"/></svg><div class="nr" style="top:15px"></div><i class="pt" style="left:3.0px;top:20.0px;background:#fb28f0"></i><span class="a" style="left:14px;top:15px">Item</span><i class="pt" style="left:127.0px;top:20.0px;background:#3254ff"></i><span class="a" style="right:16px;top:15px">Position</span><div class="nr" style="top:31px"></div><i class="pt" style="left:3.0px;top:36.0px;background:#fb28f0"></i><span class="a" style="left:14px;top:31px">ID</span><i class="pt" style="left:127.0px;top:36.0px;background:#3254ff"></i><span class="a" style="right:16px;top:31px">Rotation</span><div class="nr" style="top:47px"></div><i class="pt" style="left:3.0px;top:52.0px;background:#2cf26c"></i><span class="a" style="left:14px;top:47px">Time</span><i class="pt" style="left:127.0px;top:52.0px;background:#3254ff"></i><span class="a" style="right:16px;top:47px">Scaling</span><div class="nr" style="top:63px"></div><i class="pt" style="left:127.0px;top:68.0px;background:#3254ff"></i><span class="a" style="right:16px;top:63px">Right</span><div class="nr" style="top:79px"></div><i class="pt" style="left:127.0px;top:84.0px;background:#3254ff"></i><span class="a" style="right:16px;top:79px">Up</span><div class="nr" style="top:95px"></div><i class="pt" style="left:127.0px;top:100.0px;background:#3254ff"></i><span class="a" style="right:16px;top:95px">Forward</span><div class="nr" style="top:111px"></div><i class="pt" style="left:127.0px;top:116.0px;background:#3254ff"></i><span class="a" style="right:16px;top:111px">World Position</span><div class="nr" style="top:127px"></div><i class="pt" style="left:127.0px;top:132.0px;background:#3254ff"></i><span class="a" style="right:16px;top:127px">World Right</span><div class="nr" style="top:143px"></div><i class="pt" style="left:127.0px;top:148.0px;background:#3254ff"></i><span class="a" style="right:16px;top:143px">World Up</span><div class="nr" style="top:159px"></div><i class="pt" style="left:127.0px;top:164.0px;background:#3254ff"></i><span class="a" style="right:16px;top:159px">World Forward</span><div class="nr" style="top:175px"></div><i class="pt" style="left:127.0px;top:180.0px;background:#3254ff"></i><span class="a" style="right:16px;top:175px">Pivot</span><div class="nr" style="top:191px"></div><i class="pt" style="left:127.0px;top:196.0px;background:#3254ff"></i><span class="a" style="right:16px;top:191px">Pivot Rotation</span><div class="nr" style="top:207px"></div><i class="pt" style="left:127.0px;top:212.0px;background:#fb28f0"></i><span class="a" style="right:16px;top:207px">Item Type</span><div class="nr" style="top:223px"></div><i class="pt" style="left:127.0px;top:228.0px;background:#fb28f0"></i><span class="a" style="right:16px;top:223px">Type ID</span><div class="nr" style="top:239px"></div><i class="pt" style="left:127.0px;top:244.0px;background:#fb28f0"></i><span class="a" style="right:16px;top:239px">Item ID</span></div>
<div class="nd" style="left:1145px;top:734px;width:139px;height:256px;background:#6b6c6f;border-color:#0c0c0c"><div class="nh" style="background:#8691a1">_rag_rate_ctrl (1)</div><svg class="a" style="left:126px;top:3px" width="10" height="7" viewBox="0 0 9 6"><path d="M1 1 L4.5 4.6 L8 1" fill="none" stroke="#0a0a0a" stroke-width="2.2"/></svg><div class="nr" style="top:15px"></div><i class="pt" style="left:3.0px;top:20.0px;background:#fb28f0"></i><span class="a" style="left:14px;top:15px">Item</span><i class="pt" style="left:127.0px;top:20.0px;background:#3254ff"></i><span class="a" style="right:16px;top:15px">Position</span><div class="nr" style="top:31px"></div><i class="pt" style="left:3.0px;top:36.0px;background:#fb28f0"></i><span class="a" style="left:14px;top:31px">ID</span><i class="pt" style="left:127.0px;top:36.0px;background:#3254ff"></i><span class="a" style="right:16px;top:31px">Rotation</span><div class="nr" style="top:47px"></div><i class="pt" style="left:3.0px;top:52.0px;background:#2cf26c"></i><span class="a" style="left:14px;top:47px">Time</span><i class="pt" style="left:127.0px;top:52.0px;background:#3254ff"></i><span class="a" style="right:16px;top:47px">Scaling</span><div class="nr" style="top:63px"></div><i class="pt" style="left:127.0px;top:68.0px;background:#3254ff"></i><span class="a" style="right:16px;top:63px">Right</span><div class="nr" style="top:79px"></div><i class="pt" style="left:127.0px;top:84.0px;background:#3254ff"></i><span class="a" style="right:16px;top:79px">Up</span><div class="nr" style="top:95px"></div><i class="pt" style="left:127.0px;top:100.0px;background:#3254ff"></i><span class="a" style="right:16px;top:95px">Forward</span><div class="nr" style="top:111px"></div><i class="pt" style="left:127.0px;top:116.0px;background:#3254ff"></i><span class="a" style="right:16px;top:111px">World Position</span><div class="nr" style="top:127px"></div><i class="pt" style="left:127.0px;top:132.0px;background:#3254ff"></i><span class="a" style="right:16px;top:127px">World Right</span><div class="nr" style="top:143px"></div><i class="pt" style="left:127.0px;top:148.0px;background:#3254ff"></i><span class="a" style="right:16px;top:143px">World Up</span><div class="nr" style="top:159px"></div><i class="pt" style="left:127.0px;top:164.0px;background:#3254ff"></i><span class="a" style="right:16px;top:159px">World Forward</span><div class="nr" style="top:175px"></div><i class="pt" style="left:127.0px;top:180.0px;background:#3254ff"></i><span class="a" style="right:16px;top:175px">Pivot</span><div class="nr" style="top:191px"></div><i class="pt" style="left:127.0px;top:196.0px;background:#3254ff"></i><span class="a" style="right:16px;top:191px">Pivot Rotation</span><div class="nr" style="top:207px"></div><i class="pt" style="left:127.0px;top:212.0px;background:#fb28f0"></i><span class="a" style="right:16px;top:207px">Item Type</span><div class="nr" style="top:223px"></div><i class="pt" style="left:127.0px;top:228.0px;background:#fb28f0"></i><span class="a" style="right:16px;top:223px">Type ID</span><div class="nr" style="top:239px"></div><i class="pt" style="left:127.0px;top:244.0px;background:#fb28f0"></i><span class="a" style="right:16px;top:239px">Item ID</span></div>
<div class="nd" style="left:1305px;top:78px;width:191px;height:179px;background:#6b6c6f;border-color:#0c0c0c"><div class="nh" style="background:#8691a1">Mesh Info (1)</div><svg class="a" style="left:178px;top:3px" width="10" height="7" viewBox="0 0 9 6"><path d="M1 1 L4.5 4.6 L8 1" fill="none" stroke="#0a0a0a" stroke-width="2.2"/></svg><div class="a" style="left:2px;top:17px;width:185px;height:79px;background:#47484c"></div><div class="a" style="left:57px;top:19px;width:75px;height:75px;background:#343436;color:#e0e0e0;line-height:14px"><span class="a" style="left:2px;top:1px">(world)</span><span class="a" style="left:18px;top:14px">(self)</span><svg class="a" style="left:2px;top:17px" width="11" height="8"><path d="M0 4L5.5 0L11 4L5.5 8Z" fill="#0a0a0a"/></svg></div><div class="nr" style="top:98px"></div><i class="pt" style="left:3.0px;top:103.0px;background:#fb28f0"></i><span class="a" style="left:14px;top:98px">Object</span><i class="pt" style="left:179.0px;top:103.0px;background:#3254ff"></i><span class="a" style="right:16px;top:98px">Point Base Pos</span><div class="nr" style="top:114px"></div><i class="pt" style="left:3.0px;top:119.0px;background:#fb28f0"></i><span class="a" style="left:14px;top:114px">Point Index</span><i class="pt" style="left:179.0px;top:119.0px;background:#3254ff"></i><span class="a" style="right:16px;top:114px">Point Final Pos</span><div class="nr" style="top:130px"></div><i class="pt" style="left:179.0px;top:135.0px;background:#3254ff"></i><span class="a" style="right:16px;top:130px">Point Displacement</span><div class="nr" style="top:146px"></div><i class="pt" style="left:179.0px;top:151.0px;background:#3254ff"></i><span class="a" style="right:16px;top:146px">Base Normal</span><div class="nr" style="top:162px"></div><i class="pt" style="left:179.0px;top:167.0px;background:#3254ff"></i><span class="a" style="right:16px;top:162px">Final Normal</span></div>
<div class="nd" style="left:1721px;top:142px;width:137px;height:243px;background:#6b6c6f;border-color:#0c0c0c"><div class="nh" style="background:#6d7c7e">Gradient (1)</div><svg class="a" style="left:124px;top:3px" width="10" height="7" viewBox="0 0 9 6"><path d="M1 1 L4.5 4.6 L8 1" fill="none" stroke="#0a0a0a" stroke-width="2.2"/></svg><div class="a" style="left:2px;top:17px;width:131px;height:79px;background:#47484c"></div><div class="a" style="left:30px;top:19px;width:75px;height:75px;background:#000"></div><div class="nr" style="top:98px"></div><i class="pt" style="left:3.0px;top:103.0px;background:#f8501c"></i><span class="a" style="left:14px;top:98px">Bg Color</span><i class="pt" style="left:125.0px;top:103.0px;background:#f8501c"></i><span class="a" style="right:16px;top:98px">Color</span><div class="nr" style="top:114px"></div><i class="pt" style="left:3.0px;top:119.0px;background:#2cf26c"></i><span class="a" style="left:14px;top:114px">Input</span><i class="pt" style="left:125.0px;top:119.0px;background:#2cf26c"></i><span class="a" style="right:16px;top:114px">Alpha</span><div class="nr" style="top:130px"></div><i class="pt" style="left:3.0px;top:135.0px;background:#fb28f0"></i><span class="a" style="left:14px;top:130px">Blending</span><div class="nr" style="top:146px"></div><i class="pt" style="left:3.0px;top:151.0px;background:#f8501c"></i><span class="a" style="left:14px;top:146px">Key (2) Color</span><div class="nr" style="top:162px"></div><i class="pt" style="left:3.0px;top:167.0px;background:#2cf26c"></i><span class="a" style="left:14px;top:162px">Key (2) Pos</span><div class="nr" style="top:178px"></div><i class="pt" style="left:3.0px;top:183.0px;background:#2cf26c"></i><span class="a" style="left:14px;top:178px">Key (2) Alpha</span><div class="nr" style="top:194px"></div><i class="pt" style="left:3.0px;top:199.0px;background:#f8501c"></i><span class="a" style="left:14px;top:194px">Key (3) Color</span><div class="nr" style="top:210px"></div><i class="pt" style="left:3.0px;top:215.0px;background:#2cf26c"></i><span class="a" style="left:14px;top:210px">Key (3) Pos</span><div class="nr" style="top:226px"></div><i class="pt" style="left:3.0px;top:231.0px;background:#2cf26c"></i><span class="a" style="left:14px;top:226px">Key (3) Alpha</span></div>
<div class="nd" style="left:1561px;top:270px;width:100px;height:48px;background:#6c6253;border-color:#0c0c0c"><div class="nh" style="background:#9b6516">Distance (1)</div><svg class="a" style="left:87px;top:3px" width="10" height="7" viewBox="0 0 9 6"><path d="M1 1 L4.5 4.6 L8 1" fill="none" stroke="#0a0a0a" stroke-width="2.2"/></svg><div class="nr" style="top:15px"></div><i class="pt" style="left:3.0px;top:20.0px;background:#3254ff"></i><span class="a" style="left:14px;top:15px">From</span><i class="pt" style="left:88.0px;top:20.0px;background:#2cf26c"></i><span class="a" style="right:16px;top:15px">Result</span><div class="nr" style="top:31px"></div><i class="pt" style="left:3.0px;top:36.0px;background:#3254ff"></i><span class="a" style="left:14px;top:31px">To</span></div>
<div class="nd" style="left:1385px;top:494px;width:108px;height:32px;background:#6c6253;border-color:#0c0c0c"><div class="nh" style="background:#9b6516">X (1)</div><svg class="a" style="left:95px;top:3px" width="10" height="7" viewBox="0 0 9 6"><path d="M1 1 L4.5 4.6 L8 1" fill="none" stroke="#0a0a0a" stroke-width="2.2"/></svg><div class="nr" style="top:15px"></div><i class="pt" style="left:3.0px;top:20.0px;background:#3254ff"></i><span class="a" style="left:14px;top:15px">Vector</span><i class="pt" style="left:96.0px;top:20.0px;background:#2cf26c"></i><span class="a" style="right:16px;top:15px">Scalar</span></div>
<div class="nd" style="left:1385px;top:542px;width:108px;height:32px;background:#6c6253;border-color:#0c0c0c"><div class="nh" style="background:#9b6516">Y (1)</div><svg class="a" style="left:95px;top:3px" width="10" height="7" viewBox="0 0 9 6"><path d="M1 1 L4.5 4.6 L8 1" fill="none" stroke="#0a0a0a" stroke-width="2.2"/></svg><div class="nr" style="top:15px"></div><i class="pt" style="left:3.0px;top:20.0px;background:#3254ff"></i><span class="a" style="left:14px;top:15px">Vector</span><i class="pt" style="left:96.0px;top:20.0px;background:#2cf26c"></i><span class="a" style="right:16px;top:15px">Scalar</span></div>
<div class="nd" style="left:1561px;top:526px;width:84px;height:48px;background:#6c6253;border-color:#0c0c0c"><div class="nh" style="background:#9b6516">Multiply (1)</div><svg class="a" style="left:71px;top:3px" width="10" height="7" viewBox="0 0 9 6"><path d="M1 1 L4.5 4.6 L8 1" fill="none" stroke="#0a0a0a" stroke-width="2.2"/></svg><div class="nr" style="top:15px"></div><i class="pt" style="left:3.0px;top:20.0px;background:#2cf26c"></i><span class="a" style="left:14px;top:15px">A</span><i class="pt" style="left:72.0px;top:20.0px;background:#2cf26c"></i><span class="a" style="right:16px;top:15px">Result</span><div class="nr" style="top:31px"></div><i class="pt" style="left:3.0px;top:36.0px;background:#2cf26c"></i><span class="a" style="left:14px;top:31px">B</span></div>
<div class="nd" style="left:1721px;top:414px;width:132px;height:323px;background:#6b6c6f;border-color:#0c0c0c"><div class="nh" style="background:#8691a1">Turbulence (1)</div><svg class="a" style="left:119px;top:3px" width="10" height="7" viewBox="0 0 9 6"><path d="M1 1 L4.5 4.6 L8 1" fill="none" stroke="#0a0a0a" stroke-width="2.2"/></svg><div class="a" style="left:2px;top:17px;width:126px;height:79px;background:#47484c"></div><div class="a" style="left:27px;top:19px;width:75px;height:75px;background:#999;overflow:hidden"><svg class="a" style="left:0;top:0" width="75" height="75" viewBox="0 0 75 75"><defs><filter id="bl" x="-30%" y="-30%" width="160%" height="160%"><feGaussianBlur stdDeviation="5.5"/></filter></defs><rect width="75" height="75" fill="#8c8c8c"/><g filter="url(#bl)"><rect x="-10" y="46" width="95" height="42" fill="#cfcfcf"/><ellipse cx="7" cy="54" rx="12" ry="9" fill="#fff"/><ellipse cx="62" cy="55" rx="14" ry="9" fill="#fff"/><ellipse cx="36" cy="48" rx="10" ry="6" fill="#e0e0e0"/><path d="M46 22L70 -4L82 2L58 28Z" fill="#fff"/><ellipse cx="57" cy="8" rx="9" ry="7" fill="#f8f8f8"/><ellipse cx="4" cy="6" rx="9" ry="8" fill="#b0b0b0"/><ellipse cx="28" cy="3" rx="10" ry="6" fill="#6e6e6e"/><ellipse cx="22" cy="30" rx="11" ry="15" fill="#1c1c1c"/><ellipse cx="24" cy="32" rx="6" ry="6" fill="#1a1a1a"/><ellipse cx="74" cy="24" rx="9" ry="10" fill="#2a2a2a"/><ellipse cx="48" cy="30" rx="8" ry="6" fill="#5a5a5a"/><ellipse cx="48" cy="70" rx="8" ry="6" fill="#505050"/><ellipse cx="23" cy="69" rx="8" ry="5" fill="#b0b0b0"/></g></svg></div><div class="nr" style="top:98px"></div><i class="pt" style="left:3.0px;top:103.0px;background:#f8501c"></i><span class="a" style="left:14px;top:98px">Bg Color</span><i class="pt" style="left:120.0px;top:103.0px;background:#f8501c"></i><span class="a" style="right:16px;top:98px">Color</span><div class="nr" style="top:114px"></div><i class="pt" style="left:3.0px;top:119.0px;background:#f8501c"></i><span class="a" style="left:14px;top:114px">Fg Color</span><i class="pt" style="left:120.0px;top:119.0px;background:#2cf26c"></i><span class="a" style="right:16px;top:114px">Alpha</span><div class="nr" style="top:130px"></div><i class="pt" style="left:3.0px;top:135.0px;background:#fb28f0"></i><span class="a" style="left:14px;top:130px">Blending</span><i class="pt" style="left:120.0px;top:135.0px;background:#3254ff"></i><span class="a" style="right:16px;top:130px">Bump</span><div class="nr" style="top:146px"></div><i class="pt" style="left:3.0px;top:151.0px;background:#2cf26c"></i><span class="a" style="left:14px;top:146px">Opacity</span><div class="nr" style="top:162px"></div><i class="pt" style="left:3.0px;top:167.0px;background:#f6ea1c"></i><span class="a" style="left:14px;top:162px">Function</span><div class="nr" style="top:178px"></div><i class="pt" style="left:3.0px;top:183.0px;background:#3254ff"></i><span class="a" style="left:14px;top:178px">Bump</span><div class="nr" style="top:194px"></div><i class="pt" style="left:3.0px;top:199.0px;background:#2cf26c"></i><span class="a" style="left:14px;top:194px">BumpAmp</span><div class="nr" style="top:210px"></div><i class="pt" style="left:3.0px;top:215.0px;background:#2cf26c"></i><span class="a" style="left:14px;top:210px">Small Scale</span><div class="nr" style="top:226px"></div><i class="pt" style="left:3.0px;top:231.0px;background:#2cf26c"></i><span class="a" style="left:14px;top:226px">Contrast</span><div class="nr" style="top:242px"></div><i class="pt" style="left:3.0px;top:247.0px;background:#2cf26c"></i><span class="a" style="left:14px;top:242px">Frequencies</span><div class="nr" style="top:258px"></div><i class="pt" style="left:3.0px;top:263.0px;background:#3254ff"></i><span class="a" style="left:14px;top:258px">Scale</span><div class="nr" style="top:274px"></div><i class="pt" style="left:3.0px;top:279.0px;background:#3254ff"></i><span class="a" style="left:14px;top:274px">Position</span><div class="nr" style="top:290px"></div><i class="pt" style="left:3.0px;top:295.0px;background:#3254ff"></i><span class="a" style="left:14px;top:290px">Rotation</span><div class="nr" style="top:306px"></div><i class="pt" style="left:3.0px;top:311.0px;background:#3254ff"></i><span class="a" style="left:14px;top:306px">Falloff</span></div>
<div class="nd" style="left:1721px;top:766px;width:85px;height:48px;background:#6c6253;border-color:#0c0c0c"><div class="nh" style="background:#9b6516">Pow (1)</div><svg class="a" style="left:72px;top:3px" width="10" height="7" viewBox="0 0 9 6"><path d="M1 1 L4.5 4.6 L8 1" fill="none" stroke="#0a0a0a" stroke-width="2.2"/></svg><div class="nr" style="top:15px"></div><i class="pt" style="left:3.0px;top:20.0px;background:#2cf26c"></i><span class="a" style="left:14px;top:15px">In</span><i class="pt" style="left:73.0px;top:20.0px;background:#2cf26c"></i><span class="a" style="right:16px;top:15px">Out</span><div class="nr" style="top:31px"></div><i class="pt" style="left:3.0px;top:36.0px;background:#2cf26c"></i><span class="a" style="left:14px;top:31px">Pow</span></div>
<div class="nd" style="left:1721px;top:862px;width:122px;height:96px;background:#6c6253;border-color:#0c0c0c"><div class="nh" style="background:#9b6516">Remap (1)</div><svg class="a" style="left:109px;top:3px" width="10" height="7" viewBox="0 0 9 6"><path d="M1 1 L4.5 4.6 L8 1" fill="none" stroke="#0a0a0a" stroke-width="2.2"/></svg><div class="nr" style="top:15px"></div><i class="pt" style="left:3.0px;top:20.0px;background:#2cf26c"></i><span class="a" style="left:14px;top:15px">Input</span><i class="pt" style="left:110.0px;top:20.0px;background:#2cf26c"></i><span class="a" style="right:16px;top:15px">Result</span><div class="nr" style="top:31px"></div><i class="pt" style="left:3.0px;top:36.0px;background:#2cf26c"></i><span class="a" style="left:14px;top:31px">Min</span><div class="nr" style="top:47px"></div><i class="pt" style="left:3.0px;top:52.0px;background:#2cf26c"></i><span class="a" style="left:14px;top:47px">Max</span><div class="nr" style="top:63px"></div><i class="pt" style="left:3.0px;top:68.0px;background:#2cf26c"></i><span class="a" style="left:14px;top:63px">New Min</span><div class="nr" style="top:79px"></div><i class="pt" style="left:3.0px;top:84.0px;background:#2cf26c"></i><span class="a" style="left:14px;top:79px">New Max</span></div>
<div class="nd" style="left:1385px;top:894px;width:108px;height:32px;background:#6c6253;border-color:#6fb4ec"><div class="nh" style="background:#9b6516">X (2)</div><svg class="a" style="left:95px;top:3px" width="10" height="7" viewBox="0 0 9 6"><path d="M1 1 L4.5 4.6 L8 1" fill="none" stroke="#0a0a0a" stroke-width="2.2"/></svg><div class="nr" style="top:15px"></div><i class="pt" style="left:3.0px;top:20.0px;background:#3254ff"></i><span class="a" style="left:14px;top:15px">Vector</span><i class="pt" style="left:96.0px;top:20.0px;background:#2cf26c"></i><span class="a" style="right:16px;top:15px">Scalar</span></div>
<div class="nd" style="left:1385px;top:942px;width:108px;height:32px;background:#6c6253;border-color:#6fb4ec"><div class="nh" style="background:#9b6516">Y (2)</div><svg class="a" style="left:95px;top:3px" width="10" height="7" viewBox="0 0 9 6"><path d="M1 1 L4.5 4.6 L8 1" fill="none" stroke="#0a0a0a" stroke-width="2.2"/></svg><div class="nr" style="top:15px"></div><i class="pt" style="left:3.0px;top:20.0px;background:#3254ff"></i><span class="a" style="left:14px;top:15px">Vector</span><i class="pt" style="left:96.0px;top:20.0px;background:#2cf26c"></i><span class="a" style="right:16px;top:15px">Scalar</span></div>
<div class="nd" style="left:1721px;top:1022px;width:102px;height:64px;background:#6b6c6f;border-color:#0c0c0c"><div class="nh" style="background:#7c7f9c">Displacement</div><svg class="a" style="left:89px;top:3px" width="10" height="7" viewBox="0 0 9 6"><path d="M1 1 L4.5 4.6 L8 1" fill="none" stroke="#0a0a0a" stroke-width="2.2"/></svg><div class="nr" style="top:15px"></div><i class="pt" style="left:3.0px;top:20.0px;background:#2cf26c"></i><span class="a" style="left:14px;top:15px">Lag Rate (s/m)</span><div class="nr" style="top:31px"></div><i class="pt" style="left:3.0px;top:36.0px;background:#3254ff"></i><span class="a" style="left:14px;top:31px">Pivot Position</span><div class="nr" style="top:47px"></div><i class="pt" style="left:3.0px;top:52.0px;background:#2cf26c"></i><span class="a" style="left:14px;top:47px">Weight</span></div>
</div>
<div class="a" style="left:1px;top:0px;color:#e4e4e4">X:674 Y:-30 Zoom:100%</div>
</div>
<div class="a" style="left:1112px;top:1139px;width:795px;height:18px;background:#313133;border-radius:3px"></div>
</body></html>
